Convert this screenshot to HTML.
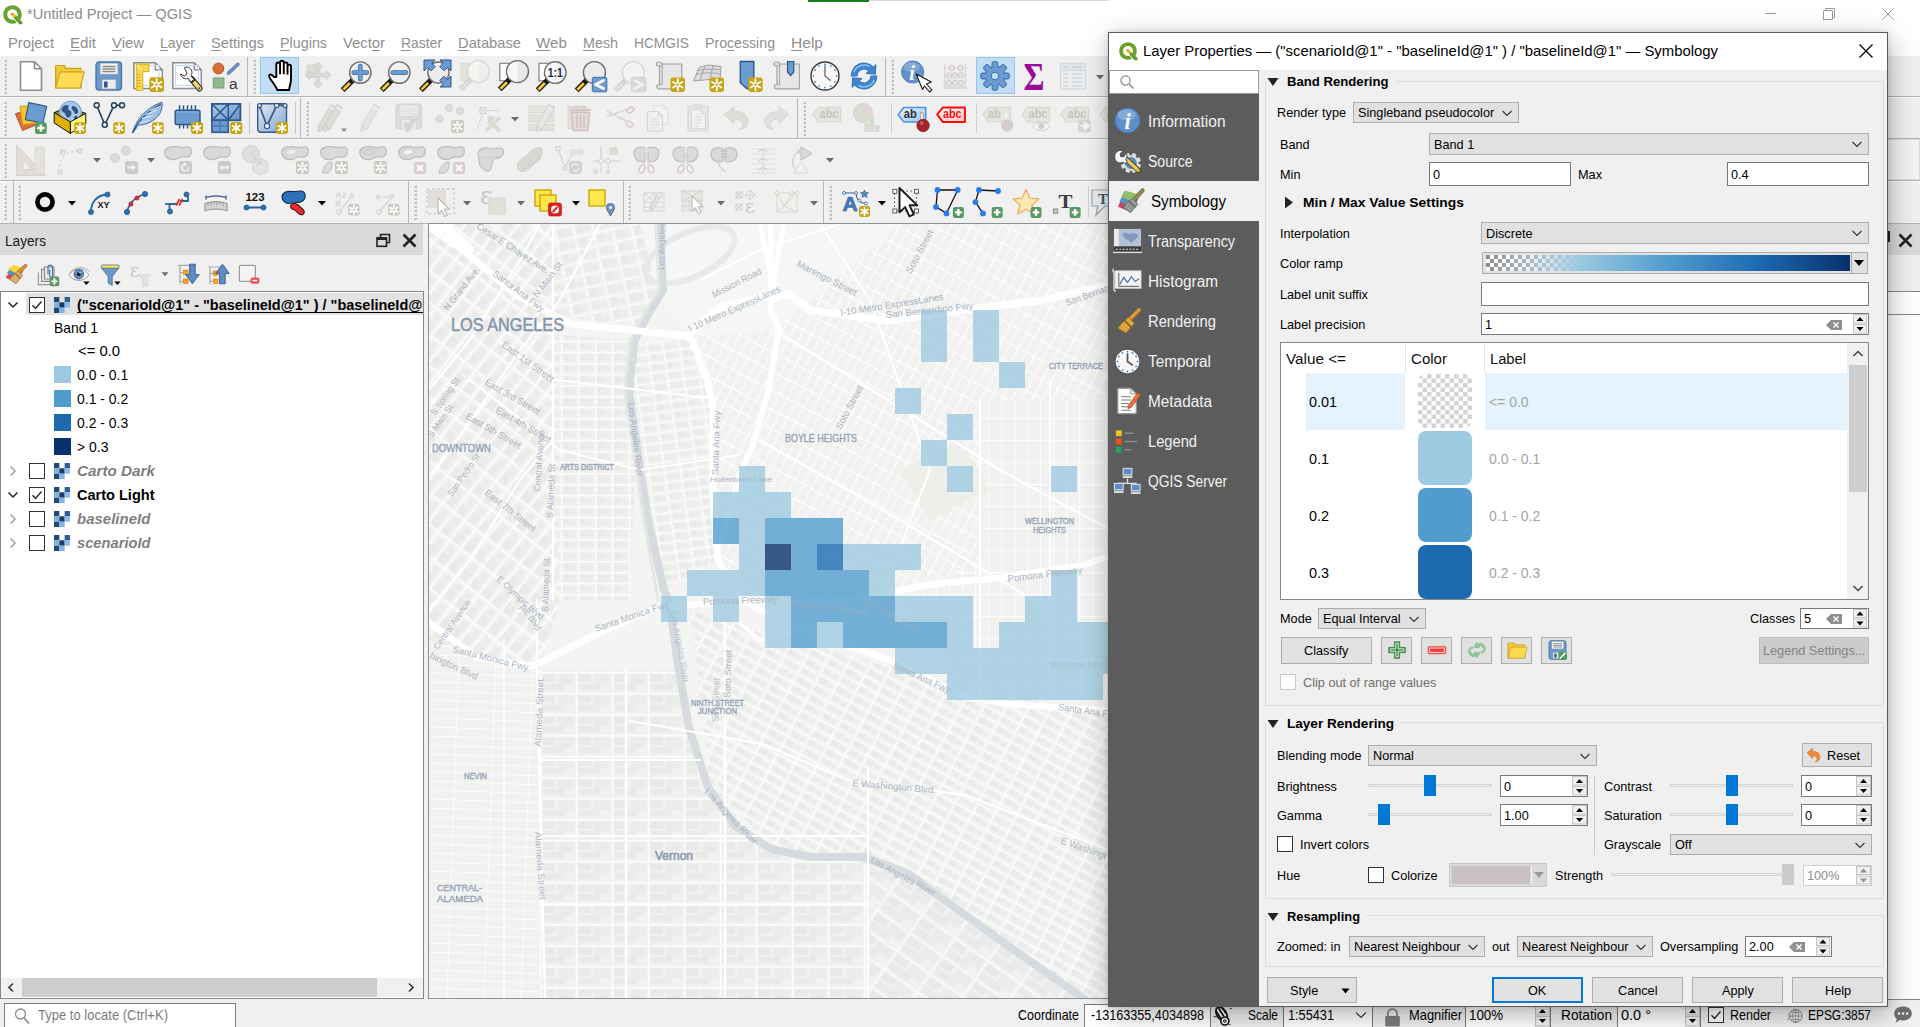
<!DOCTYPE html><html><head><meta charset="utf-8"><title>QGIS</title><style>
html,body{margin:0;padding:0}
body{width:1920px;height:1027px;position:relative;overflow:hidden;background:#f0f0f0;font-family:"Liberation Sans",sans-serif;}
.a{position:absolute;display:block}
.t{position:absolute;white-space:pre;display:block}
u{text-decoration:underline;text-underline-offset:1.5px;text-decoration-thickness:1px;text-decoration-skip-ink:none}
</style></head><body>
<div class="a" style="left:0px;top:0px;width:1920px;height:56px;background:#ffffff;"></div>
<div class="a" style="left:808px;top:0px;width:61px;height:2px;background:#1a7d1a;"></div>
<div class="a" style="left:869px;top:0px;width:240px;height:1px;background:#d9d9d9;"></div>
<svg class="a" style="left:2px;top:4px;" width="21" height="21" viewBox="0 0 24 24"><path d="M12 1.500C6 1.500 1.500 6 1.500 12S6 22.500 12 22.500c1.800 0 3.500-.4 5-1.200L13.800 17.700c-.6.200-1.200.300-1.800.300-3.300 0-6-2.700-6-6s2.700-6 6-6 6 2.700 6 6c0 1.100-.3 2.100-.8 3l3.400 3.400c1.200-1.800 1.900-4 1.900-6.400C22.500 6 18 1.500 12 1.500z" fill="#6aa22c"/><path d="M9.800 9.600l4.200 1.200-2.800 2.800z" fill="#ee7913"/><path d="M11.200 13.600l2.800-2.800 2.300 2.400-2.800 2.800z" fill="#f0c020"/><path d="M13.500 16l2.800-2.800 7 7.300v2.500h-3.300z" fill="#5a962a"/><path d="M14.600 15l1-1 7.200 7.400" stroke="#8cc04a" stroke-width=".8" fill="none"/></svg>
<span class="t" style="left:27.0px;top:4.0px;font-size:15px;line-height:20px;color:#8c8c8c;transform:scaleX(0.9799);transform-origin:0 50%;">*Untitled Project — QGIS</span>
<svg class="a" style="left:1750px;top:0px;" width="170" height="30" viewBox="0 0 170 30"><path d="M15 13.5h11" stroke="#9a9a9a" stroke-width="1" fill="none"/><path d="M75.5 10.5v-2h9v9h-2M73.5 10.5h9v9h-9z" stroke="#9a9a9a" stroke-width="1" fill="none"/><path d="M132.5 8.5l11 11M143.5 8.5l-11 11" stroke="#9a9a9a" stroke-width="1" fill="none"/></svg>
<span class="t" style="left:8.0px;top:33.0px;font-size:15px;line-height:20px;color:#8f8f8f;transform:scaleX(0.9854);transform-origin:0 50%;">Pro<u>j</u>ect</span>
<span class="t" style="left:70.0px;top:33.0px;font-size:15px;line-height:20px;color:#8f8f8f;transform:scaleX(1.0059);transform-origin:0 50%;"><u>E</u>dit</span>
<span class="t" style="left:112.0px;top:33.0px;font-size:15px;line-height:20px;color:#8f8f8f;transform:scaleX(0.9925);transform-origin:0 50%;"><u>V</u>iew</span>
<span class="t" style="left:160.0px;top:33.0px;font-size:15px;line-height:20px;color:#8f8f8f;transform:scaleX(0.9329);transform-origin:0 50%;"><u>L</u>ayer</span>
<span class="t" style="left:211.0px;top:33.0px;font-size:15px;line-height:20px;color:#8f8f8f;transform:scaleX(0.9779);transform-origin:0 50%;"><u>S</u>ettings</span>
<span class="t" style="left:280.0px;top:33.0px;font-size:15px;line-height:20px;color:#8f8f8f;transform:scaleX(0.9554);transform-origin:0 50%;"><u>P</u>lugins</span>
<span class="t" style="left:343.0px;top:33.0px;font-size:15px;line-height:20px;color:#8f8f8f;transform:scaleX(0.9877);transform-origin:0 50%;">Vect<u>o</u>r</span>
<span class="t" style="left:401.0px;top:33.0px;font-size:15px;line-height:20px;color:#8f8f8f;transform:scaleX(0.9281);transform-origin:0 50%;"><u>R</u>aster</span>
<span class="t" style="left:458.0px;top:33.0px;font-size:15px;line-height:20px;color:#8f8f8f;transform:scaleX(0.9812);transform-origin:0 50%;"><u>D</u>atabase</span>
<span class="t" style="left:536.0px;top:33.0px;font-size:15px;line-height:20px;color:#8f8f8f;transform:scaleX(1.0141);transform-origin:0 50%;"><u>W</u>eb</span>
<span class="t" style="left:583.0px;top:33.0px;font-size:15px;line-height:20px;color:#8f8f8f;transform:scaleX(0.9543);transform-origin:0 50%;"><u>M</u>esh</span>
<span class="t" style="left:634.0px;top:33.0px;font-size:15px;line-height:20px;color:#8f8f8f;transform:scaleX(0.9167);transform-origin:0 50%;">HCMGIS</span>
<span class="t" style="left:705.0px;top:33.0px;font-size:15px;line-height:20px;color:#8f8f8f;transform:scaleX(0.9434);transform-origin:0 50%;">Pro<u>c</u>essing</span>
<span class="t" style="left:791.0px;top:33.0px;font-size:15px;line-height:20px;color:#8f8f8f;transform:scaleX(1.0373);transform-origin:0 50%;"><u>H</u>elp</span>
<div class="a" style="left:0px;top:96px;width:1920px;height:1px;background:#b4b4b4;"></div>
<div class="a" style="left:0px;top:97px;width:1920px;height:1px;background:#fafafa;"></div>
<div class="a" style="left:0px;top:138px;width:1920px;height:1px;background:#b4b4b4;"></div>
<div class="a" style="left:0px;top:139px;width:1920px;height:1px;background:#fafafa;"></div>
<div class="a" style="left:0px;top:180px;width:1920px;height:1px;background:#b4b4b4;"></div>
<div class="a" style="left:0px;top:181px;width:1920px;height:1px;background:#fafafa;"></div>
<div class="a" style="left:0px;top:223px;width:1920px;height:1px;background:#b4b4b4;"></div>
<div class="a" style="left:0px;top:224px;width:1920px;height:1px;background:#fafafa;"></div>
<svg class="a" style="left:4px;top:59px;" width="3" height="35" viewBox="0 0 3 35"><path d="M2.6 0.2V2.8H0z" fill="#a3a3a3"/><path d="M2.6 4.2V6.8H0z" fill="#a3a3a3"/><path d="M2.6 8.2V10.8H0z" fill="#a3a3a3"/><path d="M2.6 12.2V14.8H0z" fill="#a3a3a3"/><path d="M2.6 16.2V18.8H0z" fill="#a3a3a3"/><path d="M2.6 20.2V22.8H0z" fill="#a3a3a3"/><path d="M2.6 24.2V26.8H0z" fill="#a3a3a3"/><path d="M2.6 28.2V30.8H0z" fill="#a3a3a3"/><path d="M2.6 32.2V34.8H0z" fill="#a3a3a3"/></svg>
<div class="a" style="left:247px;top:57px;width:1px;height:39px;background:#b9b9b9;"></div>
<svg class="a" style="left:253px;top:59px;" width="3" height="35" viewBox="0 0 3 35"><path d="M2.6 0.2V2.8H0z" fill="#a3a3a3"/><path d="M2.6 4.2V6.8H0z" fill="#a3a3a3"/><path d="M2.6 8.2V10.8H0z" fill="#a3a3a3"/><path d="M2.6 12.2V14.8H0z" fill="#a3a3a3"/><path d="M2.6 16.2V18.8H0z" fill="#a3a3a3"/><path d="M2.6 20.2V22.8H0z" fill="#a3a3a3"/><path d="M2.6 24.2V26.8H0z" fill="#a3a3a3"/><path d="M2.6 28.2V30.8H0z" fill="#a3a3a3"/><path d="M2.6 32.2V34.8H0z" fill="#a3a3a3"/></svg>
<div class="a" style="left:885px;top:57px;width:1px;height:39px;background:#b9b9b9;"></div>
<svg class="a" style="left:891px;top:59px;" width="3" height="35" viewBox="0 0 3 35"><path d="M2.6 0.2V2.8H0z" fill="#a3a3a3"/><path d="M2.6 4.2V6.8H0z" fill="#a3a3a3"/><path d="M2.6 8.2V10.8H0z" fill="#a3a3a3"/><path d="M2.6 12.2V14.8H0z" fill="#a3a3a3"/><path d="M2.6 16.2V18.8H0z" fill="#a3a3a3"/><path d="M2.6 20.2V22.8H0z" fill="#a3a3a3"/><path d="M2.6 24.2V26.8H0z" fill="#a3a3a3"/><path d="M2.6 28.2V30.8H0z" fill="#a3a3a3"/><path d="M2.6 32.2V34.8H0z" fill="#a3a3a3"/></svg>
<div class="a" style="left:260px;top:57px;width:39px;height:37px;background:#c2dcf3;border:1px solid #90c8f6;box-sizing:border-box;"></div>
<div class="a" style="left:976px;top:57px;width:39px;height:37px;background:#c2dcf3;border:1px solid #90c8f6;box-sizing:border-box;"></div>
<svg class="a" style="left:16.0px;top:61.0px;overflow:visible;" width="30" height="30" viewBox="0 0 30 30"><path d="M4.5 0.7h14l7 7v21.6h-21z" fill="#fff" stroke="#8c8c8c" stroke-width="1.6" stroke-linejoin="round"/><path d="M18.5 0.7v7h7" fill="none" stroke="#8c8c8c" stroke-width="1.6" stroke-linejoin="round"/></svg>
<svg class="a" style="left:54.0px;top:61.0px;overflow:visible;" width="30" height="30" viewBox="0 0 30 30"><path d="M1.7 4.5h9.300v2.800h16v19.700H1.700z" fill="#f4c93a" stroke="#cfa41b" stroke-width="1.200" stroke-linejoin="round"/><path d="M1.700 27V6" stroke="#cfa41b" stroke-width="1.2"/><path d="M1.700 27L6 10.800h24.200L26 27z" fill="#fddb52" stroke="#cfa41b" stroke-width="1.200" stroke-linejoin="round"/></svg>
<svg class="a" style="left:93.0px;top:61.0px;overflow:visible;" width="30" height="30" viewBox="0 0 30 30"><rect x="3" y="1" width="25.500" height="28" rx="3" fill="#6c98ca" stroke="#4773a8" stroke-width="1.3"/><rect x="7.500" y="2.500" width="17" height="10.500" fill="#f4f4f4" stroke="#d0d0d0" stroke-width=".6"/><path d="M9.500 5.500h13M9.500 8h13M9.500 10.500h13" stroke="#8a8a8a" stroke-width="1.4"/><rect x="9" y="18.500" width="14" height="9.500" fill="#ededed" stroke="#9aa7b8" stroke-width=".8"/><rect x="11" y="20.500" width="3.600" height="6" fill="#35588a"/></svg>
<svg class="a" style="left:133.0px;top:61.0px;overflow:visible;" width="30" height="30" viewBox="0 0 30 30"><path d="M0.8 1.75h21.5l7 7v18.7h-28.5z" fill="#fff" stroke="#8c8c8c" stroke-width="1.5" stroke-linejoin="round"/><path d="M22.3 1.75v7h7" fill="none" stroke="#8c8c8c" stroke-width="1.5" stroke-linejoin="round"/><rect x="7" y="4.500" width="19" height="20" fill="none" stroke="#c9d8f6" stroke-width="1.200"/><path d="M3.250 3.100H16v7.500H9.800V29.400H3.250z" fill="#f9d94a" stroke="#d9ae1c" stroke-width="1"/><path d="M4 4l5 5" stroke="#fbe98a" stroke-width="1.500"/><path d="M4 13.500h3.500M4 16.500h3.500M4 19.500h3.500M4 22.500h3.500M4 25.500h3.500" stroke="#d9ae1c" stroke-width="1"/><rect x="16.4" y="16.3" width="14.6" height="14.6" rx="2.4" fill="#c8a415"/><path d="M23.7 23.6L23.7 29.1M23.7 23.6L18.9 26.4M23.7 23.6L18.9 20.8M23.7 23.6L23.7 18.1M23.7 23.6L28.5 20.8M23.7 23.6L28.5 26.4" stroke="#fff" stroke-width="1.9" stroke-linecap="round"/><circle cx="23.7" cy="23.6" r="1.2" fill="#c8a415"/></svg>
<svg class="a" style="left:172.0px;top:61.0px;overflow:visible;" width="30" height="30" viewBox="0 0 30 30"><path d="M0.8 1.75h21.5l7 7v18.7h-28.5z" fill="#fff" stroke="#8c8c8c" stroke-width="1.5" stroke-linejoin="round"/><path d="M22.3 1.75v7h7" fill="none" stroke="#8c8c8c" stroke-width="1.5" stroke-linejoin="round"/><rect x="3.500" y="4.500" width="23" height="20" fill="none" stroke="#c9d8f6" stroke-width="1.300"/><path d="M19.500 18l8 9.500" stroke="#2a2a2a" stroke-width="6" stroke-linecap="round"/><path d="M19.500 18l8 9.500" stroke="#f0d878" stroke-width="4" stroke-linecap="round"/><path d="M19 17l3 3.500" stroke="#2a2a2a" stroke-width="5"/><circle cx="27.300" cy="27.300" r="1" fill="#444"/><path d="M12.500 6.500c3.500-1.500 7.500 1 7.500 5 0 1.500-.5 2.500-1 3.500l3 3.500-3 2.500-3-3.500c-3.500 1-7-1-7.500-4.500l4 2 2.500-2z" fill="#f4f4f4" stroke="#3a3a3a" stroke-width="1"/></svg>
<svg class="a" style="left:211.0px;top:61.0px;overflow:visible;" width="30" height="30" viewBox="0 0 30 30"><circle cx="7.400" cy="7.500" r="5.400" fill="#d66f38" stroke="#b8541f" stroke-width="1"/><path d="M17.500 12L27 3.300" stroke="#3f6ea6" stroke-width="3.400" stroke-linecap="round"/><path d="M17.500 12L27 3.300" stroke="#6b9bd0" stroke-width="2" stroke-linecap="round"/><rect x="2.300" y="17" width="10.600" height="10" fill="#8fb98f" stroke="#6fa070" stroke-width="1"/><text x="22.200" y="27.500" font-size="15.500" text-anchor="middle" font-family="Liberation Sans, sans-serif" fill="#3a3a3a">a</text></svg>
<svg class="a" style="left:264.0px;top:61.0px;overflow:visible;" width="30" height="30" viewBox="0 0 30 30"><g transform="translate(0.8,-2.6) scale(1.13)" stroke-width="1.7"><path d="M10.200 16.500V5.400c0-2.400 3.300-2.400 3.300 0v-1.600c0-2.300 3.300-2.300 3.300 0v1.400c0-2.200 3.300-2.200 3.300 0V7c0-2 3.100-2 3.100 0v11.500c0 3.500-1.200 5.500-1.700 9.500h-10.500c-.7-2.500-2.600-5-4.400-7.500-1.500-2-3.600-4.400-2.600-5.600 1.200-1.400 3 .1 4.300 1.600z" fill="#fff" stroke="#000" stroke-width="1.700" stroke-linejoin="round"/><path d="M13.500 5.500v8.500M16.800 5.500v8.500M20.100 7v7.500" stroke="#000" stroke-width="1.700"/></g></svg>
<svg class="a" style="left:303.0px;top:61.0px;overflow:visible;" width="30" height="30" viewBox="0 0 30 30"><rect x="4" y="4" width="12" height="12" fill="#e0ded6" stroke="#cfcdc6" stroke-width=".8"/><path d="M15 1l4.500 5h-2.700v6.200H23V9.500l5 4.500-5 4.500v-2.700h-6.200V22h2.700L15 27l-4.500-5h2.700v-6.200H7v2.700L2 14l5-4.500v2.700h6.200V6h-2.700z" fill="#d6d9dc" stroke="#c6c9cc" stroke-width=".8" opacity=".85"/></svg>
<svg class="a" style="left:342.0px;top:61.0px;overflow:visible;" width="30" height="30" viewBox="0 0 30 30"><path d="M10.9 19.0L0.7 29.2" stroke="#161616" stroke-width="5.4" stroke-linecap="butt"/><path d="M7.9 22.0L1.4 28.5" stroke="#f7cb2d" stroke-width="2.7"/><circle cx="18.3" cy="11.6" r="10.7" fill="#efefef" stroke="#6e6e6e" stroke-width="1.4"/><path d="M10.1 9.6A8.2 8.2 0 0 1 20.3 3.4" stroke="#fff" stroke-width="1.2" fill="none" opacity=".8"/><path d="M18.300 5v13.200M11.700 11.600h13.200" stroke="#3b6aa0" stroke-width="4.600" stroke-linecap="round"/><path d="M18.300 5v13.200M11.700 11.600h13.200" stroke="#6b9bd0" stroke-width="3.400" stroke-linecap="round"/></svg>
<svg class="a" style="left:381.0px;top:61.0px;overflow:visible;" width="30" height="30" viewBox="0 0 30 30"><path d="M10.9 19.0L0.7 29.2" stroke="#161616" stroke-width="5.4" stroke-linecap="butt"/><path d="M7.9 22.0L1.4 28.5" stroke="#f7cb2d" stroke-width="2.7"/><circle cx="18.3" cy="11.6" r="10.7" fill="#efefef" stroke="#6e6e6e" stroke-width="1.4"/><path d="M10.1 9.6A8.2 8.2 0 0 1 20.3 3.4" stroke="#fff" stroke-width="1.2" fill="none" opacity=".8"/><path d="M11.700 11.600h13.200" stroke="#3b6aa0" stroke-width="4.600" stroke-linecap="round"/><path d="M11.700 11.600h13.200" stroke="#6b9bd0" stroke-width="3.400" stroke-linecap="round"/></svg>
<svg class="a" style="left:420.0px;top:61.0px;overflow:visible;" width="30" height="30" viewBox="0 0 30 30"><path d="M11.1 18.9L0.9 29.1" stroke="#161616" stroke-width="5.4" stroke-linecap="butt"/><path d="M8.1 21.9L1.6 28.4" stroke="#f7cb2d" stroke-width="2.7"/><circle cx="18.4" cy="11.6" r="10.6" fill="#ececec" stroke="#6e6e6e" stroke-width="1.4"/><path d="M10.3 9.6A8.1 8.1 0 0 1 20.4 3.5" stroke="#fff" stroke-width="1.2" fill="none" opacity=".8"/><path d="M4 -1H15L11.800 2.200 15.200 5.600 11 9.800 7.600 6.400 4 10z" fill="#6b9bd0" stroke="#2f5688" stroke-width="1" stroke-linejoin="round"/><path d="M31 -1H20L23.200 2.200 19.800 5.600 24 9.800 27.400 6.400 31 10z" fill="#6b9bd0" stroke="#2f5688" stroke-width="1" stroke-linejoin="round"/><path d="M31 26H20L23.200 22.800 19.800 19.400 24 15.200 27.400 18.600 31 15z" fill="#6b9bd0" stroke="#2f5688" stroke-width="1" stroke-linejoin="round"/></svg>
<svg class="a" style="left:459.0px;top:61.0px;overflow:visible;" width="30" height="30" viewBox="0 0 30 30"><rect x="2" y="2.500" width="17" height="17" fill="#e4e2da" stroke="#dad8d0" stroke-width=".8"/><path d="M11.9 18.2L1.7 28.4" stroke="#d4d4d2" stroke-width="5.4" stroke-linecap="butt"/><path d="M8.9 21.2L2.4 27.7" stroke="#e4e2dc" stroke-width="2.7"/><circle cx="19.5" cy="10.6" r="11" fill="#eeeeec" stroke="#d9d9d9" stroke-width="1.4"/><path d="M19.5 0.3999999999999997A10.2 10.2 0 0 0 19.5 20.8z" fill="#f8f8f8" opacity="0.6"/><path d="M11.0 8.6A8.5 8.5 0 0 1 21.5 2.1" stroke="#fff" stroke-width="1.2" fill="none" opacity=".8"/></svg>
<svg class="a" style="left:498.0px;top:61.0px;overflow:visible;" width="30" height="30" viewBox="0 0 30 30"><rect x="1.800" y="2.300" width="17.500" height="17.500" fill="#fbfbfb" stroke="#8c8c8c" stroke-width="1.300"/><path d="M11.9 18.2L1.7 28.4" stroke="#161616" stroke-width="5.4" stroke-linecap="butt"/><path d="M8.9 21.2L2.4 27.7" stroke="#f7cb2d" stroke-width="2.7"/><circle cx="19.5" cy="10.6" r="11" fill="#e9e9e9" stroke="#6e6e6e" stroke-width="1.4"/><path d="M19.5 0.3999999999999997A10.2 10.2 0 0 0 19.5 20.8z" fill="#f8f8f8" opacity="0.9"/><path d="M11.0 8.6A8.5 8.5 0 0 1 21.5 2.1" stroke="#fff" stroke-width="1.2" fill="none" opacity=".8"/></svg>
<svg class="a" style="left:537.0px;top:61.0px;overflow:visible;" width="30" height="30" viewBox="0 0 30 30"><rect x="2" y="2.300" width="17" height="17.500" fill="#fbfbfb" stroke="#8c8c8c" stroke-width="1.300"/><path d="M10.9 19.0L0.7 29.2" stroke="#161616" stroke-width="5.4" stroke-linecap="butt"/><path d="M7.9 22.0L1.4 28.5" stroke="#f7cb2d" stroke-width="2.7"/><circle cx="18.3" cy="11.6" r="10.8" fill="#f0f0f0" stroke="#6e6e6e" stroke-width="1.4"/><path d="M18.3 1.599999999999999A10.0 10.0 0 0 0 18.3 21.599999999999998z" fill="#f8f8f8" opacity="0.9"/><path d="M10.0 9.6A8.3 8.3 0 0 1 20.3 3.3" stroke="#fff" stroke-width="1.2" fill="none" opacity=".8"/><text x="18.200" y="16.200" font-size="13.500" font-weight="bold" text-anchor="middle" font-family="Liberation Sans, sans-serif" fill="#1f2a30" textLength="15" lengthAdjust="spacingAndGlyphs">1:1</text></svg>
<svg class="a" style="left:577.0px;top:61.0px;overflow:visible;" width="30" height="30" viewBox="0 0 30 30"><path d="M9.8 19.2L-0.4 29.4" stroke="#161616" stroke-width="5.4" stroke-linecap="butt"/><path d="M6.8 22.2L0.3 28.7" stroke="#f7cb2d" stroke-width="2.7"/><circle cx="17.4" cy="11.6" r="11" fill="#ebebeb" stroke="#6e6e6e" stroke-width="1.4"/><path d="M8.9 9.6A8.5 8.5 0 0 1 19.4 3.1" stroke="#fff" stroke-width="1.2" fill="none" opacity=".8"/><rect x="15.300" y="16.300" width="14.500" height="14.500" rx="1.500" fill="#6b9bd0" stroke="#3f6ea6" stroke-width="1"/><path d="M26.500 19.500l-8 4 8 4" stroke="#fff" stroke-width="2.800" fill="none" stroke-linecap="round" stroke-linejoin="round"/></svg>
<svg class="a" style="left:616.0px;top:61.0px;overflow:visible;" width="30" height="30" viewBox="0 0 30 30"><path d="M9.8 19.2L-0.4 29.4" stroke="#d4d4d2" stroke-width="5.4" stroke-linecap="butt"/><path d="M6.8 22.2L0.3 28.7" stroke="#e4e2dc" stroke-width="2.7"/><circle cx="17.4" cy="11.6" r="11" fill="#f2f2f2" stroke="#d9d9d9" stroke-width="1.4"/><path d="M8.9 9.6A8.5 8.5 0 0 1 19.4 3.1" stroke="#fff" stroke-width="1.2" fill="none" opacity=".8"/><rect x="15.300" y="16.300" width="14.500" height="14.500" rx="1.500" fill="#d6d9dc" stroke="#d0d3d6" stroke-width="1"/><path d="M18.500 19.500l8 4-8 4" stroke="#f1f1f1" stroke-width="2.800" fill="none" stroke-linecap="round" stroke-linejoin="round"/></svg>
<svg class="a" style="left:654.0px;top:61.0px;overflow:visible;" width="30" height="30" viewBox="0 0 30 30"><g transform="translate(0.0,0)"><path d="M4.500 1c-3 0-3 4 0 4h1v18.500c-3.500 0-3.500 4.300 0 4.300h22.300V3H8.200C8.200 1.500 6.500 1 4.500 1z" fill="#e3e3e3" stroke="#a3a3a3" stroke-width="1.200" stroke-linejoin="round"/><path d="M8.200 3v20.500H5.500M5.500 5h2.700" stroke="#a3a3a3" stroke-width="1" fill="none"/><path d="M9 4h18v23H9z" fill="#e9e9e9" opacity=".6"/></g><rect x="16.5" y="16.5" width="14.5" height="14.5" rx="2.4" fill="#c8a415"/><path d="M23.8 23.8L23.8 29.3M23.8 23.8L19.0 26.5M23.8 23.8L19.0 21.0M23.8 23.8L23.8 18.2M23.8 23.8L28.5 21.0M23.8 23.8L28.5 26.5" stroke="#fff" stroke-width="1.9" stroke-linecap="round"/><circle cx="23.75" cy="23.75" r="1.2" fill="#c8a415"/></svg>
<svg class="a" style="left:693.0px;top:61.0px;overflow:visible;" width="30" height="30" viewBox="0 0 30 30"><path d="M0.500 20L6 6.500l9-2.500 13 1.500-1 14-11-1z" fill="#dcdcdc" stroke="#a0a0a0" stroke-width="1"/><path d="M3 13.500c7-2 17-2.500 24-.5M12 5l-5 14M20 4.500l-3 14.500M4.500 9.500c7-1.500 16-2 23-.5" stroke="#a0a0a0" stroke-width=".9" fill="none"/><rect x="16.5" y="16.5" width="14.5" height="14.5" rx="2.4" fill="#c8a415"/><path d="M23.8 23.8L23.8 29.3M23.8 23.8L19.0 26.5M23.8 23.8L19.0 21.0M23.8 23.8L23.8 18.2M23.8 23.8L28.5 21.0M23.8 23.8L28.5 26.5" stroke="#fff" stroke-width="1.9" stroke-linecap="round"/><circle cx="23.75" cy="23.75" r="1.2" fill="#c8a415"/></svg>
<svg class="a" style="left:733.0px;top:61.0px;overflow:visible;" width="30" height="30" viewBox="0 0 30 30"><path d="M7.300 0.500h13.500v23.500l-6.800 3.800-6.700-6z" fill="#6b9bd0" stroke="#2f5688" stroke-width="1.400" stroke-linejoin="round"/><rect x="15.2" y="16.5" width="14.5" height="14.5" rx="2.4" fill="#c8a415"/><path d="M22.4 23.8L22.4 29.3M22.4 23.8L17.7 26.5M22.4 23.8L17.7 21.0M22.4 23.8L22.4 18.2M22.4 23.8L27.2 21.0M22.4 23.8L27.2 26.5" stroke="#fff" stroke-width="1.9" stroke-linecap="round"/><circle cx="22.45" cy="23.75" r="1.2" fill="#c8a415"/></svg>
<svg class="a" style="left:771.0px;top:61.0px;overflow:visible;" width="30" height="30" viewBox="0 0 30 30"><g transform="translate(0.5,0)"><path d="M4.500 1c-3 0-3 4 0 4h1v18.500c-3.500 0-3.500 4.300 0 4.300h22.300V3H8.200C8.200 1.500 6.500 1 4.500 1z" fill="#e3e3e3" stroke="#a3a3a3" stroke-width="1.200" stroke-linejoin="round"/><path d="M8.200 3v20.500H5.500M5.500 5h2.700" stroke="#a3a3a3" stroke-width="1" fill="none"/><path d="M9 4h18v23H9z" fill="#e9e9e9" opacity=".6"/></g><path d="M16.500 0.500h6.300v10.500l-3.200 3.500-3.100-3.500z" fill="#6b9bd0" stroke="#2f5688" stroke-width="1.200"/></svg>
<svg class="a" style="left:810.0px;top:61.0px;overflow:visible;" width="30" height="30" viewBox="0 0 30 30"><circle cx="15" cy="15" r="14" fill="#f7f7f7" stroke="#3a3a3a" stroke-width="1.400"/><circle cx="26.6" cy="15.0" r=".85" fill="#3c78c0"/><circle cx="25.0" cy="20.8" r=".85" fill="#3c78c0"/><circle cx="20.8" cy="25.0" r=".85" fill="#3c78c0"/><circle cx="15.0" cy="26.6" r=".85" fill="#3c78c0"/><circle cx="9.2" cy="25.0" r=".85" fill="#3c78c0"/><circle cx="5.0" cy="20.8" r=".85" fill="#3c78c0"/><circle cx="3.4" cy="15.0" r=".85" fill="#3c78c0"/><circle cx="5.0" cy="9.2" r=".85" fill="#3c78c0"/><circle cx="9.2" cy="5.0" r=".85" fill="#3c78c0"/><circle cx="15.0" cy="3.4" r=".85" fill="#3c78c0"/><circle cx="20.8" cy="5.0" r=".85" fill="#3c78c0"/><circle cx="25.0" cy="9.2" r=".85" fill="#3c78c0"/><path d="M15 4.600V15l5.600 4.600" stroke="#7a7a7a" stroke-width="1.500" fill="none"/></svg>
<svg class="a" style="left:849.0px;top:61.0px;overflow:visible;" width="30" height="30" viewBox="0 0 30 30"><g transform="rotate(0 15 15)"><path d="M5.2 15.3A9.8 9.8 0 0 1 22.3 8.4" stroke="#2d6db5" stroke-width="7" fill="none"/><path d="M26.4 13.1L26.9 3.7L17.0 12.5z" fill="#3f86cf" stroke="#2d6db5" stroke-width="1" stroke-linejoin="round"/><path d="M5.2 15.3A9.8 9.8 0 0 1 22.3 8.4" stroke="#3f86cf" stroke-width="5.600" fill="none"/><path d="M4.7 11.2A11.0 11.0 0 0 1 20.5 5.5" stroke="#8fc0ee" stroke-width="1.500" fill="none"/></g><g transform="rotate(180 15 15)"><path d="M5.2 15.3A9.8 9.8 0 0 1 22.3 8.4" stroke="#2d6db5" stroke-width="7" fill="none"/><path d="M26.4 13.1L26.9 3.7L17.0 12.5z" fill="#3f86cf" stroke="#2d6db5" stroke-width="1" stroke-linejoin="round"/><path d="M5.2 15.3A9.8 9.8 0 0 1 22.3 8.4" stroke="#3f86cf" stroke-width="5.600" fill="none"/><path d="M4.7 11.2A11.0 11.0 0 0 1 20.5 5.5" stroke="#8fc0ee" stroke-width="1.500" fill="none"/></g></svg>
<svg class="a" style="left:899.0px;top:61.0px;overflow:visible;" width="30" height="30" viewBox="0 0 30 30"><circle cx="13.600" cy="11" r="11" fill="#6592c8" stroke="#4a7ab5" stroke-width="1"/><ellipse cx="12.500" cy="6" rx="8" ry="5" fill="#9fc0e6" opacity=".5"/><text x="13" y="18.500" font-size="20" font-style="italic" font-weight="bold" text-anchor="middle" font-family="Liberation Serif, serif" fill="#fff">i</text><path d="M17.200 13l15.100 8-4.800 2 5.500 6-2.500 2-5-6-2 3.500z" fill="#fff" stroke="#1a1a1a" stroke-width="1.100" stroke-linejoin="round"/></svg>
<svg class="a" style="left:940.0px;top:61.0px;overflow:visible;" width="30" height="30" viewBox="0 0 30 30"><path d="M4.500 3v23M25.500 3v23M4.500 7h21M4.500 14.500h21M4.500 22h21" stroke="#d6d6d6" stroke-width="1.200" fill="none"/><rect x="3" y="25.500" width="24" height="2.500" fill="#dadada"/><circle cx="12" cy="7" r="2.600" fill="none" stroke="#dccaca" stroke-width="1.100"/><circle cx="20.5" cy="7" r="2.600" fill="none" stroke="#dccaca" stroke-width="1.100"/><circle cx="9" cy="14.5" r="2.600" fill="none" stroke="#d0d0d0" stroke-width="1.100"/><circle cx="15" cy="14.5" r="2.600" fill="none" stroke="#d0d0d0" stroke-width="1.100"/><circle cx="21" cy="14.5" r="2.600" fill="none" stroke="#d0d0d0" stroke-width="1.100"/><circle cx="9" cy="22" r="2.600" fill="none" stroke="#d0d0d0" stroke-width="1.100"/><circle cx="15" cy="22" r="2.600" fill="none" stroke="#d0d0d0" stroke-width="1.100"/><circle cx="21" cy="22" r="2.600" fill="none" stroke="#d0d0d0" stroke-width="1.100"/></svg>
<svg class="a" style="left:980.0px;top:61.0px;overflow:visible;" width="30" height="30" viewBox="0 0 30 30"><rect x="12.100" y="0.800" width="5.800" height="9" rx="1.600" fill="#6b9bd0" stroke="#3f74b5" stroke-width="1.100" transform="rotate(0 15 15)"/><rect x="12.100" y="0.800" width="5.800" height="9" rx="1.600" fill="#6b9bd0" stroke="#3f74b5" stroke-width="1.100" transform="rotate(45 15 15)"/><rect x="12.100" y="0.800" width="5.800" height="9" rx="1.600" fill="#6b9bd0" stroke="#3f74b5" stroke-width="1.100" transform="rotate(90 15 15)"/><rect x="12.100" y="0.800" width="5.800" height="9" rx="1.600" fill="#6b9bd0" stroke="#3f74b5" stroke-width="1.100" transform="rotate(135 15 15)"/><rect x="12.100" y="0.800" width="5.800" height="9" rx="1.600" fill="#6b9bd0" stroke="#3f74b5" stroke-width="1.100" transform="rotate(180 15 15)"/><rect x="12.100" y="0.800" width="5.800" height="9" rx="1.600" fill="#6b9bd0" stroke="#3f74b5" stroke-width="1.100" transform="rotate(225 15 15)"/><rect x="12.100" y="0.800" width="5.800" height="9" rx="1.600" fill="#6b9bd0" stroke="#3f74b5" stroke-width="1.100" transform="rotate(270 15 15)"/><rect x="12.100" y="0.800" width="5.800" height="9" rx="1.600" fill="#6b9bd0" stroke="#3f74b5" stroke-width="1.100" transform="rotate(315 15 15)"/><circle cx="15" cy="15" r="9.600" fill="#6b9bd0" stroke="#3f74b5" stroke-width="1.100"/><rect x="12.900" y="2" width="4.200" height="9" rx="1" fill="#6b9bd0" transform="rotate(0 15 15)"/><rect x="12.900" y="2" width="4.200" height="9" rx="1" fill="#6b9bd0" transform="rotate(45 15 15)"/><rect x="12.900" y="2" width="4.200" height="9" rx="1" fill="#6b9bd0" transform="rotate(90 15 15)"/><rect x="12.900" y="2" width="4.200" height="9" rx="1" fill="#6b9bd0" transform="rotate(135 15 15)"/><rect x="12.900" y="2" width="4.200" height="9" rx="1" fill="#6b9bd0" transform="rotate(180 15 15)"/><rect x="12.900" y="2" width="4.200" height="9" rx="1" fill="#6b9bd0" transform="rotate(225 15 15)"/><rect x="12.900" y="2" width="4.200" height="9" rx="1" fill="#6b9bd0" transform="rotate(270 15 15)"/><rect x="12.900" y="2" width="4.200" height="9" rx="1" fill="#6b9bd0" transform="rotate(315 15 15)"/><circle cx="15" cy="15" r="3.700" fill="#c2dcf3" stroke="#3f74b5" stroke-width="1.100"/></svg>
<svg class="a" style="left:1019.0px;top:61.0px;overflow:visible;" width="30" height="30" viewBox="0 0 30 30"><text x="15" y="28.500" font-size="40" text-anchor="middle" font-family="Liberation Serif, serif" fill="#9a0a9a" font-weight="bold" textLength="21" lengthAdjust="spacingAndGlyphs">Σ</text></svg>
<svg class="a" style="left:1058.0px;top:61.0px;overflow:visible;" width="30" height="30" viewBox="0 0 30 30"><rect x="2.500" y="2.500" width="25" height="25.500" fill="#ecedee" stroke="#d3d9df" stroke-width="1.200"/><rect x="3" y="3" width="24" height="6" fill="#e2e5e9"/><path d="M2.500 9.500h25" stroke="#d3d9df" stroke-width="1.200"/><path d="M5.500 6h5M13.500 6h10.500" stroke="#cfd6dd" stroke-width="2"/><path d="M5.500 13h5M13.500 13h10.500M5.500 17h5M13.500 17h10.500M5.500 21h5M13.500 21h10.500M5.500 25h5M13.500 25h10.500" stroke="#d3d9df" stroke-width="1.300"/></svg>
<svg class="a" style="left:1085.0px;top:62.0px;overflow:visible;" width="30" height="30" viewBox="0 0 30 30"><path d="M11 13h8l-4 4.500z" fill="#6a6a6a"/></svg>
<svg class="a" style="left:4px;top:101px;" width="3" height="35" viewBox="0 0 3 35"><path d="M2.6 0.2V2.8H0z" fill="#a3a3a3"/><path d="M2.6 4.2V6.8H0z" fill="#a3a3a3"/><path d="M2.6 8.2V10.8H0z" fill="#a3a3a3"/><path d="M2.6 12.2V14.8H0z" fill="#a3a3a3"/><path d="M2.6 16.2V18.8H0z" fill="#a3a3a3"/><path d="M2.6 20.2V22.8H0z" fill="#a3a3a3"/><path d="M2.6 24.2V26.8H0z" fill="#a3a3a3"/><path d="M2.6 28.2V30.8H0z" fill="#a3a3a3"/><path d="M2.6 32.2V34.8H0z" fill="#a3a3a3"/></svg>
<div class="a" style="left:249px;top:102px;width:1px;height:32px;background:#c6c6c6;"></div>
<div class="a" style="left:295px;top:102px;width:1px;height:32px;background:#c6c6c6;"></div>
<div class="a" style="left:300px;top:98px;width:1px;height:40px;background:#b9b9b9;"></div>
<svg class="a" style="left:306px;top:101px;" width="3" height="35" viewBox="0 0 3 35"><path d="M2.6 0.2V2.8H0z" fill="#a3a3a3"/><path d="M2.6 4.2V6.8H0z" fill="#a3a3a3"/><path d="M2.6 8.2V10.8H0z" fill="#a3a3a3"/><path d="M2.6 12.2V14.8H0z" fill="#a3a3a3"/><path d="M2.6 16.2V18.8H0z" fill="#a3a3a3"/><path d="M2.6 20.2V22.8H0z" fill="#a3a3a3"/><path d="M2.6 24.2V26.8H0z" fill="#a3a3a3"/><path d="M2.6 28.2V30.8H0z" fill="#a3a3a3"/><path d="M2.6 32.2V34.8H0z" fill="#a3a3a3"/></svg>
<div class="a" style="left:797px;top:98px;width:1px;height:40px;background:#b9b9b9;"></div>
<svg class="a" style="left:803px;top:101px;" width="3" height="35" viewBox="0 0 3 35"><path d="M2.6 0.2V2.8H0z" fill="#a3a3a3"/><path d="M2.6 4.2V6.8H0z" fill="#a3a3a3"/><path d="M2.6 8.2V10.8H0z" fill="#a3a3a3"/><path d="M2.6 12.2V14.8H0z" fill="#a3a3a3"/><path d="M2.6 16.2V18.8H0z" fill="#a3a3a3"/><path d="M2.6 20.2V22.8H0z" fill="#a3a3a3"/><path d="M2.6 24.2V26.8H0z" fill="#a3a3a3"/><path d="M2.6 28.2V30.8H0z" fill="#a3a3a3"/><path d="M2.6 32.2V34.8H0z" fill="#a3a3a3"/></svg>
<div class="a" style="left:891px;top:103px;width:1px;height:31px;background:#cfcfcf;"></div>
<div class="a" style="left:976px;top:103px;width:1px;height:31px;background:#cfcfcf;"></div>
<svg class="a" style="left:16.0px;top:103.0px;overflow:visible;" width="30" height="30" viewBox="0 0 30 30"><path d="M-0.600 10.800L13 6l7 16-13.500 5.500z" fill="#dd6b3c" stroke="#b9502a" stroke-width=".9" stroke-linejoin="round"/><path d="M4 3.300l14.200-.8 1.600 17.500-13.300 1.700z" fill="#f3c62b" stroke="#c9a21c" stroke-width=".9" stroke-linejoin="round"/><path d="M12.750 -0.400L30.700 3.300 26.900 20 9.400 16.700z" fill="#6b9bd0" stroke="#2f5688" stroke-width="1.100" stroke-linejoin="round"/><rect x="19" y="19.2" width="11.7" height="11.7" rx="2.2" fill="#5a9a62"/><path d="M24.85 21.4V28.7M21.2 25.049999999999997H28.5" stroke="#fff" stroke-width="2.4"/></svg>
<svg class="a" style="left:54.0px;top:103.0px;overflow:visible;" width="30" height="30" viewBox="0 0 30 30"><defs><clipPath id="gpc"><path d="M-2 -3h36v14l-17.600 8L-2 10z"/></clipPath></defs><path d="M0.200 9.600L14 4l17.800 6.400-15.400 8.400z" fill="#b08a08" stroke="#111" stroke-width="1"/><g clip-path="url(#gpc)"><circle cx="16.400" cy="9.200" r="11" fill="#a9c8ea" stroke="#6b9bd0" stroke-width="1"/><path d="M8 5c1.500-2.500 4.500-3.500 6-2.500s-.5 2.500.5 4 3 1 3 3.500-2 5-4 4.500-1.500-3.500-3-4.500S6.500 7.500 8 5zM18.500 3c2.500 0 5 2 5.500 4.500s-1 4-2.500 3.500-1-2.500-2.500-3.500-2-3.500-.5-4.500zM21 13c1.500-.5 3 .5 2.500 2s-2 2-3 1 .0-2.500.5-3z" fill="#2f5688"/></g><path d="M0.200 9.600v10.400l16.200 10.400V18.800z" fill="#dcb000" stroke="#111" stroke-width="1" stroke-linejoin="round"/><path d="M16.400 18.800L31.800 10.400v10.400L16.400 30.400z" fill="#fdf97a" stroke="#111" stroke-width="1" stroke-linejoin="round"/><rect x="20.2" y="19.2" width="11.7" height="11.7" rx="2.4" fill="#c8a415"/><path d="M26.0 25.0L26.0 29.3M26.0 25.0L22.4 27.2M26.0 25.0L22.4 22.9M26.0 25.0L26.0 20.8M26.0 25.0L29.7 22.9M26.0 25.0L29.7 27.2" stroke="#fff" stroke-width="1.700" stroke-linecap="round"/></svg>
<svg class="a" style="left:94.0px;top:103.0px;overflow:visible;" width="30" height="30" viewBox="0 0 30 30"><path d="M2.700 2.300l8.100 19.500L20 2.300h8" stroke="#24405e" stroke-width="1.600" fill="none"/><circle cx="2.700" cy="2.300" r="2.500" fill="#f4f4f4" stroke="#24405e" stroke-width="1.500"/><circle cx="20" cy="2.300" r="2.500" fill="#f4f4f4" stroke="#24405e" stroke-width="1.500"/><circle cx="28" cy="2.300" r="2.500" fill="#f4f4f4" stroke="#24405e" stroke-width="1.500"/><circle cx="10.800" cy="21.800" r="2.500" fill="#f4f4f4" stroke="#24405e" stroke-width="1.500"/><rect x="19.3" y="19.2" width="11.7" height="11.7" rx="2.4" fill="#c8a415"/><path d="M25.1 25.0L25.1 29.3M25.1 25.0L21.5 27.2M25.1 25.0L21.5 22.9M25.1 25.0L25.1 20.8M25.1 25.0L28.8 22.9M25.1 25.0L28.8 27.2" stroke="#fff" stroke-width="1.700" stroke-linecap="round"/></svg>
<svg class="a" style="left:133.0px;top:103.0px;overflow:visible;" width="30" height="30" viewBox="0 0 30 30"><path d="M-0.500 30C2.500 19 10 6 29 -0.800c1 8-3 16-13 20.500-4 2-8 2.500-10.500 2.500z" fill="#9fc0e6" stroke="#3d6aa2" stroke-width="1"/><path d="M-0.500 30C4 20 13 9 28 1" stroke="#2f5688" stroke-width="1.300" fill="none"/><path d="M6 20l11-2.500M9 15.500l11-3M12.500 11.500l11-4M17 7.500l9-3.500M4 24l9-2" stroke="#e4eefa" stroke-width="1"/><rect x="19" y="19.2" width="11.7" height="11.7" rx="2.4" fill="#c8a415"/><path d="M24.9 25.0L24.9 29.3M24.9 25.0L21.2 27.2M24.9 25.0L21.2 22.9M24.9 25.0L24.9 20.8M24.9 25.0L28.5 22.9M24.9 25.0L28.5 27.2" stroke="#fff" stroke-width="1.700" stroke-linecap="round"/></svg>
<svg class="a" style="left:173.0px;top:103.0px;overflow:visible;" width="30" height="30" viewBox="0 0 30 30"><path d="M6.6 2.300v5M6.6 21.500v4" stroke="#2f5688" stroke-width="1.500"/><path d="M10.5 2.300v5M10.5 21.500v4" stroke="#2f5688" stroke-width="1.500"/><path d="M14.5 2.300v5M14.5 21.500v4" stroke="#2f5688" stroke-width="1.500"/><path d="M18.5 2.300v5M18.5 21.500v4" stroke="#2f5688" stroke-width="1.500"/><path d="M22.4 2.300v5M22.4 21.500v4" stroke="#2f5688" stroke-width="1.500"/><rect x="2.200" y="7.300" width="24.800" height="14.200" rx="1.800" fill="#6b9bd0" stroke="#2f5688" stroke-width="1.400"/><path d="M3.500 9h22" stroke="#8fb5df" stroke-width="1"/><rect x="18" y="19" width="12" height="12" rx="2.4" fill="#c8a415"/><path d="M24.0 25.0L24.0 29.3M24.0 25.0L20.3 27.2M24.0 25.0L20.3 22.8M24.0 25.0L24.0 20.7M24.0 25.0L27.7 22.8M24.0 25.0L27.7 27.2" stroke="#fff" stroke-width="1.700" stroke-linecap="round"/></svg>
<svg class="a" style="left:211.0px;top:103.0px;overflow:visible;" width="30" height="30" viewBox="0 0 30 30"><defs><linearGradient id="nmg" x1="0" y1="0" x2="1" y2="1"><stop offset="0" stop-color="#b4cfee"/><stop offset="1" stop-color="#5f8fc6"/></linearGradient></defs><rect x="0.900" y="0.900" width="28.500" height="16.400" fill="url(#nmg)" stroke="#2f5688" stroke-width="1.800"/><path d="M1 1l16.300 16.300M17.300 1L1 17.300M17.300 1v16.300M29.400 1L17.300 17.300" stroke="#2f5688" stroke-width="1.500"/><rect x="0.900" y="17.300" width="16.400" height="12" fill="#6b9bd0" stroke="#2f5688" stroke-width="1.600"/><path d="M9 17.300v12M1 23h16.300" stroke="#4b78b0" stroke-width="1.400"/><rect x="19.2" y="19" width="12" height="12" rx="2.4" fill="#c8a415"/><path d="M25.2 25.0L25.2 29.3M25.2 25.0L21.5 27.2M25.2 25.0L21.5 22.8M25.2 25.0L25.2 20.7M25.2 25.0L28.9 22.8M25.2 25.0L28.9 27.2" stroke="#fff" stroke-width="1.700" stroke-linecap="round"/></svg>
<svg class="a" style="left:257.0px;top:103.0px;overflow:visible;" width="30" height="30" viewBox="0 0 30 30"><defs><linearGradient id="nvg" x1="0" y1="0" x2="1" y2="1"><stop offset="0" stop-color="#e3ebf5"/><stop offset="1" stop-color="#7fa4d0"/></linearGradient></defs><rect x="0.700" y="0.700" width="28.800" height="28.600" rx="3" fill="url(#nvg)" stroke="#35588a" stroke-width="1.400"/><path d="M2.200 2.300l7.800 20.600L19.700 2.300h8.700" stroke="#35588a" stroke-width="1.700" fill="none"/><circle cx="2.600" cy="2.600" r="2" fill="#f6f6f6" stroke="#35588a" stroke-width="1.200"/><circle cx="19.700" cy="2.500" r="2.200" fill="#f6f6f6" stroke="#35588a" stroke-width="1.200"/><circle cx="28" cy="2.600" r="2" fill="#f6f6f6" stroke="#35588a" stroke-width="1.200"/><circle cx="10" cy="22.900" r="2.600" fill="#f6f6f6" stroke="#35588a" stroke-width="1.200"/><rect x="19" y="19" width="12" height="12" rx="2.4" fill="#c8a415"/><path d="M25.0 25.0L25.0 29.3M25.0 25.0L21.3 27.2M25.0 25.0L21.3 22.8M25.0 25.0L25.0 20.7M25.0 25.0L28.7 22.8M25.0 25.0L28.7 27.2" stroke="#fff" stroke-width="1.700" stroke-linecap="round"/></svg>
<svg class="a" style="left:316.0px;top:103.0px;overflow:visible;" width="30" height="30" viewBox="0 0 30 30"><g transform="translate(-3,0)"><path d="M18 1.500l5.500 3L11 26 5 29l.5-6.500z" fill="#dedcd6" stroke="#d0cec8" stroke-width="1"/><path d="M5.500 22.500L11 26" stroke="#d0cec8" stroke-width="1"/><path d="M16.500 4l5.500 3" stroke="#f2f2f2" stroke-width="1.500"/></g><g transform="translate(3,0)"><path d="M18 1.500l5.500 3L11 26 5 29l.5-6.500z" fill="#dedcd6" stroke="#d0cec8" stroke-width="1"/><path d="M5.500 22.500L11 26" stroke="#d0cec8" stroke-width="1"/><path d="M16.500 4l5.500 3" stroke="#f2f2f2" stroke-width="1.500"/></g></svg>
<svg class="a" style="left:355.0px;top:103.0px;overflow:visible;" width="30" height="30" viewBox="0 0 30 30"><g transform="translate(1,0)"><path d="M18 1.500l5.500 3L11 26 5 29l.5-6.500z" fill="#e4e4e0" stroke="#d6d6d2" stroke-width="1"/><path d="M5.500 22.500L11 26" stroke="#d6d6d2" stroke-width="1"/><path d="M16.500 4l5.500 3" stroke="#f2f2f2" stroke-width="1.500"/></g></svg>
<svg class="a" style="left:393.0px;top:103.0px;overflow:visible;" width="30" height="30" viewBox="0 0 30 30"><rect x="3" y="1" width="25.500" height="25" rx="3" fill="#dadbdc" stroke="#d0d1d2" stroke-width="1"/><rect x="7.500" y="2.500" width="17" height="10" fill="#ececec"/><path d="M9.500 5.500h13M9.500 8h13M9.500 10.500h13" stroke="#dcdcdc" stroke-width="1.200"/><rect x="9" y="17" width="14" height="9" fill="#e9e9e9"/><rect x="11" y="19" width="3.600" height="5.500" fill="#d3d4d6"/><g transform="translate(10,11) scale(.62)"><g transform="translate(0,0)"><path d="M18 1.500l5.500 3L11 26 5 29l.5-6.500z" fill="#ddd6d2" stroke="#d2ccc8" stroke-width="1"/><path d="M5.500 22.500L11 26" stroke="#d2ccc8" stroke-width="1"/><path d="M16.500 4l5.500 3" stroke="#f2f2f2" stroke-width="1.500"/></g></g></svg>
<svg class="a" style="left:434.0px;top:103.0px;overflow:visible;" width="30" height="30" viewBox="0 0 30 30"><circle cx="5.500" cy="16" r="3.500" fill="#dededc" stroke="#d2d2d0"/><circle cx="15" cy="5" r="3.500" fill="#dededc" stroke="#d2d2d0"/><circle cx="26" cy="8" r="3.500" fill="#dededc" stroke="#d2d2d0"/><rect x="17" y="17" width="13" height="13" rx="2.4" fill="#cbc9c0"/><path d="M23.5 23.5L23.5 28.4M23.5 23.5L19.2 26.0M23.5 23.5L19.2 21.0M23.5 23.5L23.5 18.6M23.5 23.5L27.8 21.0M23.5 23.5L27.8 26.0" stroke="#fff" stroke-width="1.9" stroke-linecap="round"/><circle cx="23.5" cy="23.5" r="1.2" fill="#cbc9c0"/></svg>
<svg class="a" style="left:475.0px;top:103.0px;overflow:visible;" width="30" height="30" viewBox="0 0 30 30"><rect x="5" y="4.500" width="6" height="6" fill="none" stroke="#d6cccc" stroke-width="1"/><path d="M5 4.500l6 6M11 4.500l-6 6" stroke="#d6cccc" stroke-width=".8"/><path d="M11 7.500h13M7.500 10.500L2 27" stroke="#d4d4d4" stroke-width="1"/><path d="M13 18l12 10M25 14L11 28" stroke="#dcdad2" stroke-width="3.600"/><path d="M12 15c2-3 6-3 8 0l-2.500 3.500-4 .5z" fill="#dad8d2"/></svg>
<svg class="a" style="left:527.0px;top:103.0px;overflow:visible;" width="30" height="30" viewBox="0 0 30 30"><rect x="2" y="3" width="25" height="6.500" fill="#e3e2dc" stroke="#d9d8d2"/><rect x="2" y="12" width="25" height="6.500" fill="#e3e2dc" stroke="#d9d8d2"/><rect x="2" y="21" width="25" height="6.500" fill="#e3e2dc" stroke="#d9d8d2"/><g transform="translate(4,0)"><g transform="translate(0,0)"><path d="M18 1.500l5.500 3L11 26 5 29l.5-6.500z" fill="#e6e6e4" stroke="#cfcfcd" stroke-width="1"/><path d="M5.500 22.500L11 26" stroke="#cfcfcd" stroke-width="1"/><path d="M16.500 4l5.500 3" stroke="#f2f2f2" stroke-width="1.500"/></g></g></svg>
<svg class="a" style="left:565.0px;top:103.0px;overflow:visible;" width="30" height="30" viewBox="0 0 30 30"><rect x="3" y="3.500" width="18" height="22" fill="#e2dfda" stroke="#d8d4ce"/><path d="M5 7h21" stroke="#d6c6c6" stroke-width="2.200"/><rect x="11" y="3.500" width="8" height="3" fill="none" stroke="#d6c6c6" stroke-width="1.300"/><path d="M6.500 9.500h18l-1.800 18H8.300z" fill="#e4dcdc" stroke="#d2c0c0" stroke-width="1.600"/><path d="M12 12v13M15.500 12v13M19 12v13" stroke="#d2c0c0" stroke-width="1.500"/></svg>
<svg class="a" style="left:605.0px;top:103.0px;overflow:visible;" width="30" height="30" viewBox="0 0 30 30"><path d="M2 8l19 10M2 13.500L23 6" stroke="#d6d6d6" stroke-width="1.600"/><ellipse cx="25.500" cy="7" rx="3.500" ry="2.500" fill="none" stroke="#d9c9c9" stroke-width="1.500" transform="rotate(-25 25.500 7)"/><ellipse cx="24.500" cy="21" rx="3.500" ry="2.500" fill="none" stroke="#d9c9c9" stroke-width="1.500" transform="rotate(35 24.500 21)"/></svg>
<svg class="a" style="left:643.0px;top:103.0px;overflow:visible;" width="30" height="30" viewBox="0 0 30 30"><path d="M11 2.5h10l4 4v15h-14z" fill="#f3f3f3" stroke="#dedede" stroke-width="1" stroke-linejoin="round"/><path d="M21 2.5v4h4" fill="none" stroke="#dedede" stroke-width="1" stroke-linejoin="round"/><path d="M4.5 8.5h10.5l4.5 4.5v15.0h-15z" fill="#f1f1f1" stroke="#d6d6d6" stroke-width="1.2" stroke-linejoin="round"/><path d="M15.0 8.5v4.5h4.5" fill="none" stroke="#d6d6d6" stroke-width="1.2" stroke-linejoin="round"/><path d="M7.500 16h9M7.500 19h9M7.500 22h9M7.500 25h6" stroke="#dadada" stroke-width="1.100"/></svg>
<svg class="a" style="left:683.0px;top:103.0px;overflow:visible;" width="30" height="30" viewBox="0 0 30 30"><rect x="5" y="3" width="20" height="25" rx="1" fill="#e6e6e6" stroke="#d8d8d8" stroke-width="1.200"/><rect x="10" y="1" width="10" height="5" rx="1" fill="#dedede"/><path d="M8.5 7h10l4 4v14.5h-14z" fill="#f2f2f2" stroke="#d6d6d6" stroke-width="1" stroke-linejoin="round"/><path d="M18.5 7v4h4" fill="none" stroke="#d6d6d6" stroke-width="1" stroke-linejoin="round"/><path d="M11 14h8M11 17h8M11 20h8M11 23h5" stroke="#dadada" stroke-width="1.100"/></svg>
<svg class="a" style="left:722.0px;top:103.0px;overflow:visible;" width="30" height="30" viewBox="0 0 30 30"><path d="M2.500 11.500L12 3.500v5c9 0 14 4 14 10s-5 8-9 8c3-1.500 4-3.500 3.500-6-.5-2.500-3-4.500-8.500-4.500v5z" fill="#e0dcd8" stroke="#d8d4d0" stroke-width="1"/></svg>
<svg class="a" style="left:761.0px;top:103.0px;overflow:visible;" width="30" height="30" viewBox="0 0 30 30"><path d="M27.500 11.500L18 3.500v5c-9 0-14 4-14 10s5 8 9 8c-3-1.500-4-3.500-3.500-6 .5-2.500 3-4.500 8.500-4.500v5z" fill="#dfe1e0" stroke="#d5d8d7" stroke-width="1"/></svg>
<svg class="a" style="left:813.0px;top:103.0px;overflow:visible;" width="30" height="30" viewBox="0 0 30 30"><path d="M0 11.65l5.500-7.15h22.0v14.3h-22.0z" fill="#e6e5df" stroke="#dad9d1" stroke-width="1.3" stroke-linejoin="round"/><text x="16.0" y="15.200000000000001" font-size="12.5" font-weight="bold" text-anchor="middle" font-family="Liberation Sans, sans-serif" fill="#c4c4c0" textLength="19" lengthAdjust="spacingAndGlyphs">abc</text></svg>
<svg class="a" style="left:852.0px;top:103.0px;overflow:visible;" width="30" height="30" viewBox="0 0 30 30"><circle cx="11" cy="10" r="9.500" fill="#d9ddd6" stroke="#d2d2d0"/><path d="M11 10V0.500A9.500 9.500 0 0 1 19.500 14.500z" fill="#e2d6d4"/><path d="M11 10l8.500 4.500A9.500 9.500 0 0 1 3 15.500z" fill="#dcdcd2"/><rect x="12.500" y="20" width="5" height="9" fill="#dcdcd0"/><rect x="17.500" y="12.500" width="4.500" height="16.500" fill="#d6dcd6"/><rect x="22.500" y="22" width="5" height="7" fill="#e0d4d8"/></svg>
<svg class="a" style="left:899.0px;top:103.0px;overflow:visible;" width="30" height="30" viewBox="0 0 30 30"><defs><linearGradient id="lpg" x1="0" y1="0" x2="1" y2="1"><stop offset="0" stop-color="#e6f0fc"/><stop offset="1" stop-color="#9fc4f0"/></linearGradient></defs><path d="M-0.8 11.7l5.500-7.2h22.0v14.4h-22.0z" fill="url(#lpg)" stroke="#4a90e8" stroke-width="1.5" stroke-linejoin="round"/><text x="11.2" y="15.299999999999999" font-size="13" font-weight="bold" text-anchor="middle" font-family="Liberation Sans, sans-serif" fill="#2a3036" textLength="13" lengthAdjust="spacingAndGlyphs">ab</text><path d="M22.600 11l1 6" stroke="#8a8a8a" stroke-width="3.400" stroke-linecap="round"/><path d="M22.600 11l1 6" stroke="#f2f2f2" stroke-width="2.200" stroke-linecap="round"/><circle cx="24.100" cy="22.500" r="6.200" fill="#a3262a" stroke="#8a1f22" stroke-width=".8"/><circle cx="22.600" cy="20.300" r="2" fill="#c85a5e"/></svg>
<svg class="a" style="left:936.0px;top:103.0px;overflow:visible;" width="30" height="30" viewBox="0 0 30 30"><defs><linearGradient id="lrg" x1="0" y1="0" x2="1" y2="1"><stop offset="0" stop-color="#ffffff"/><stop offset="1" stop-color="#ffc4c4"/></linearGradient></defs><path d="M1.2 11.7l5.500-7.2h22.2v14.4h-22.2z" fill="url(#lrg)" stroke="#ff0a0a" stroke-width="2" stroke-linejoin="round"/><text x="16.2" y="15.299999999999999" font-size="13" font-weight="bold" text-anchor="middle" font-family="Liberation Sans, sans-serif" fill="#f01010" textLength="18.5" lengthAdjust="spacingAndGlyphs">abc</text></svg>
<svg class="a" style="left:983.0px;top:103.0px;overflow:visible;" width="30" height="30" viewBox="0 0 30 30"><path d="M0 11.65l5.500-7.15h22.0v14.3h-22.0z" fill="#e6e5df" stroke="#dad9d1" stroke-width="1.3" stroke-linejoin="round"/><text x="11.2" y="15.200000000000001" font-size="12.5" font-weight="bold" text-anchor="middle" font-family="Liberation Sans, sans-serif" fill="#c4c4c0" textLength="13" lengthAdjust="spacingAndGlyphs">ab</text><path d="M22.600 11l1 6" stroke="#efefef" stroke-width="3" stroke-linecap="round"/><circle cx="24.100" cy="22.500" r="6.200" fill="#d6cece"/></svg>
<svg class="a" style="left:1022.0px;top:103.0px;overflow:visible;" width="30" height="30" viewBox="0 0 30 30"><path d="M0 11.65l5.500-7.15h22.0v14.3h-22.0z" fill="#e6e5df" stroke="#dad9d1" stroke-width="1.3" stroke-linejoin="round"/><text x="16.0" y="15.200000000000001" font-size="12.5" font-weight="bold" text-anchor="middle" font-family="Liberation Sans, sans-serif" fill="#c4c4c0" textLength="19" lengthAdjust="spacingAndGlyphs">abc</text><path d="M10.500 23.500c4.500-6 13-6 17.500 0-4.500 5.500-13 5.500-17.500 0z" fill="#f4f4f4" stroke="#cfcfcf" stroke-width="1"/><circle cx="19.300" cy="23" r="3" fill="#cfcfcf"/></svg>
<svg class="a" style="left:1061.0px;top:103.0px;overflow:visible;" width="30" height="30" viewBox="0 0 30 30"><path d="M0 11.65l5.500-7.15h22.0v14.3h-22.0z" fill="#e6e5df" stroke="#dad9d1" stroke-width="1.3" stroke-linejoin="round"/><text x="16.0" y="15.200000000000001" font-size="12.5" font-weight="bold" text-anchor="middle" font-family="Liberation Sans, sans-serif" fill="#c4c4c0" textLength="19" lengthAdjust="spacingAndGlyphs">abc</text><rect x="17" y="16.500" width="13" height="13" rx="2" fill="#d3d6d9"/><path d="M19 23h4.500v-3.500l5 3.500-5 3.500v-3.500" fill="#f4f4f4" stroke="#f4f4f4" stroke-width="1.400"/></svg>
<svg class="a" style="left:1100.0px;top:103.0px;overflow:visible;" width="30" height="30" viewBox="0 0 30 30"><path d="M0 11.65l5.500-7.15h22.0v14.3h-22.0z" fill="#e6e5df" stroke="#dad9d1" stroke-width="1.3" stroke-linejoin="round"/><text x="16.0" y="15.200000000000001" font-size="12.5" font-weight="bold" text-anchor="middle" font-family="Liberation Sans, sans-serif" fill="#c4c4c0" textLength="19" lengthAdjust="spacingAndGlyphs">abc</text></svg>
<svg class="a" style="left:329.0px;top:115.0px;overflow:visible;" width="30" height="30" viewBox="0 0 30 30"><path d="M12 13.500h6l-3 3.500z" fill="#8a8a8a"/></svg>
<svg class="a" style="left:500.0px;top:104.0px;overflow:visible;" width="30" height="30" viewBox="0 0 30 30"><path d="M11 13h8l-4 4.500z" fill="#6a6a6a"/></svg>
<svg class="a" style="left:4px;top:143px;" width="3" height="35" viewBox="0 0 3 35"><path d="M2.6 0.2V2.8H0z" fill="#a3a3a3"/><path d="M2.6 4.2V6.8H0z" fill="#a3a3a3"/><path d="M2.6 8.2V10.8H0z" fill="#a3a3a3"/><path d="M2.6 12.2V14.8H0z" fill="#a3a3a3"/><path d="M2.6 16.2V18.8H0z" fill="#a3a3a3"/><path d="M2.6 20.2V22.8H0z" fill="#a3a3a3"/><path d="M2.6 24.2V26.8H0z" fill="#a3a3a3"/><path d="M2.6 28.2V30.8H0z" fill="#a3a3a3"/><path d="M2.6 32.2V34.8H0z" fill="#a3a3a3"/></svg>
<svg class="a" style="left:16.0px;top:145.0px;overflow:visible;" width="30" height="30" viewBox="0 0 30 30"><path d="M0.500 0l29 30.500H0.500z" fill="#e2ddd9" stroke="#d8d2ce" stroke-width="1"/><path d="M7 15l9 9.500H7z" fill="#f0f0f0" stroke="#d8d2ce"/><rect x="19" y="2" width="9.500" height="26" fill="#e6e2dd" stroke="#dad6d0" stroke-width=".8" opacity=".9"/><path d="M24 4h4M25 7h3M24 10h4M25 13h3M24 16h4M25 19h3M24 22h4" stroke="#d4d0ca" stroke-width=".7"/></svg>
<svg class="a" style="left:55.0px;top:145.0px;overflow:visible;" width="30" height="30" viewBox="0 0 30 30"><path d="M5 27c-2-12 4-21 20-21" stroke="#d4d4d4" stroke-width="1.300" fill="none" stroke-dasharray="2.500 2.500"/><rect x="3" y="25" width="4" height="4" fill="#e6e6e6" stroke="#d0d0d0"/><rect x="5.500" y="5" width="4" height="4" fill="#e6e6e6" stroke="#d0d0d0"/><rect x="23" y="4" width="4" height="4" fill="#e6e6e6" stroke="#d0d0d0"/></svg>
<svg class="a" style="left:109.0px;top:145.0px;overflow:visible;" width="30" height="30" viewBox="0 0 30 30"><circle cx="6" cy="13" r="4.500" fill="#dcdcda" stroke="#d2d2d0"/><circle cx="17" cy="5.500" r="4.500" fill="#dcdcda" stroke="#d2d2d0"/><rect x="16" y="16" width="13" height="13" rx="2.200" fill="#c9cccf"/><path transform="translate(16,15.5)" d="M2.500 6h4.500V3.500l4 3.500-4 3.500V8H2.500z" fill="#f2f2f2"/></svg>
<svg class="a" style="left:163.0px;top:145.0px;overflow:visible;" width="30" height="30" viewBox="0 0 30 30"><path transform="translate(-1.5,-0.5) scale(1.08)" d="M3 7c0-4 5-5.5 10-5 4 .5 6 1.5 10 .5 4-1 5 2 4.5 5-.5 3-3 4.5-7 4-3-.4-4 1-7 2-5 1.5-10.500-1-10.500-6.500z" fill="#dadbd9" stroke="#bcbdbb" stroke-width="1.2"/><rect x="16" y="16" width="13" height="13" rx="2.200" fill="#c9cccf"/><path d="M25.500 22.500a3.300 3.300 0 1 1-3.300-3.300" stroke="#f2f2f2" stroke-width="1.600" fill="none"/><path d="M21 17l3 2.200-3 2.200z" fill="#f2f2f2"/></svg>
<svg class="a" style="left:202.0px;top:145.0px;overflow:visible;" width="30" height="30" viewBox="0 0 30 30"><path transform="translate(-1.5,-0.5) scale(1.08)" d="M3 7c0-4 5-5.5 10-5 4 .5 6 1.5 10 .5 4-1 5 2 4.5 5-.5 3-3 4.5-7 4-3-.4-4 1-7 2-5 1.5-10.500-1-10.500-6.500z" fill="#dadbd9" stroke="#bcbdbb" stroke-width="1.2"/><rect x="16" y="16" width="13" height="13" rx="2.200" fill="#c9cccf"/><path d="M17.500 22.500l3-3v2h4v-2l3 3-3 3v-2h-4v2z" fill="#f2f2f2"/></svg>
<svg class="a" style="left:241.0px;top:145.0px;overflow:visible;" width="30" height="30" viewBox="0 0 30 30"><circle cx="10" cy="9" r="8.500" fill="#dedfdd" stroke="#d0d1cf"/><path d="M19.500 13l7.500 4.300v8.600l-7.500 4.300-7.500-4.300v-8.600z" fill="#e2e3e4" stroke="#d2d3d4"/><path d="M9 8l11 11M20 19v-5M20 19h-5" stroke="#cfcfcf" stroke-width="1.200" fill="none"/></svg>
<svg class="a" style="left:280.0px;top:145.0px;overflow:visible;" width="30" height="30" viewBox="0 0 30 30"><path transform="translate(-1.5,-0.5) scale(1.08)" d="M3 7c0-4 5-5.5 10-5 4 .5 6 1.5 10 .5 4-1 5 2 4.5 5-.5 3-3 4.5-7 4-3-.4-4 1-7 2-5 1.5-10.500-1-10.500-6.500z" fill="#dadbd9" stroke="#bcbdbb" stroke-width="1.2"/><ellipse cx="11" cy="7" rx="5.500" ry="3" fill="#ececec" stroke="#cdcecc" transform="rotate(-10 11 7)"/><rect x="16" y="16" width="13" height="13" rx="2.4" fill="#cbc9c0"/><path d="M22.5 22.5L22.5 27.4M22.5 22.5L18.2 25.0M22.5 22.5L18.2 20.0M22.5 22.5L22.5 17.6M22.5 22.5L26.8 20.0M22.5 22.5L26.8 25.0" stroke="#fff" stroke-width="1.9" stroke-linecap="round"/><circle cx="22.5" cy="22.5" r="1.2" fill="#cbc9c0"/></svg>
<svg class="a" style="left:319.0px;top:145.0px;overflow:visible;" width="30" height="30" viewBox="0 0 30 30"><path transform="translate(-1.5,-0.5) scale(1.08)" d="M3 7c0-4 5-5.5 10-5 4 .5 6 1.5 10 .5 4-1 5 2 4.5 5-.5 3-3 4.5-7 4-3-.4-4 1-7 2-5 1.5-10.500-1-10.500-6.500z" fill="#dadbd9" stroke="#bcbdbb" stroke-width="1.2"/><path d="M3 28c1-6 5-11 10-11 1 4-1 9-4 11z" fill="#dadbd9" stroke="#bcbdbb"/><rect x="16" y="16" width="13" height="13" rx="2.4" fill="#cbc9c0"/><path d="M22.5 22.5L22.5 27.4M22.5 22.5L18.2 25.0M22.5 22.5L18.2 20.0M22.5 22.5L22.5 17.6M22.5 22.5L26.8 20.0M22.5 22.5L26.8 25.0" stroke="#fff" stroke-width="1.9" stroke-linecap="round"/><circle cx="22.5" cy="22.5" r="1.2" fill="#cbc9c0"/></svg>
<svg class="a" style="left:358.0px;top:145.0px;overflow:visible;" width="30" height="30" viewBox="0 0 30 30"><path transform="translate(-1.5,-0.5) scale(1.08)" d="M3 7c0-4 5-5.5 10-5 4 .5 6 1.5 10 .5 4-1 5 2 4.5 5-.5 3-3 4.5-7 4-3-.4-4 1-7 2-5 1.5-10.500-1-10.500-6.500z" fill="#dadbd9" stroke="#bcbdbb" stroke-width="1.2"/><ellipse cx="11" cy="7" rx="5.500" ry="3" fill="#d6d7d5" stroke="#c5c6c4" transform="rotate(-10 11 7)"/><rect x="16" y="16" width="13" height="13" rx="2.4" fill="#cbc9c0"/><path d="M22.5 22.5L22.5 27.4M22.5 22.5L18.2 25.0M22.5 22.5L18.2 20.0M22.5 22.5L22.5 17.6M22.5 22.5L26.8 20.0M22.5 22.5L26.8 25.0" stroke="#fff" stroke-width="1.9" stroke-linecap="round"/><circle cx="22.5" cy="22.5" r="1.2" fill="#cbc9c0"/></svg>
<svg class="a" style="left:397.0px;top:145.0px;overflow:visible;" width="30" height="30" viewBox="0 0 30 30"><path transform="translate(-1.5,-0.5) scale(1.08)" d="M3 7c0-4 5-5.5 10-5 4 .5 6 1.5 10 .5 4-1 5 2 4.5 5-.5 3-3 4.5-7 4-3-.4-4 1-7 2-5 1.5-10.500-1-10.500-6.500z" fill="#dadbd9" stroke="#bcbdbb" stroke-width="1.2"/><ellipse cx="11" cy="7" rx="5.500" ry="3" fill="#f2f2f2" stroke="#c9cac8" transform="rotate(-10 11 7)"/><rect x="17" y="17" width="12" height="12" rx="2.2" fill="#dccccc"/><path d="M20 20l6 6M26 20l-6 6" stroke="#fff" stroke-width="2.2"/></svg>
<svg class="a" style="left:436.0px;top:145.0px;overflow:visible;" width="30" height="30" viewBox="0 0 30 30"><path transform="translate(-1.5,-0.5) scale(1.08)" d="M3 7c0-4 5-5.5 10-5 4 .5 6 1.5 10 .5 4-1 5 2 4.5 5-.5 3-3 4.5-7 4-3-.4-4 1-7 2-5 1.5-10.500-1-10.500-6.500z" fill="#dadbd9" stroke="#bcbdbb" stroke-width="1.2"/><path d="M3 28c1-6 5-11 10-11 1 4-1 9-4 11z" fill="#dadbd9" stroke="#bcbdbb"/><rect x="17" y="17" width="12" height="12" rx="2.2" fill="#dccccc"/><path d="M20 20l6 6M26 20l-6 6" stroke="#fff" stroke-width="2.2"/></svg>
<svg class="a" style="left:475.0px;top:145.0px;overflow:visible;" width="30" height="30" viewBox="0 0 30 30"><path d="M3 9c0-5 5-6.500 10-6 5 .5 7 1 11 0s5 3 4 6-4 4-7 4.500-4 3-4.500 7-1.500 6-4.500 5.500S4 21 4 16z" fill="#dadbd9" stroke="#bcbdbb" stroke-width="1.200"/><path d="M5 13c3-1 5 1 8 0s6-2 10-1.500" stroke="#c6c6c4" stroke-width="1" fill="none" stroke-dasharray="2 2"/></svg>
<svg class="a" style="left:514.0px;top:145.0px;overflow:visible;" width="30" height="30" viewBox="0 0 30 30"><path d="M4 24c-2-5 2-9 7-12s6-8 12-9 6 5 4 9-6 5-9 9-11 8-14 3z" fill="#dcdcd6" stroke="#cfcfc9" stroke-width="1.200"/><path d="M7.500 22.500c-1-3 2-6 5.500-8s5-7 9-7.500 3 3 2 5.500-5 4-7 7-8 6-9.500 3z" fill="#d8d9d7" stroke="#cfcfc9" stroke-width="1"/></svg>
<svg class="a" style="left:553.0px;top:145.0px;overflow:visible;" width="30" height="30" viewBox="0 0 30 30"><path d="M5 3.500l7 19L20 7h7" stroke="#d6d6d6" stroke-width="1.300" fill="none"/><rect x="3" y="1.500" width="4" height="4" fill="#eee" stroke="#d2d2d2"/><rect x="18" y="5" width="4" height="4" fill="#eee" stroke="#d2d2d2"/><rect x="25" y="5" width="4" height="4" fill="#eee" stroke="#d2d2d2"/><rect x="10" y="21" width="4" height="4" fill="#eee" stroke="#d2d2d2"/><rect x="16" y="16" width="13" height="13" rx="3" fill="#cfd3d6"/><path d="M19 22a3.500 3.500 0 0 1 6-2M26 23a3.500 3.500 0 0 1-6 2" stroke="#f2f2f2" stroke-width="1.500" fill="none"/></svg>
<svg class="a" style="left:592.0px;top:145.0px;overflow:visible;" width="30" height="30" viewBox="0 0 30 30"><path d="M9 1v20M2 16h26" stroke="#d8d8d8" stroke-width="1.500"/><rect x="17" y="2" width="9" height="8" rx="1.500" fill="#dcdad2"/><circle cx="9" cy="16" r="2.300" fill="#f4f4f4" stroke="#cfcfcf"/><circle cx="16" cy="16" r="2.300" fill="#f4f4f4" stroke="#cfcfcf"/><path d="M16 18v8M9 22v5" stroke="#d4d4d4" stroke-width="1.300"/><rect x="1" y="24" width="5" height="5" fill="#e6dcdc"/><rect x="14.500" y="25" width="3" height="4" fill="#d8d8d8"/></svg>
<svg class="a" style="left:631.0px;top:145.0px;overflow:visible;" width="30" height="30" viewBox="0 0 30 30"><path d="M14 3c-4-2-11-1-11 5s4 9 8 9 3-3 3-6zM17 3c4-2 11-1 11 5s-4 9-8 9-3-3-3-6z" fill="#dadbd9" stroke="#bcbdbb" stroke-width="1.100"/><path d="M13 3l5 17M18 3l-5 17" stroke="#d9d9d9" stroke-width="1.600"/><ellipse cx="11" cy="24" rx="2.600" ry="4" fill="none" stroke="#d9c9c9" stroke-width="1.500" transform="rotate(25 11 24)"/><ellipse cx="20" cy="24" rx="2.600" ry="4" fill="none" stroke="#d9c9c9" stroke-width="1.500" transform="rotate(-25 20 24)"/></svg>
<svg class="a" style="left:670.0px;top:145.0px;overflow:visible;" width="30" height="30" viewBox="0 0 30 30"><path d="M14 3c-4-2-11-1-11 5s4 9 8 9 3-3 3-6zM17 3c4-2 11-1 11 5s-4 9-8 9-3-3-3-6z" fill="#dadbd9" stroke="#bcbdbb" stroke-width="1.100"/><path d="M13 3l5 17M18 3l-5 17" stroke="#d9d9d9" stroke-width="1.600"/><ellipse cx="11" cy="24" rx="2.600" ry="4" fill="none" stroke="#d9c9c9" stroke-width="1.500" transform="rotate(25 11 24)"/><ellipse cx="20" cy="24" rx="2.600" ry="4" fill="none" stroke="#d9c9c9" stroke-width="1.500" transform="rotate(-25 20 24)"/></svg>
<svg class="a" style="left:709.0px;top:145.0px;overflow:visible;" width="30" height="30" viewBox="0 0 30 30"><path d="M14 4c-4-3-12-1-12 5s5 8 9 8 3-3 3-6zM16 4c4-3 12-1 12 5s-5 8-9 8-3-3-3-6z" fill="#dadbd9" stroke="#bcbdbb" stroke-width="1.100"/><path d="M12 6h7M12 9h7M12 12h7" stroke="#bfbfbf" stroke-width="1"/><path d="M10 15c-2 5 2 9 7 12" stroke="#cdcdcd" stroke-width="1.300" fill="none"/></svg>
<svg class="a" style="left:748.0px;top:145.0px;overflow:visible;" width="30" height="30" viewBox="0 0 30 30"><path d="M3 4h24M3 9h24M3 14h24M3 19h24M3 24h24M3 28h24" stroke="#dedede" stroke-width="1.200"/><path d="M15 3v25" stroke="#d9d9d9" stroke-width="1"/><path d="M11 7c2-3 6-3 8 0M11 16c2-3 6-3 8 0M11 25c2-3 6-3 8 0" stroke="#c9c9c9" stroke-width="1.100" fill="none"/></svg>
<svg class="a" style="left:787.0px;top:145.0px;overflow:visible;" width="30" height="30" viewBox="0 0 30 30"><path d="M14 2l11 6.500-11 6.500z" fill="#dadbd9" stroke="#bcbdbb"/><path d="M7 28l7-11 7 11z" fill="#f2f2f2" stroke="#d6d6d6"/><path d="M8 24c-4-5-3-14 4-18" stroke="#cdcdcd" stroke-width="1.200" fill="none"/><path d="M9 4.500l4.500.5-2 4" stroke="#cdcdcd" stroke-width="1.200" fill="none"/></svg>
<svg class="a" style="left:82.0px;top:145.0px;overflow:visible;" width="30" height="30" viewBox="0 0 30 30"><path d="M11 13h8l-4 4.500z" fill="#6a6a6a"/></svg>
<svg class="a" style="left:136.0px;top:145.0px;overflow:visible;" width="30" height="30" viewBox="0 0 30 30"><path d="M11 13h8l-4 4.500z" fill="#6a6a6a"/></svg>
<svg class="a" style="left:815.0px;top:145.0px;overflow:visible;" width="30" height="30" viewBox="0 0 30 30"><path d="M11 13h8l-4 4.500z" fill="#6a6a6a"/></svg>
<svg class="a" style="left:4px;top:185px;" width="3" height="35" viewBox="0 0 3 35"><path d="M2.6 0.2V2.8H0z" fill="#a3a3a3"/><path d="M2.6 4.2V6.8H0z" fill="#a3a3a3"/><path d="M2.6 8.2V10.8H0z" fill="#a3a3a3"/><path d="M2.6 12.2V14.8H0z" fill="#a3a3a3"/><path d="M2.6 16.2V18.8H0z" fill="#a3a3a3"/><path d="M2.6 20.2V22.8H0z" fill="#a3a3a3"/><path d="M2.6 24.2V26.8H0z" fill="#a3a3a3"/><path d="M2.6 28.2V30.8H0z" fill="#a3a3a3"/><path d="M2.6 32.2V34.8H0z" fill="#a3a3a3"/></svg>
<div class="a" style="left:13px;top:181px;width:1px;height:42px;background:#b9b9b9;"></div>
<svg class="a" style="left:18px;top:185px;" width="3" height="35" viewBox="0 0 3 35"><path d="M2.6 0.2V2.8H0z" fill="#a3a3a3"/><path d="M2.6 4.2V6.8H0z" fill="#a3a3a3"/><path d="M2.6 8.2V10.8H0z" fill="#a3a3a3"/><path d="M2.6 12.2V14.8H0z" fill="#a3a3a3"/><path d="M2.6 16.2V18.8H0z" fill="#a3a3a3"/><path d="M2.6 20.2V22.8H0z" fill="#a3a3a3"/><path d="M2.6 24.2V26.8H0z" fill="#a3a3a3"/><path d="M2.6 28.2V30.8H0z" fill="#a3a3a3"/><path d="M2.6 32.2V34.8H0z" fill="#a3a3a3"/></svg>
<div class="a" style="left:408px;top:181px;width:1px;height:42px;background:#b9b9b9;"></div>
<svg class="a" style="left:414px;top:185px;" width="3" height="35" viewBox="0 0 3 35"><path d="M2.6 0.2V2.8H0z" fill="#a3a3a3"/><path d="M2.6 4.2V6.8H0z" fill="#a3a3a3"/><path d="M2.6 8.2V10.8H0z" fill="#a3a3a3"/><path d="M2.6 12.2V14.8H0z" fill="#a3a3a3"/><path d="M2.6 16.2V18.8H0z" fill="#a3a3a3"/><path d="M2.6 20.2V22.8H0z" fill="#a3a3a3"/><path d="M2.6 24.2V26.8H0z" fill="#a3a3a3"/><path d="M2.6 28.2V30.8H0z" fill="#a3a3a3"/><path d="M2.6 32.2V34.8H0z" fill="#a3a3a3"/></svg>
<div class="a" style="left:623px;top:181px;width:1px;height:42px;background:#b9b9b9;"></div>
<svg class="a" style="left:628px;top:185px;" width="3" height="35" viewBox="0 0 3 35"><path d="M2.6 0.2V2.8H0z" fill="#a3a3a3"/><path d="M2.6 4.2V6.8H0z" fill="#a3a3a3"/><path d="M2.6 8.2V10.8H0z" fill="#a3a3a3"/><path d="M2.6 12.2V14.8H0z" fill="#a3a3a3"/><path d="M2.6 16.2V18.8H0z" fill="#a3a3a3"/><path d="M2.6 20.2V22.8H0z" fill="#a3a3a3"/><path d="M2.6 24.2V26.8H0z" fill="#a3a3a3"/><path d="M2.6 28.2V30.8H0z" fill="#a3a3a3"/><path d="M2.6 32.2V34.8H0z" fill="#a3a3a3"/></svg>
<div class="a" style="left:823px;top:181px;width:1px;height:42px;background:#b9b9b9;"></div>
<svg class="a" style="left:829px;top:185px;" width="3" height="35" viewBox="0 0 3 35"><path d="M2.6 0.2V2.8H0z" fill="#a3a3a3"/><path d="M2.6 4.2V6.8H0z" fill="#a3a3a3"/><path d="M2.6 8.2V10.8H0z" fill="#a3a3a3"/><path d="M2.6 12.2V14.8H0z" fill="#a3a3a3"/><path d="M2.6 16.2V18.8H0z" fill="#a3a3a3"/><path d="M2.6 20.2V22.8H0z" fill="#a3a3a3"/><path d="M2.6 24.2V26.8H0z" fill="#a3a3a3"/><path d="M2.6 28.2V30.8H0z" fill="#a3a3a3"/><path d="M2.6 32.2V34.8H0z" fill="#a3a3a3"/></svg>
<div class="a" style="left:1088px;top:186px;width:1px;height:32px;background:#cfcfcf;"></div>
<svg class="a" style="left:30.0px;top:187.0px;overflow:visible;" width="30" height="30" viewBox="0 0 30 30"><circle cx="15" cy="15" r="7.600" fill="none" stroke="#000" stroke-width="4.600"/></svg>
<svg class="a" style="left:85.0px;top:187.0px;overflow:visible;" width="30" height="30" viewBox="0 0 30 30"><path d="M6 25c0-10 6-17 16-17.500" stroke="#2b64a4" stroke-width="1.800" fill="none"/><circle cx="6" cy="25" r="2.5" fill="#2b72b8" stroke="#1d4f86" stroke-width="0.8"/><circle cx="22.5" cy="7.5" r="2.5" fill="#2b72b8" stroke="#1d4f86" stroke-width="0.8"/><text x="18.500" y="20.600" font-size="9" font-weight="bold" text-anchor="middle" font-family="Liberation Sans, sans-serif" fill="#111">XY</text></svg>
<svg class="a" style="left:122.0px;top:187.0px;overflow:visible;" width="30" height="30" viewBox="0 0 30 30"><path d="M5 25c2-9 8-15 18-18" stroke="#2b64a4" stroke-width="1.800" fill="none"/><circle cx="5" cy="25" r="2.6" fill="#2b72b8" stroke="#1d4f86" stroke-width="0.8"/><circle cx="23" cy="7" r="2.6" fill="#2b72b8" stroke="#1d4f86" stroke-width="0.8"/><circle cx="9" cy="17" r="2" fill="#ee2a2a" stroke="#b81515" stroke-width="0.8"/><circle cx="15" cy="11" r="2" fill="#ee2a2a" stroke="#b81515" stroke-width="0.8"/></svg>
<svg class="a" style="left:162.0px;top:187.0px;overflow:visible;" width="30" height="30" viewBox="0 0 30 30"><path d="M7.500 23v-6h8M18 14h8V9.500" stroke="#2b64a4" stroke-width="1.800" fill="none"/><path d="M14 18.500l3.500-6.500M17 18.500l3.500-6.500" stroke="#e62222" stroke-width="1.600"/><path d="M3 17h5" stroke="#2b64a4" stroke-width="1.800"/><circle cx="8" cy="24.5" r="2.5" fill="#2b72b8" stroke="#1d4f86" stroke-width="0.8"/><circle cx="24.5" cy="7.5" r="2.5" fill="#2b72b8" stroke="#1d4f86" stroke-width="0.8"/></svg>
<svg class="a" style="left:201.0px;top:187.0px;overflow:visible;" width="30" height="30" viewBox="0 0 30 30"><path d="M5 10.500c6-2 14-2 20 0M5 8.500v4M25 8.500v4" stroke="#2f5688" stroke-width="1.200" fill="none"/><path d="M4 16.500c7-2.500 15-2.500 22 0v7.500c-7-2.500-15-2.500-22 0z" fill="#d4d4d4" stroke="#8e8e8e" stroke-width="1"/><path d="M7 16v2.500M10 15.200v4M13 14.800v2.500M16 14.800v4M19 15v2.500M22 15.800v4" stroke="#8e8e8e" stroke-width=".8"/></svg>
<svg class="a" style="left:240.0px;top:187.0px;overflow:visible;" width="30" height="30" viewBox="0 0 30 30"><text x="15" y="14" font-size="11.500" font-weight="bold" text-anchor="middle" font-family="Liberation Sans, sans-serif" fill="#111" textLength="19" lengthAdjust="spacingAndGlyphs">123</text><path d="M7 20.500h16" stroke="#2b64a4" stroke-width="2"/><circle cx="6.5" cy="20.5" r="2.5" fill="#2b72b8" stroke="#1d4f86" stroke-width="0.8"/><circle cx="23.5" cy="20.5" r="2.5" fill="#2b72b8" stroke="#1d4f86" stroke-width="0.8"/></svg>
<svg class="a" style="left:279.0px;top:187.0px;overflow:visible;" width="30" height="30" viewBox="0 0 30 30"><path d="M3 10c0-5 5-6 10-5.500 4 .5 6-.5 9-.5s5 3 4 6.500-4 5-8 5-5 1-8 1S3 14 3 10z" fill="#2b72b8" stroke="#0f2f52" stroke-width="1.100"/><path d="M12 18c1.500-2 5-2 7 0s5 3.500 6 6-1.500 4.500-4 3.500-3-3.500-5.500-4.500-5-2.500-3.500-5z" fill="#ee2a2a" stroke="#3a0a0a" stroke-width="1.100"/></svg>
<svg class="a" style="left:333.0px;top:187.0px;overflow:visible;" width="30" height="30" viewBox="0 0 30 30"><text x="2" y="11" font-size="9.500" font-weight="bold" font-family="Liberation Sans, sans-serif" fill="#d6d6d6">Az</text><text x="2" y="19" font-size="9.500" font-weight="bold" font-family="Liberation Sans, sans-serif" fill="#d6d6d6">d</text><path d="M6 25L19 9" stroke="#d4d4d4" stroke-width="1.200"/><circle cx="19" cy="8.500" r="2.600" fill="#dcdcda"/><circle cx="6" cy="25" r="2.600" fill="#e8e8e6" stroke="#d4d4d4"/><rect x="15" y="17" width="11.5" height="11.5" rx="2.4" fill="#cbc9c0"/><path d="M20.8 22.8L20.8 27.1M20.8 22.8L17.0 24.9M20.8 22.8L17.0 20.6M20.8 22.8L20.8 18.4M20.8 22.8L24.5 20.6M20.8 22.8L24.5 24.9" stroke="#fff" stroke-width="1.9" stroke-linecap="round"/><circle cx="20.75" cy="22.75" r="1.2" fill="#cbc9c0"/></svg>
<svg class="a" style="left:373.0px;top:187.0px;overflow:visible;" width="30" height="30" viewBox="0 0 30 30"><path d="M5 10h14L6 25" stroke="#d4d4d4" stroke-width="1.200" fill="none"/><circle cx="5" cy="10" r="2.600" fill="#dcdcda"/><circle cx="19" cy="9" r="2.600" fill="#dcdcda"/><circle cx="6" cy="25" r="2.600" fill="#e8e8e6" stroke="#d4d4d4"/><rect x="15" y="17" width="11.5" height="11.5" rx="2.4" fill="#cbc9c0"/><path d="M20.8 22.8L20.8 27.1M20.8 22.8L17.0 24.9M20.8 22.8L17.0 20.6M20.8 22.8L20.8 18.4M20.8 22.8L24.5 20.6M20.8 22.8L24.5 24.9" stroke="#fff" stroke-width="1.9" stroke-linecap="round"/><circle cx="20.75" cy="22.75" r="1.2" fill="#cbc9c0"/></svg>
<svg class="a" style="left:425.0px;top:187.0px;overflow:visible;" width="30" height="30" viewBox="0 0 30 30"><rect x="2" y="2" width="27" height="25" fill="none" stroke="#c9c9c9" stroke-width="1.300" stroke-dasharray="2.500 2.500"/><rect x="4" y="4" width="16" height="16" fill="#e2e0d8" stroke="#d6d4cc"/><path transform="translate(13,11) scale(1.05)" d="M0 0v15l3.500-3.200 2.600 5.700 2.700-1.200-2.600-5.600h4.800z" fill="#fff" stroke="#bdbdbd" stroke-width="1.200" stroke-linejoin="round"/></svg>
<svg class="a" style="left:479.0px;top:187.0px;overflow:visible;" width="30" height="30" viewBox="0 0 30 30"><text x="1" y="17" font-size="24" font-family="DejaVu Serif, Liberation Serif, serif" fill="#c6c6c6">ε</text><rect x="10" y="11" width="16" height="16" fill="#e2e0d8" stroke="#d6d4cc"/></svg>
<svg class="a" style="left:533.0px;top:187.0px;overflow:visible;" width="30" height="30" viewBox="0 0 30 30"><rect x="2" y="3" width="16" height="16" fill="#fde74c" stroke="#c9a900" stroke-width="1.400"/><rect x="7" y="8" width="16" height="16" fill="#fde74c" stroke="#c9a900" stroke-width="1.400"/><rect x="15.500" y="16" width="13" height="13" rx="2" fill="#e02020" stroke="#b01010" stroke-width=".6"/><circle cx="22" cy="22.500" r="4" fill="#fff"/><path d="M19.500 25l5-5" stroke="#e02020" stroke-width="1.800"/></svg>
<svg class="a" style="left:587.0px;top:187.0px;overflow:visible;" width="30" height="30" viewBox="0 0 30 30"><rect x="2" y="3" width="16" height="16" fill="#fde74c" stroke="#c9a900" stroke-width="1.400"/><path d="M23.500 29c-2-4-4-6-4-8.500a4 4 0 0 1 8 0c0 2.500-2 4.500-4 8.500z" fill="#6d93b5" stroke="#456d92" stroke-width="1"/><circle cx="23.500" cy="20.500" r="1.600" fill="#f0f0f0"/></svg>
<svg class="a" style="left:640.0px;top:187.0px;overflow:visible;" width="30" height="30" viewBox="0 0 30 30"><rect x="4" y="6" width="20" height="18" fill="#f1f1f1" stroke="#d4d4d4"/><path d="M4 6l11 9M15 6L4 15M4 15h20M4 20h20M11 15v9M15 6v9" stroke="#d4d4d4" stroke-width="1"/><g transform="translate(6,4) scale(.7)"><g transform="translate(0,0)"><path d="M18 1.500l5.500 3L11 26 5 29l.5-6.500z" fill="#e6e0dc" stroke="#cfc9c5" stroke-width="1"/><path d="M5.500 22.500L11 26" stroke="#cfc9c5" stroke-width="1"/><path d="M16.500 4l5.500 3" stroke="#f2f2f2" stroke-width="1.500"/></g></g></svg>
<svg class="a" style="left:679.0px;top:187.0px;overflow:visible;" width="30" height="30" viewBox="0 0 30 30"><rect x="3" y="4" width="20" height="20" fill="#ebe9e3" stroke="#d4d4d4"/><path d="M3 4l20 10M23 4L3 14M3 14h20M3 19h20M10 14v10M16 14v10" stroke="#d4d4d4" stroke-width="1"/><path transform="translate(13,9) scale(1.0)" d="M0 0v15l3.500-3.200 2.600 5.700 2.700-1.200-2.600-5.600h4.800z" fill="#fff" stroke="#c2c2c2" stroke-width="1.200" stroke-linejoin="round"/></svg>
<svg class="a" style="left:733.0px;top:187.0px;overflow:visible;" width="30" height="30" viewBox="0 0 30 30"><rect x="3" y="5" width="6" height="6" fill="none" stroke="#cfcfcf"/><path d="M3 5l6 6M9 5l-6 6" stroke="#cfcfcf"/><rect x="3" y="17" width="6" height="6" fill="none" stroke="#cfcfcf"/><path d="M3 17l6 6M9 17l-6 6" stroke="#cfcfcf"/><path d="M17 3l5 5-5 5-5-5z" fill="none" stroke="#cfcfcf"/><path d="M12 8h10M17 3v10" stroke="#cfcfcf" stroke-width=".8"/><text x="12" y="26" font-size="18" font-family="DejaVu Serif, Liberation Serif, serif" fill="#c6c6c6">ε</text></svg>
<svg class="a" style="left:772.0px;top:187.0px;overflow:visible;" width="30" height="30" viewBox="0 0 30 30"><rect x="5" y="6" width="20" height="19" fill="#f0f0ec" stroke="#d6d6d2"/><path d="M5 6l7 13L20 6M5 25l7-6 13 6M12 19l13-13" stroke="#d6d6d2" stroke-width="1" fill="none"/><rect x="3.500" y="4.500" width="3" height="3" fill="#f6f6f0" stroke="#d8d4c4" transform="rotate(45 5 6)"/><rect x="18.500" y="4.500" width="3" height="3" fill="#f6f6f0" stroke="#d8d4c4" transform="rotate(45 20 6)"/><rect x="23.500" y="4.500" width="3" height="3" fill="#f6f6f0" stroke="#d8d4c4" transform="rotate(45 25 6)"/></svg>
<svg class="a" style="left:841.0px;top:187.0px;overflow:visible;" width="30" height="30" viewBox="0 0 30 30"><text x="1.500" y="24" font-size="21" font-weight="bold" font-family="Liberation Sans, sans-serif" fill="#4a7fc0" stroke="#2c5a96" stroke-width=".7">A</text><path d="M3 6h12c.5 6 2 9 9 10.500" stroke="#2f5f9a" stroke-width="1.100" fill="none"/><circle cx="3" cy="6" r="1.5" fill="#fff" stroke="#2f5f9a" stroke-width="0.8"/><circle cx="15" cy="6" r="1.5" fill="#fff" stroke="#2f5f9a" stroke-width="0.8"/><circle cx="18.5" cy="13.5" r="1.5" fill="#fff" stroke="#2f5f9a" stroke-width="0.8"/><circle cx="25" cy="16.5" r="1.5" fill="#fff" stroke="#2f5f9a" stroke-width="0.8"/><path d="M23.500 3l1.200 2.500 2.800.3-2.100 1.900.6 2.700-2.500-1.400-2.500 1.400.6-2.700-2.100-1.900 2.800-.3z" fill="#5b8cc4" stroke="#2f5f9a" stroke-width=".7"/><rect x="18" y="19" width="11" height="11" rx="2.4" fill="#c8a415"/><path d="M23.5 24.5L23.5 28.5M23.5 24.5L20.1 26.5M23.5 24.5L20.1 22.5M23.5 24.5L23.5 20.5M23.5 24.5L26.9 22.5M23.5 24.5L26.9 26.5" stroke="#fff" stroke-width="1.700" stroke-linecap="round"/></svg>
<svg class="a" style="left:892.0px;top:187.0px;overflow:visible;" width="30" height="30" viewBox="0 0 30 30"><rect x="2.500" y="4" width="22" height="20" fill="none" stroke="#555" stroke-width="1.100" stroke-dasharray="1.500 2.500"/><rect x="0.800" y="2.300" width="4" height="4" fill="#f4f4f4" stroke="#555" stroke-width=".9"/><rect x="22.500" y="2.300" width="4" height="4" fill="#f4f4f4" stroke="#555" stroke-width=".9"/><rect x="0.800" y="22" width="4" height="4" fill="#f4f4f4" stroke="#555" stroke-width=".9"/><rect x="22.500" y="22" width="4" height="4" fill="#f4f4f4" stroke="#555" stroke-width=".9"/><path transform="translate(7.5,1) scale(1.62)" d="M0 0v15l3.500-3.200 2.600 5.700 2.700-1.200-2.600-5.600h4.800z" fill="#fff" stroke="#1a1a1a" stroke-width="1.200" stroke-linejoin="round"/></svg>
<svg class="a" style="left:933.0px;top:187.0px;overflow:visible;" width="30" height="30" viewBox="0 0 30 30"><path d="M4.500 3l20.200 0-11.200 23.400-10.500-6.500z" fill="none" stroke="#111" stroke-width="1.300"/><circle cx="4.5" cy="3" r="2.900" fill="#2a7bf0"/><circle cx="24.7" cy="3" r="2.900" fill="#2a7bf0"/><circle cx="3" cy="19.9" r="2.900" fill="#2a7bf0"/><circle cx="13.5" cy="26.4" r="2.900" fill="#2a7bf0"/><rect x="19.9" y="19.9" width="11" height="11" rx="2.2" fill="#5a9a62"/><path d="M25.4 22.099999999999998V28.7M22.099999999999998 25.4H28.7" stroke="#fff" stroke-width="2.4"/></svg>
<svg class="a" style="left:972.0px;top:187.0px;overflow:visible;" width="30" height="30" viewBox="0 0 30 30"><path d="M26 4L7 3 3.400 15.100l7.600 11.300" fill="none" stroke="#111" stroke-width="1.300"/><circle cx="26" cy="4" r="2.900" fill="#2a7bf0"/><circle cx="7" cy="3" r="2.900" fill="#2a7bf0"/><circle cx="3.4" cy="15.1" r="2.900" fill="#2a7bf0"/><circle cx="11" cy="26.4" r="2.900" fill="#2a7bf0"/><rect x="19.7" y="19.9" width="11" height="11" rx="2.2" fill="#5a9a62"/><path d="M25.2 22.099999999999998V28.7M21.9 25.4H28.5" stroke="#fff" stroke-width="2.4"/></svg>
<svg class="a" style="left:1012.0px;top:187.0px;overflow:visible;" width="30" height="30" viewBox="0 0 30 30"><path d="M14 2.500l3.700 8.500 9.300.8-7 6.200 2.100 9-8.100-4.800-8.100 4.800 2.100-9-7-6.200 9.300-.8z" fill="#fdeab0" stroke="#f0a860" stroke-width="1.200" stroke-linejoin="round"/><rect x="18.5" y="19.9" width="11" height="11" rx="2.2" fill="#5a9a62"/><path d="M24.0 22.099999999999998V28.7M20.7 25.4H27.3" stroke="#fff" stroke-width="2.4"/></svg>
<svg class="a" style="left:1052.0px;top:187.0px;overflow:visible;" width="30" height="30" viewBox="0 0 30 30"><text x="13.400" y="21.300" font-size="19" font-weight="bold" text-anchor="middle" font-family="Liberation Serif, serif" fill="#3c3c3c" textLength="14" lengthAdjust="spacingAndGlyphs">T</text><rect x="1.500" y="22" width="4.200" height="4.200" fill="#ccc" stroke="#777" stroke-width=".8"/><rect x="17.6" y="19.9" width="11" height="11" rx="2.2" fill="#5a9a62"/><path d="M23.1 22.099999999999998V28.7M19.8 25.4H26.400000000000002" stroke="#fff" stroke-width="2.4"/></svg>
<svg class="a" style="left:1089.0px;top:187.0px;overflow:visible;" width="30" height="30" viewBox="0 0 30 30"><path d="M3 3h22v16h-9l-9 9 2-9H3z" fill="#e9eef3" stroke="#9aa3ad" stroke-width="1.200"/><text x="14" y="17" font-size="15" font-weight="bold" text-anchor="middle" font-family="Liberation Serif, serif" fill="#555">T</text></svg>
<svg class="a" style="left:57.0px;top:188.0px;overflow:visible;" width="30" height="30" viewBox="0 0 30 30"><path d="M11 13h8l-4 4.500z" fill="#000"/></svg>
<svg class="a" style="left:307.0px;top:188.0px;overflow:visible;" width="30" height="30" viewBox="0 0 30 30"><path d="M11 13h8l-4 4.500z" fill="#000"/></svg>
<svg class="a" style="left:561.0px;top:188.0px;overflow:visible;" width="30" height="30" viewBox="0 0 30 30"><path d="M11 13h8l-4 4.500z" fill="#000"/></svg>
<svg class="a" style="left:867.0px;top:188.0px;overflow:visible;" width="30" height="30" viewBox="0 0 30 30"><path d="M11 13h8l-4 4.500z" fill="#000"/></svg>
<svg class="a" style="left:452.0px;top:188.0px;overflow:visible;" width="30" height="30" viewBox="0 0 30 30"><path d="M11 13h8l-4 4.500z" fill="#6a6a6a"/></svg>
<svg class="a" style="left:506.0px;top:188.0px;overflow:visible;" width="30" height="30" viewBox="0 0 30 30"><path d="M11 13h8l-4 4.500z" fill="#6a6a6a"/></svg>
<svg class="a" style="left:706.0px;top:188.0px;overflow:visible;" width="30" height="30" viewBox="0 0 30 30"><path d="M11 13h8l-4 4.500z" fill="#6a6a6a"/></svg>
<svg class="a" style="left:799.0px;top:188.0px;overflow:visible;" width="30" height="30" viewBox="0 0 30 30"><path d="M11 13h8l-4 4.500z" fill="#6a6a6a"/></svg>
<div class="a" style="left:0px;top:224px;width:423px;height:31px;background:#dadada;"></div>
<span class="t" style="left:5.0px;top:231.0px;font-size:15.5px;line-height:20px;color:#1a1a1a;transform:scaleX(0.8814);transform-origin:0 50%;">Layers</span>
<svg class="a" style="left:375px;top:232px;" width="17" height="17" viewBox="0 0 17 17"><path d="M5.5 5.5v-3h9v8h-3" stroke="#222" stroke-width="1.6" fill="none"/><rect x="2" y="5.8" width="9.5" height="8.5" fill="none" stroke="#222" stroke-width="1.6"/><path d="M2 6.8h9.5" stroke="#222" stroke-width="2.4"/></svg>
<svg class="a" style="left:401px;top:232px;" width="17" height="17" viewBox="0 0 17 17"><path d="M2.5 2.5l12 12M14.5 2.5l-12 12" stroke="#222" stroke-width="2.6" fill="none"/></svg>
<svg class="a" style="left:4.0px;top:262.5px;overflow:visible;" width="24" height="24" viewBox="0 0 30 30"><path d="M2 18l10-13 12 5-9 15z" fill="#e64545"/><path d="M3.500 12l8.500-8 11 4-8 11z" fill="#5b8cc4"/><path d="M5 7.500l7-5 10 3-7 7.500z" fill="#f5d63a"/><path d="M18 12L27 3.500" stroke="#a86a1c" stroke-width="4.400" stroke-linecap="round"/><path d="M18 12L27 3.500" stroke="#d9953a" stroke-width="2.800" stroke-linecap="round"/><path d="M11.500 15.500l6-6 6 6-8.500 10.500-8-6z" fill="#d9b06a" stroke="#9a7436" stroke-width="1"/><path d="M14 13l6 6" stroke="#8a6a3a" stroke-width="1.600"/></svg>
<svg class="a" style="left:36.0px;top:262.5px;overflow:visible;" width="24" height="24" viewBox="0 0 30 30"><path d="M3 12v15h15" fill="none" stroke="#9a9a9a" stroke-width="1.500"/><path d="M7 8v15h15V8z" fill="#f0f0f0" stroke="#8a8a8a" stroke-width="1.500"/><rect x="10.500" y="5" width="12" height="15" fill="#e9e9e9" stroke="#8a8a8a" stroke-width="1.400"/><path d="M15 14V5.500a2.800 2.800 0 0 1 5.600 0V16a1.800 1.800 0 0 1-3.600 0V8" fill="none" stroke="#3f74b5" stroke-width="1.400"/><rect x="17" y="17" width="12" height="12" rx="2.2" fill="#5a9a62"/><path d="M23.0 19.2V26.8M19.2 23.0H26.8" stroke="#fff" stroke-width="2.4"/></svg>
<svg class="a" style="left:68.0px;top:262.5px;overflow:visible;" width="24" height="24" viewBox="0 0 30 30"><path d="M1.500 15C7 5 20 5 26 15c-6 9-19 9-24.500 0z" fill="#fafafa" stroke="#8a8a8a" stroke-width="1.100"/><path d="M2 13C8 4 20 3 27 11" stroke="#9a9a9a" stroke-width="1" fill="none"/><circle cx="13.500" cy="14" r="6" fill="#5b8cc4" stroke="#2f5688" stroke-width="1"/><circle cx="13.500" cy="14" r="2.300" fill="#111"/><circle cx="15" cy="12" r="1" fill="#fff"/><path d="M19 23h8l-4 4.500z" fill="#000"/></svg>
<svg class="a" style="left:99.0px;top:262.5px;overflow:visible;" width="24" height="24" viewBox="0 0 30 30"><path d="M3 6h22L16.500 17v11l-5-3V17z" fill="#6a98cb" stroke="#3f6ea6" stroke-width="1.100" stroke-linejoin="round"/><rect x="3" y="2.500" width="22" height="4" rx="1" fill="#fde74c" stroke="#3f6ea6" stroke-width="1"/><path d="M19 23h8l-4 4.500z" fill="#000"/></svg>
<svg class="a" style="left:129.0px;top:262.5px;overflow:visible;" width="24" height="24" viewBox="0 0 30 30"><text x="1" y="17" font-size="24" font-family="DejaVu Serif, Liberation Serif, serif" fill="#c6c6c6">ε</text><path d="M13 15h14l-4 6v8h-6v-8z" fill="#e3e3e3" stroke="#d6d6d6"/></svg>
<svg class="a" style="left:176.0px;top:262.5px;overflow:visible;" width="24" height="24" viewBox="0 0 30 30"><path d="M3 3h22M5 3v24M5 12h5M5 23h5" stroke="#a8a8a8" stroke-width="1.500" fill="none"/><rect x="9.500" y="9" width="5.500" height="5.500" fill="#f7a21b" stroke="#d07f0a" stroke-width=".8"/><rect x="9.500" y="20" width="5.500" height="5.500" fill="#f7a21b" stroke="#d07f0a" stroke-width=".8"/><path d="M17 1.500h7v13h5L20.500 26 12 14.500h5z" fill="#5b8cc4" stroke="#35588a" stroke-width="1.100" stroke-linejoin="round"/></svg>
<svg class="a" style="left:206.0px;top:262.5px;overflow:visible;" width="24" height="24" viewBox="0 0 30 30"><path d="M3 5h22M5 5v22M5 13h5M5 23h5" stroke="#a8a8a8" stroke-width="1.500" fill="none"/><rect x="9.500" y="10" width="5.500" height="5.500" fill="#f7a21b" stroke="#d07f0a" stroke-width=".8"/><rect x="9.500" y="20" width="5.500" height="5.500" fill="#f7a21b" stroke="#d07f0a" stroke-width=".8"/><path d="M17 26h7V13h5L20.500 1.500 12 13h5z" fill="#5b8cc4" stroke="#35588a" stroke-width="1.100" stroke-linejoin="round"/></svg>
<svg class="a" style="left:237.0px;top:262.5px;overflow:visible;" width="24" height="24" viewBox="0 0 30 30"><rect x="3" y="3" width="20" height="20" rx="1.500" fill="#f4f4f4" stroke="#9a9a9a" stroke-width="1.500"/><rect x="17" y="18" width="11" height="8" rx="2.500" fill="#f2485a"/><path d="M19.500 22h6" stroke="#fff" stroke-width="2"/></svg>
<svg class="a" style="left:151.5px;top:261.0px;overflow:visible;" width="26" height="26" viewBox="0 0 30 30"><path d="M11 13h8l-4 4.500z" fill="#6a6a6a"/></svg>
<div class="a" style="left:0px;top:291px;width:424px;height:708px;background:#ffffff;border:1px solid #828790;box-sizing:border-box;"></div>
<div class="a" style="left:26px;top:293px;width:397px;height:22px;background:#e2e2e2;"></div>
<svg class="a" style="left:7px;top:299px;" width="12" height="12" viewBox="0 0 12 12"><path d="M1.5 3.5l4.5 4.5 4.5-4.5" stroke="#262626" stroke-width="1.5" fill="none"/></svg>
<svg class="a" style="left:29px;top:297px;" width="16" height="16" viewBox="0 0 16 16"><rect x="0.5" y="0.5" width="15" height="15" fill="#fff" stroke="#333"/><path d="M3.5 8.2l3 3.3 6-7" stroke="#222" stroke-width="1.3" fill="none"/></svg>
<svg class="a" style="left:54px;top:297px;" width="16" height="16" viewBox="0 0 16.2 16.2"><rect x="0.0" y="0.0" width="5.4" height="5.4" fill="#1f4a78"/><rect x="10.8" y="0.0" width="5.4" height="5.4" fill="#2a5f94"/><rect x="0.0" y="5.4" width="5.4" height="5.4" fill="#7fb2e0"/><rect x="5.4" y="5.4" width="5.4" height="5.4" fill="#1b3a61"/><rect x="10.8" y="5.4" width="5.4" height="5.4" fill="#8ebce6"/><rect x="0.0" y="10.8" width="5.4" height="5.4" fill="#1f4a78"/><rect x="5.4" y="10.8" width="5.4" height="5.4" fill="#7fb2e0"/></svg>
<div class="a" style="left:77px;top:293px;width:346px;height:22px;overflow:hidden;"><span class="t" style="left:0.0px;top:1.5px;font-size:15px;line-height:20px;color:#000;font-weight:bold;transform:scaleX(0.9650);transform-origin:0 50%;text-decoration:underline;text-underline-offset:2px;text-decoration-skip-ink:none;">("scenarioId@1" - "baselineId@1" ) / "baselineId@1"</span></div>
<span class="t" style="left:54.0px;top:318.0px;font-size:15px;line-height:20px;color:#000;transform:scaleX(0.9256);transform-origin:0 50%;">Band 1</span>
<span class="t" style="left:78.0px;top:341.0px;font-size:15px;line-height:20px;color:#000;transform:scaleX(0.9873);transform-origin:0 50%;">&lt;= 0.0</span>
<div class="a" style="left:54px;top:366px;width:17px;height:17px;background:#9ecae1;"></div>
<span class="t" style="left:77.0px;top:365.0px;font-size:15px;line-height:20px;color:#000;transform:scaleX(0.9300);transform-origin:0 50%;">0.0 - 0.1</span>
<div class="a" style="left:54px;top:390px;width:17px;height:17px;background:#519ccd;"></div>
<span class="t" style="left:77.0px;top:389.0px;font-size:15px;line-height:20px;color:#000;transform:scaleX(0.9300);transform-origin:0 50%;">0.1 - 0.2</span>
<div class="a" style="left:54px;top:414px;width:17px;height:17px;background:#1d6ab1;"></div>
<span class="t" style="left:77.0px;top:413.0px;font-size:15px;line-height:20px;color:#000;transform:scaleX(0.9300);transform-origin:0 50%;">0.2 - 0.3</span>
<div class="a" style="left:54px;top:438px;width:17px;height:17px;background:#08306b;"></div>
<span class="t" style="left:77.0px;top:437.0px;font-size:15px;line-height:20px;color:#000;transform:scaleX(0.9300);transform-origin:0 50%;">&gt; 0.3</span>
<svg class="a" style="left:7px;top:465px;" width="12" height="12" viewBox="0 0 12 12"><path d="M3.5 1.5l4.5 4.5-4.5 4.5" stroke="#a0a0a0" stroke-width="1.5" fill="none"/></svg>
<svg class="a" style="left:29px;top:463px;" width="16" height="16" viewBox="0 0 16 16"><rect x="0.5" y="0.5" width="15" height="15" fill="#fff" stroke="#333"/></svg>
<svg class="a" style="left:54px;top:463px;" width="16" height="16" viewBox="0 0 16.2 16.2"><rect x="0.0" y="0.0" width="5.4" height="5.4" fill="#1f4a78"/><rect x="10.8" y="0.0" width="5.4" height="5.4" fill="#2a5f94"/><rect x="0.0" y="5.4" width="5.4" height="5.4" fill="#7fb2e0"/><rect x="5.4" y="5.4" width="5.4" height="5.4" fill="#1b3a61"/><rect x="10.8" y="5.4" width="5.4" height="5.4" fill="#8ebce6"/><rect x="0.0" y="10.8" width="5.4" height="5.4" fill="#1f4a78"/><rect x="5.4" y="10.8" width="5.4" height="5.4" fill="#7fb2e0"/></svg>
<span class="t" style="left:77.0px;top:461.0px;font-size:15px;line-height:20px;color:#7f7f7f;font-weight:bold;font-style:italic;transform:scaleX(1.0171);transform-origin:0 50%;">Carto Dark</span>
<svg class="a" style="left:7px;top:489px;" width="12" height="12" viewBox="0 0 12 12"><path d="M1.5 3.5l4.5 4.5 4.5-4.5" stroke="#262626" stroke-width="1.5" fill="none"/></svg>
<svg class="a" style="left:29px;top:487px;" width="16" height="16" viewBox="0 0 16 16"><rect x="0.5" y="0.5" width="15" height="15" fill="#fff" stroke="#333"/><path d="M3.5 8.2l3 3.3 6-7" stroke="#222" stroke-width="1.3" fill="none"/></svg>
<svg class="a" style="left:54px;top:487px;" width="16" height="16" viewBox="0 0 16.2 16.2"><rect x="0.0" y="0.0" width="5.4" height="5.4" fill="#1f4a78"/><rect x="10.8" y="0.0" width="5.4" height="5.4" fill="#2a5f94"/><rect x="0.0" y="5.4" width="5.4" height="5.4" fill="#7fb2e0"/><rect x="5.4" y="5.4" width="5.4" height="5.4" fill="#1b3a61"/><rect x="10.8" y="5.4" width="5.4" height="5.4" fill="#8ebce6"/><rect x="0.0" y="10.8" width="5.4" height="5.4" fill="#1f4a78"/><rect x="5.4" y="10.8" width="5.4" height="5.4" fill="#7fb2e0"/></svg>
<span class="t" style="left:77.0px;top:485.0px;font-size:15px;line-height:20px;color:#000;font-weight:bold;transform:scaleX(0.9690);transform-origin:0 50%;">Carto Light</span>
<svg class="a" style="left:7px;top:513px;" width="12" height="12" viewBox="0 0 12 12"><path d="M3.5 1.5l4.5 4.5-4.5 4.5" stroke="#a0a0a0" stroke-width="1.5" fill="none"/></svg>
<svg class="a" style="left:29px;top:511px;" width="16" height="16" viewBox="0 0 16 16"><rect x="0.5" y="0.5" width="15" height="15" fill="#fff" stroke="#333"/></svg>
<svg class="a" style="left:54px;top:511px;" width="16" height="16" viewBox="0 0 16.2 16.2"><rect x="0.0" y="0.0" width="5.4" height="5.4" fill="#1f4a78"/><rect x="10.8" y="0.0" width="5.4" height="5.4" fill="#2a5f94"/><rect x="0.0" y="5.4" width="5.4" height="5.4" fill="#7fb2e0"/><rect x="5.4" y="5.4" width="5.4" height="5.4" fill="#1b3a61"/><rect x="10.8" y="5.4" width="5.4" height="5.4" fill="#8ebce6"/><rect x="0.0" y="10.8" width="5.4" height="5.4" fill="#1f4a78"/><rect x="5.4" y="10.8" width="5.4" height="5.4" fill="#7fb2e0"/></svg>
<span class="t" style="left:77.0px;top:509.0px;font-size:15px;line-height:20px;color:#7f7f7f;font-weight:bold;font-style:italic;">baselineId</span>
<svg class="a" style="left:7px;top:537px;" width="12" height="12" viewBox="0 0 12 12"><path d="M3.5 1.5l4.5 4.5-4.5 4.5" stroke="#a0a0a0" stroke-width="1.5" fill="none"/></svg>
<svg class="a" style="left:29px;top:535px;" width="16" height="16" viewBox="0 0 16 16"><rect x="0.5" y="0.5" width="15" height="15" fill="#fff" stroke="#333"/></svg>
<svg class="a" style="left:54px;top:535px;" width="16" height="16" viewBox="0 0 16.2 16.2"><rect x="0.0" y="0.0" width="5.4" height="5.4" fill="#1f4a78"/><rect x="10.8" y="0.0" width="5.4" height="5.4" fill="#2a5f94"/><rect x="0.0" y="5.4" width="5.4" height="5.4" fill="#7fb2e0"/><rect x="5.4" y="5.4" width="5.4" height="5.4" fill="#1b3a61"/><rect x="10.8" y="5.4" width="5.4" height="5.4" fill="#8ebce6"/><rect x="0.0" y="10.8" width="5.4" height="5.4" fill="#1f4a78"/><rect x="5.4" y="10.8" width="5.4" height="5.4" fill="#7fb2e0"/></svg>
<span class="t" style="left:77.0px;top:533.0px;font-size:15px;line-height:20px;color:#7f7f7f;font-weight:bold;font-style:italic;transform:scaleX(0.9797);transform-origin:0 50%;">scenarioId</span>
<div class="a" style="left:1px;top:978px;width:422px;height:19px;background:#f0f0f0;"></div>
<div class="a" style="left:22px;top:978px;width:355px;height:19px;background:#cdcdcd;"></div>
<svg class="a" style="left:6px;top:982px;" width="10" height="11" viewBox="0 0 10 11"><path d="M7 1.5l-4 4 4 4" stroke="#333" stroke-width="1.6" fill="none"/></svg>
<svg class="a" style="left:406px;top:982px;" width="10" height="11" viewBox="0 0 10 11"><path d="M3 1.5l4 4-4 4" stroke="#333" stroke-width="1.6" fill="none"/></svg>
<div class="a" style="left:428px;top:223px;width:700px;height:776px;background:#f4f4f2;border:1px solid #8b8f96;box-sizing:border-box;"></div>
<svg class="a" style="left:429px;top:224px;" width="700" height="774" viewBox="0 0 700 774"><defs><pattern id="pdt" width="25" height="14" patternUnits="userSpaceOnUse" patternTransform="rotate(-52)"><rect width="25" height="14" fill="#f1f1ef"/><rect x="2.9" y="2.9" width="10.6" height="8.2" fill="#eaeae8"/><rect x="15.4" y="5.4" width="6.7" height="5.7" fill="#ebebe9"/><path d="M0 0H25M0 0V14" stroke="#fcfcfb" stroke-width="3.4"/></pattern><pattern id="part" width="17" height="11" patternUnits="userSpaceOnUse" patternTransform="rotate(0)"><rect width="17" height="11" fill="#f0f0ee"/><rect x="2.5" y="2.5" width="6.6" height="6.0" fill="#eaeae8"/><rect x="10.3" y="4.3" width="4.2" height="4.2" fill="#ebebe9"/><path d="M0 0H17M0 0V11" stroke="#fcfcfb" stroke-width="2.6"/></pattern><pattern id="part2" width="19" height="13" patternUnits="userSpaceOnUse" patternTransform="rotate(-12)"><rect width="19" height="13" fill="#f1f1ef"/><rect x="2.5" y="2.5" width="7.7" height="8.0" fill="#eaeae8"/><rect x="11.6" y="4.9" width="4.9" height="5.6" fill="#ebebe9"/><path d="M0 0H19M0 0V13" stroke="#fcfcfb" stroke-width="2.6"/></pattern><pattern id="part3" width="16" height="10" patternUnits="userSpaceOnUse" patternTransform="rotate(-8)"><rect width="16" height="10" fill="#f1f1ef"/><rect x="2.4" y="2.4" width="6.2" height="5.2" fill="#eaeae8"/><rect x="9.7" y="4.0" width="3.9" height="3.6" fill="#ebebe9"/><path d="M0 0H16M0 0V10" stroke="#fcfcfb" stroke-width="2.4"/></pattern><pattern id="pbh" width="17" height="9" patternUnits="userSpaceOnUse" patternTransform="rotate(-62)"><rect width="17" height="9" fill="#f1f1ef"/><path d="M0 0H17M0 0V9" stroke="#fcfcfb" stroke-width="2.6"/></pattern><pattern id="pea" width="13" height="22" patternUnits="userSpaceOnUse" patternTransform="rotate(0)"><rect width="13" height="22" fill="#f1f1ef"/><path d="M0 0H13M0 0V22" stroke="#fcfcfb" stroke-width="2.4"/></pattern><pattern id="pso" width="36" height="21" patternUnits="userSpaceOnUse" patternTransform="rotate(0)"><rect width="36" height="21" fill="#f1f1ef"/><rect x="2.6" y="2.6" width="12.3" height="7.1" fill="#e9e9e7"/><rect x="18.0" y="2.6" width="15.4" height="9.5" fill="#ebebe9"/><rect x="2.6" y="12.1" width="21.6" height="6.3" fill="#eaeae8"/><path d="M0 0H36M0 0V21" stroke="#fcfcfb" stroke-width="2.8"/></pattern><pattern id="psw" width="37" height="9" patternUnits="userSpaceOnUse" patternTransform="rotate(2)"><rect width="37" height="9" fill="#f1f1ef"/><path d="M0 0H37M0 0V9" stroke="#fcfcfb" stroke-width="2.2"/></pattern><pattern id="pse" width="20" height="10" patternUnits="userSpaceOnUse" patternTransform="rotate(28)"><rect width="20" height="10" fill="#f2f2f0"/><rect x="2.4" y="2.4" width="8.4" height="5.2" fill="#eaeae8"/><rect x="12.3" y="4.0" width="5.3" height="3.6" fill="#ebebe9"/><path d="M0 0H20M0 0V10" stroke="#fcfcfb" stroke-width="2.4"/></pattern><pattern id="pse2" width="40" height="22" patternUnits="userSpaceOnUse" patternTransform="rotate(35)"><rect width="40" height="22" fill="#f1f1ef"/><rect x="2.4" y="2.4" width="14.1" height="7.7" fill="#e9e9e7"/><rect x="20.0" y="2.4" width="17.6" height="10.3" fill="#ebebe9"/><rect x="2.4" y="12.7" width="24.6" height="6.9" fill="#eaeae8"/><path d="M0 0H40M0 0V22" stroke="#fcfcfb" stroke-width="2.4"/></pattern></defs><g transform="translate(-429,-224)" font-family="Liberation Sans, sans-serif"><rect x="429" y="224" width="700" height="774" fill="#f4f4f2"/><polygon points="429,224 560,224 553,330 553,470 560,600 429,620" fill="url(#pdt)"/><polygon points="553,335 640,340 630,600 560,600 553,470" fill="url(#part)"/><polygon points="429,620 560,600 540,670 429,640" fill="url(#pdt)"/><polygon points="660,340 775,330 900,224 1129,224 1129,400 980,400 980,560 900,600 760,600 720,560 715,400" fill="url(#pbh)"/><polygon points="553,224 656,224 660,290 640,326 553,316" fill="url(#part2)"/><polygon points="640,342 690,340 708,382 713,494 718,560 664,590 644,520 634,461 629,392" fill="url(#part3)"/><polygon points="980,400 1129,400 1129,700 980,700 900,600 980,560" fill="url(#pea)"/><polygon points="429,640 540,670 540,998 429,998" fill="url(#psw)"/><polygon points="540,670 680,670 700,790 770,850 870,860 870,998 540,998" fill="url(#pso)"/><polygon points="690,610 900,670 1129,720 1129,998 1090,998 900,870 780,850 710,790" fill="url(#pse)"/><polygon points="870,862 907,873 1004,943 1090,1003 870,1003" fill="url(#pse2)"/><polygon points="640,224 900,224 775,330 700,335 660,300" fill="#f6f6f4"/><ellipse cx="690" cy="255" rx="48" ry="22" fill="none" stroke="#e9e9e7" stroke-width="6" transform="rotate(-25 690 255)"/><polygon points="900,470 960,440 990,490 930,520" fill="#edf0ea"/><polyline points="660,224 663,290 647,316 634,342 629,392 639,461 648,520 664,590 669,600 677,658 689,728 708,787 735,826 771,849 810,857 864,857 907,873 1004,943 1090,1003" fill="none" stroke="#d6dbdf" stroke-width="8" stroke-linejoin="round" stroke-linecap="round" /><polyline points="656,224 659,290 643,316 630,342 625,392 635,461 644,520 658,600" fill="none" stroke="#e4e6e6" stroke-width="3" stroke-linejoin="round" stroke-linecap="round" /><polyline points="500,342 550,379 708,398" fill="none" stroke="#ffffff" stroke-width="2.2" stroke-linejoin="round" stroke-linecap="round" /><polyline points="470,380 560,450 640,470 740,455" fill="none" stroke="#ffffff" stroke-width="2.2" stroke-linejoin="round" stroke-linecap="round" /><polyline points="553,224 553,600" fill="none" stroke="#ffffff" stroke-width="2.2" stroke-linejoin="round" stroke-linecap="round" /><polyline points="537,600 537,670 545,998" fill="none" stroke="#ffffff" stroke-width="2.2" stroke-linejoin="round" stroke-linecap="round" /><polyline points="504,640 504,998" fill="none" stroke="#ffffff" stroke-width="2.2" stroke-linejoin="round" stroke-linecap="round" /><polyline points="626,670 626,998" fill="none" stroke="#ffffff" stroke-width="2.2" stroke-linejoin="round" stroke-linecap="round" /><polyline points="725,600 725,998" fill="none" stroke="#ffffff" stroke-width="2.2" stroke-linejoin="round" stroke-linecap="round" /><polyline points="868,770 868,998" fill="none" stroke="#ffffff" stroke-width="2.2" stroke-linejoin="round" stroke-linecap="round" /><polyline points="630,721 763,744 845,779 965,795 1106,849 1129,858" fill="none" stroke="#ffffff" stroke-width="2.2" stroke-linejoin="round" stroke-linecap="round" /><polyline points="540,836 868,836" fill="none" stroke="#ffffff" stroke-width="2.2" stroke-linejoin="round" stroke-linecap="round" /><polyline points="540,760 700,760" fill="none" stroke="#ffffff" stroke-width="2.2" stroke-linejoin="round" stroke-linecap="round" /><polyline points="540,905 868,905" fill="none" stroke="#ffffff" stroke-width="2.2" stroke-linejoin="round" stroke-linecap="round" /><polyline points="820,224 870,300 930,470 880,600" fill="none" stroke="#ffffff" stroke-width="2.2" stroke-linejoin="round" stroke-linecap="round" /><polyline points="775,330 1000,470 1129,540" fill="none" stroke="#ffffff" stroke-width="2.2" stroke-linejoin="round" stroke-linecap="round" /><polyline points="760,440 900,520 1050,610" fill="none" stroke="#ffffff" stroke-width="2.2" stroke-linejoin="round" stroke-linecap="round" /><polyline points="700,280 760,250 840,224" fill="none" stroke="#ffffff" stroke-width="2.2" stroke-linejoin="round" stroke-linecap="round" /><polyline points="429,610 470,560 520,480 553,440" fill="none" stroke="#ffffff" stroke-width="2.2" stroke-linejoin="round" stroke-linecap="round" /><polyline points="429,480 520,350 560,300 600,224" fill="none" stroke="#ffffff" stroke-width="2.2" stroke-linejoin="round" stroke-linecap="round" /><polyline points="429,390 470,340 520,260 540,224" fill="none" stroke="#ffffff" stroke-width="2.2" stroke-linejoin="round" stroke-linecap="round" /><polyline points="980,400 980,700" fill="none" stroke="#ffffff" stroke-width="2.2" stroke-linejoin="round" stroke-linecap="round" /><polyline points="1050,380 1050,700" fill="none" stroke="#ffffff" stroke-width="2.2" stroke-linejoin="round" stroke-linecap="round" /><polyline points="429,227 463,250 516,295 553,315 571,324 630,330 687,336 692,340 708,382 713,408 713,494 718,560 740,596" fill="none" stroke="#ffffff" stroke-width="7" stroke-linejoin="round" stroke-linecap="round" /><polyline points="429,224 445,226 470,250" fill="none" stroke="#ffffff" stroke-width="9" stroke-linejoin="round" stroke-linecap="round" /><polyline points="687,336 718,308 758,298 789,294 810,310 887,321 965,310 1043,300 1129,280" fill="none" stroke="#ffffff" stroke-width="7.5" stroke-linejoin="round" stroke-linecap="round" /><polyline points="771,224 771,311 779,329 768,392 752,447 739,476 722,540" fill="none" stroke="#ffffff" stroke-width="6" stroke-linejoin="round" stroke-linecap="round" /><polyline points="760,224 776,300" fill="none" stroke="#ffffff" stroke-width="5" stroke-linejoin="round" stroke-linecap="round" /><polyline points="784,224 770,300" fill="none" stroke="#ffffff" stroke-width="5" stroke-linejoin="round" stroke-linecap="round" /><polyline points="429,623 478,658 533,666 595,635 661,606 760,602 850,600 933,584 1000,578 1080,566 1129,550" fill="none" stroke="#ffffff" stroke-width="6.5" stroke-linejoin="round" stroke-linecap="round" /><polyline points="740,596 760,610 830,640 895,662 965,697 1010,704 1129,712" fill="none" stroke="#ffffff" stroke-width="6.5" stroke-linejoin="round" stroke-linecap="round" /><polyline points="700,590 760,640 800,630" fill="none" stroke="#ffffff" stroke-width="4" stroke-linejoin="round" stroke-linecap="round" /><rect x="921" y="310" width="26" height="26" fill="#9ecae1" fill-opacity="0.8"/><rect x="973" y="310" width="26" height="26" fill="#9ecae1" fill-opacity="0.8"/><rect x="921" y="336" width="26" height="26" fill="#9ecae1" fill-opacity="0.8"/><rect x="973" y="336" width="26" height="26" fill="#9ecae1" fill-opacity="0.8"/><rect x="999" y="362" width="26" height="26" fill="#9ecae1" fill-opacity="0.8"/><rect x="895" y="388" width="26" height="26" fill="#9ecae1" fill-opacity="0.8"/><rect x="947" y="414" width="26" height="26" fill="#9ecae1" fill-opacity="0.8"/><rect x="921" y="440" width="26" height="26" fill="#9ecae1" fill-opacity="0.8"/><rect x="739" y="466" width="26" height="26" fill="#9ecae1" fill-opacity="0.8"/><rect x="947" y="466" width="26" height="26" fill="#9ecae1" fill-opacity="0.8"/><rect x="1051" y="466" width="26" height="26" fill="#9ecae1" fill-opacity="0.8"/><rect x="713" y="492" width="26" height="26" fill="#9ecae1" fill-opacity="0.8"/><rect x="739" y="492" width="26" height="26" fill="#9ecae1" fill-opacity="0.8"/><rect x="765" y="492" width="26" height="26" fill="#9ecae1" fill-opacity="0.8"/><rect x="713" y="518" width="26" height="26" fill="#519ccd" fill-opacity="0.8"/><rect x="739" y="518" width="26" height="26" fill="#9ecae1" fill-opacity="0.8"/><rect x="765" y="518" width="26" height="26" fill="#519ccd" fill-opacity="0.8"/><rect x="791" y="518" width="26" height="26" fill="#519ccd" fill-opacity="0.8"/><rect x="817" y="518" width="26" height="26" fill="#519ccd" fill-opacity="0.8"/><rect x="739" y="544" width="26" height="26" fill="#9ecae1" fill-opacity="0.8"/><rect x="765" y="544" width="26" height="26" fill="#08306b" fill-opacity="0.8"/><rect x="791" y="544" width="26" height="26" fill="#519ccd" fill-opacity="0.8"/><rect x="817" y="544" width="26" height="26" fill="#1d6ab1" fill-opacity="0.8"/><rect x="843" y="544" width="26" height="26" fill="#9ecae1" fill-opacity="0.8"/><rect x="869" y="544" width="26" height="26" fill="#9ecae1" fill-opacity="0.8"/><rect x="895" y="544" width="26" height="26" fill="#9ecae1" fill-opacity="0.8"/><rect x="687" y="570" width="26" height="26" fill="#9ecae1" fill-opacity="0.8"/><rect x="713" y="570" width="26" height="26" fill="#9ecae1" fill-opacity="0.8"/><rect x="739" y="570" width="26" height="26" fill="#9ecae1" fill-opacity="0.8"/><rect x="765" y="570" width="26" height="26" fill="#519ccd" fill-opacity="0.8"/><rect x="791" y="570" width="26" height="26" fill="#519ccd" fill-opacity="0.8"/><rect x="817" y="570" width="26" height="26" fill="#519ccd" fill-opacity="0.8"/><rect x="843" y="570" width="26" height="26" fill="#519ccd" fill-opacity="0.8"/><rect x="869" y="570" width="26" height="26" fill="#9ecae1" fill-opacity="0.8"/><rect x="1051" y="570" width="26" height="26" fill="#9ecae1" fill-opacity="0.8"/><rect x="661" y="596" width="26" height="26" fill="#9ecae1" fill-opacity="0.8"/><rect x="713" y="596" width="26" height="26" fill="#9ecae1" fill-opacity="0.8"/><rect x="765" y="596" width="26" height="26" fill="#9ecae1" fill-opacity="0.8"/><rect x="791" y="596" width="26" height="26" fill="#519ccd" fill-opacity="0.8"/><rect x="817" y="596" width="26" height="26" fill="#519ccd" fill-opacity="0.8"/><rect x="843" y="596" width="26" height="26" fill="#519ccd" fill-opacity="0.8"/><rect x="869" y="596" width="26" height="26" fill="#519ccd" fill-opacity="0.8"/><rect x="895" y="596" width="26" height="26" fill="#9ecae1" fill-opacity="0.8"/><rect x="921" y="596" width="26" height="26" fill="#9ecae1" fill-opacity="0.8"/><rect x="947" y="596" width="26" height="26" fill="#9ecae1" fill-opacity="0.8"/><rect x="1025" y="596" width="26" height="26" fill="#9ecae1" fill-opacity="0.8"/><rect x="1051" y="596" width="26" height="26" fill="#9ecae1" fill-opacity="0.8"/><rect x="765" y="622" width="26" height="26" fill="#9ecae1" fill-opacity="0.8"/><rect x="791" y="622" width="26" height="26" fill="#519ccd" fill-opacity="0.8"/><rect x="817" y="622" width="26" height="26" fill="#9ecae1" fill-opacity="0.8"/><rect x="843" y="622" width="26" height="26" fill="#519ccd" fill-opacity="0.8"/><rect x="869" y="622" width="26" height="26" fill="#519ccd" fill-opacity="0.8"/><rect x="895" y="622" width="26" height="26" fill="#519ccd" fill-opacity="0.8"/><rect x="921" y="622" width="26" height="26" fill="#519ccd" fill-opacity="0.8"/><rect x="947" y="622" width="26" height="26" fill="#9ecae1" fill-opacity="0.8"/><rect x="999" y="622" width="26" height="26" fill="#9ecae1" fill-opacity="0.8"/><rect x="1025" y="622" width="26" height="26" fill="#9ecae1" fill-opacity="0.8"/><rect x="1051" y="622" width="26" height="26" fill="#9ecae1" fill-opacity="0.8"/><rect x="1077" y="622" width="26" height="26" fill="#9ecae1" fill-opacity="0.8"/><rect x="1103" y="622" width="26" height="26" fill="#9ecae1" fill-opacity="0.8"/><rect x="895" y="648" width="26" height="26" fill="#9ecae1" fill-opacity="0.8"/><rect x="921" y="648" width="26" height="26" fill="#9ecae1" fill-opacity="0.8"/><rect x="947" y="648" width="26" height="26" fill="#9ecae1" fill-opacity="0.8"/><rect x="973" y="648" width="26" height="26" fill="#9ecae1" fill-opacity="0.8"/><rect x="999" y="648" width="26" height="26" fill="#9ecae1" fill-opacity="0.8"/><rect x="1025" y="648" width="26" height="26" fill="#9ecae1" fill-opacity="0.8"/><rect x="1051" y="648" width="26" height="26" fill="#9ecae1" fill-opacity="0.8"/><rect x="1077" y="648" width="26" height="26" fill="#9ecae1" fill-opacity="0.8"/><rect x="1103" y="648" width="26" height="26" fill="#9ecae1" fill-opacity="0.8"/><rect x="947" y="674" width="26" height="26" fill="#9ecae1" fill-opacity="0.8"/><rect x="973" y="674" width="26" height="26" fill="#9ecae1" fill-opacity="0.8"/><rect x="999" y="674" width="26" height="26" fill="#9ecae1" fill-opacity="0.8"/><rect x="1025" y="674" width="26" height="26" fill="#9ecae1" fill-opacity="0.8"/><rect x="1051" y="674" width="26" height="26" fill="#9ecae1" fill-opacity="0.8"/><rect x="1077" y="674" width="26" height="26" fill="#9ecae1" fill-opacity="0.8"/><text stroke="#8595aa" stroke-width="0.5" x="451" y="330.5" font-size="17.5" fill="#8595aa" text-anchor="start" style="" opacity="1" textLength="113" lengthAdjust="spacingAndGlyphs">LOS ANGELES</text><text x="432" y="452" font-size="10.5" fill="#94a2b4" stroke="#94a2b4" stroke-width="0.35" text-anchor="start" style="" opacity="1" textLength="59" lengthAdjust="spacingAndGlyphs">DOWNTOWN</text><text x="560" y="470" font-size="9.5" fill="#94a2b4" stroke="#94a2b4" stroke-width="0.35" text-anchor="start" style="" opacity="1" textLength="54" lengthAdjust="spacingAndGlyphs">ARTS DISTRICT</text><text x="785" y="442" font-size="10.5" fill="#94a2b4" stroke="#94a2b4" stroke-width="0.35" text-anchor="start" style="" opacity="1" textLength="72" lengthAdjust="spacingAndGlyphs">BOYLE HEIGHTS</text><text x="1049" y="369" font-size="9" fill="#94a2b4" stroke="#94a2b4" stroke-width="0.35" text-anchor="start" style="" opacity="1" textLength="54" lengthAdjust="spacingAndGlyphs">CITY TERRACE</text><text x="1025" y="524" font-size="8.5" fill="#94a2b4" stroke="#94a2b4" stroke-width="0.35" text-anchor="start" style="" opacity="1" textLength="49" lengthAdjust="spacingAndGlyphs">WELLINGTON</text><text x="1033" y="532.5" font-size="8.5" fill="#94a2b4" stroke="#94a2b4" stroke-width="0.35" text-anchor="start" style="" opacity="1" textLength="33" lengthAdjust="spacingAndGlyphs">HEIGHTS</text><text x="691" y="706" font-size="8.5" fill="#94a2b4" stroke="#94a2b4" stroke-width="0.35" text-anchor="start" style="" opacity="1" textLength="53" lengthAdjust="spacingAndGlyphs">NINTH STREET</text><text x="698" y="713.5" font-size="8.5" fill="#94a2b4" stroke="#94a2b4" stroke-width="0.35" text-anchor="start" style="" opacity="1" textLength="39" lengthAdjust="spacingAndGlyphs">JUNCTION</text><text x="655" y="860" font-size="12" fill="#8d9aac" stroke="#8d9aac" stroke-width="0.55" text-anchor="start" style="" opacity="1" textLength="38" lengthAdjust="spacingAndGlyphs">Vernon</text><text x="464" y="779" font-size="8.5" fill="#94a2b4" stroke="#94a2b4" stroke-width="0.35" text-anchor="start" style="" opacity="1" textLength="23" lengthAdjust="spacingAndGlyphs">NEVIN</text><text x="437" y="891" font-size="9.5" fill="#94a2b4" stroke="#94a2b4" stroke-width="0.35" text-anchor="start" style="" opacity="1" textLength="45" lengthAdjust="spacingAndGlyphs">CENTRAL-</text><text x="437" y="902" font-size="9.5" fill="#94a2b4" stroke="#94a2b4" stroke-width="0.35" text-anchor="start" style="" opacity="1" textLength="46" lengthAdjust="spacingAndGlyphs">ALAMEDA</text><text x="476" y="228" font-size="9.5" fill="#aab4c1" text-anchor="start" style="" opacity="1" textLength="84" lengthAdjust="spacingAndGlyphs" transform="rotate(33 476 228)">Cesar E Chavez Ave.</text><text x="492" y="275" font-size="9.5" fill="#aab4c1" text-anchor="start" style="" opacity="1" textLength="62" lengthAdjust="spacingAndGlyphs" transform="rotate(37 492 275)">Santa Ana Fwy</text><text x="448" y="311" font-size="9" fill="#aab4c1" text-anchor="start" style="" opacity="1" textLength="52" lengthAdjust="spacingAndGlyphs" transform="rotate(-52 448 311)">N Grand Ave.</text><text x="537" y="298" font-size="9" fill="#aab4c1" text-anchor="start" style="" opacity="1" textLength="42" lengthAdjust="spacingAndGlyphs" transform="rotate(-52 537 298)">N Main St</text><text x="501" y="346" font-size="9.5" fill="#aab4c1" text-anchor="start" style="" opacity="1" textLength="62" lengthAdjust="spacingAndGlyphs" transform="rotate(36 501 346)">East 1st Street</text><text x="484" y="384" font-size="9.5" fill="#aab4c1" text-anchor="start" style="" opacity="1" textLength="62" lengthAdjust="spacingAndGlyphs" transform="rotate(30 484 384)">East 3rd Street</text><text x="495" y="412" font-size="9.5" fill="#aab4c1" text-anchor="start" style="" opacity="1" textLength="62" lengthAdjust="spacingAndGlyphs" transform="rotate(30 495 412)">East 4th Street</text><text x="465" y="418" font-size="9.5" fill="#aab4c1" text-anchor="start" style="" opacity="1" textLength="62" lengthAdjust="spacingAndGlyphs" transform="rotate(30 465 418)">East 5th Street</text><text x="484" y="494" font-size="9.5" fill="#aab4c1" text-anchor="start" style="" opacity="1" textLength="62" lengthAdjust="spacingAndGlyphs" transform="rotate(38 484 494)">East 7th Street</text><text x="435" y="416" font-size="9" fill="#aab4c1" text-anchor="start" style="" opacity="1" textLength="46" lengthAdjust="spacingAndGlyphs" transform="rotate(-55 435 416)">S Spring St.</text><text x="432" y="438" font-size="9" fill="#aab4c1" text-anchor="start" style="" opacity="1" textLength="40" lengthAdjust="spacingAndGlyphs" transform="rotate(-55 432 438)">S Main St.</text><text x="452" y="497" font-size="9" fill="#aab4c1" text-anchor="start" style="" opacity="1" textLength="52" lengthAdjust="spacingAndGlyphs" transform="rotate(-55 452 497)">San Pedro St.</text><text x="540" y="492" font-size="9" fill="#aab4c1" text-anchor="start" style="" opacity="1" textLength="62" lengthAdjust="spacingAndGlyphs" transform="rotate(-86 540 492)">Central Avenue</text><text x="553" y="518" font-size="9" fill="#aab4c1" text-anchor="start" style="" opacity="1" textLength="54" lengthAdjust="spacingAndGlyphs" transform="rotate(-88 553 518)">S Alameda St</text><text x="548" y="612" font-size="9" fill="#aab4c1" text-anchor="start" style="" opacity="1" textLength="56" lengthAdjust="spacingAndGlyphs" transform="rotate(-88 548 612)">S Alameda St.</text><text x="664" y="270" font-size="9" fill="#aab4c1" text-anchor="start" style="" opacity="1" textLength="46" lengthAdjust="spacingAndGlyphs" transform="rotate(-88 664 270)">Los Angeles</text><text x="628" y="403" font-size="9" fill="#aab4c1" text-anchor="start" style="" opacity="1" textLength="74" lengthAdjust="spacingAndGlyphs" transform="rotate(83 628 403)">Los Angeles River</text><text x="714" y="298" font-size="9.5" fill="#aab4c1" text-anchor="start" style="" opacity="1" textLength="54" lengthAdjust="spacingAndGlyphs" transform="rotate(-27 714 298)">Mission Road</text><text x="690" y="332" font-size="9.5" fill="#aab4c1" text-anchor="start" style="" opacity="1" textLength="100" lengthAdjust="spacingAndGlyphs" transform="rotate(-24 690 332)">I-10 Metro ExpressLanes</text><text x="841" y="316" font-size="9.5" fill="#aab4c1" text-anchor="start" style="" opacity="1" textLength="104" lengthAdjust="spacingAndGlyphs" transform="rotate(-9 841 316)">I-10 Metro ExpressLanes</text><text x="886" y="318" font-size="9.5" fill="#aab4c1" text-anchor="start" style="" opacity="1" textLength="88" lengthAdjust="spacingAndGlyphs" transform="rotate(-6 886 318)">San Bernardino Fwy</text><text x="796" y="266" font-size="9.5" fill="#aab4c1" text-anchor="start" style="" opacity="1" textLength="66" lengthAdjust="spacingAndGlyphs" transform="rotate(27 796 266)">Marengo Street</text><text x="911" y="274" font-size="9.5" fill="#aab4c1" text-anchor="start" style="" opacity="1" textLength="48" lengthAdjust="spacingAndGlyphs" transform="rotate(-62 911 274)">Soto Street</text><text x="841" y="430" font-size="9.5" fill="#aab4c1" text-anchor="start" style="" opacity="1" textLength="48" lengthAdjust="spacingAndGlyphs" transform="rotate(-62 841 430)">Soto Street</text><text x="718" y="475" font-size="9" fill="#aab4c1" text-anchor="start" style="" opacity="1" textLength="64" lengthAdjust="spacingAndGlyphs" transform="rotate(-88 718 475)">Santa Ana Fwy</text><text x="1067" y="306" font-size="9.5" fill="#aab4c1" text-anchor="start" style="" opacity="1" textLength="60" lengthAdjust="spacingAndGlyphs" transform="rotate(-20 1067 306)">San Bernardino</text><text x="710" y="482" font-size="8" fill="#aab4c1" text-anchor="start" style="font-style:italic;" opacity="1" textLength="62" lengthAdjust="spacingAndGlyphs">Hollenbeck Lake</text><text x="703" y="605" font-size="9.5" fill="#aab4c1" text-anchor="start" style="" opacity="1" textLength="75" lengthAdjust="spacingAndGlyphs" transform="rotate(-2 703 605)">Pomona Freeway</text><text x="792" y="606" font-size="9.5" fill="#aab4c1" text-anchor="start" style="" opacity="0.6" textLength="75" lengthAdjust="spacingAndGlyphs" transform="rotate(7 792 606)">Pomona Freeway</text><text x="1008" y="582" font-size="9.5" fill="#aab4c1" text-anchor="start" style="" opacity="1" textLength="75" lengthAdjust="spacingAndGlyphs" transform="rotate(-7 1008 582)">Pomona Freeway</text><text x="596" y="632" font-size="9.5" fill="#aab4c1" text-anchor="start" style="" opacity="1" textLength="78" lengthAdjust="spacingAndGlyphs" transform="rotate(-19 596 632)">Santa Monica Fwy</text><text x="452" y="652" font-size="9.5" fill="#aab4c1" text-anchor="start" style="" opacity="1" textLength="78" lengthAdjust="spacingAndGlyphs" transform="rotate(14 452 652)">Santa Monica Fwy</text><text x="429" y="658" font-size="9.5" fill="#aab4c1" text-anchor="start" style="" opacity="1" textLength="52" lengthAdjust="spacingAndGlyphs" transform="rotate(25 429 658)">hington Blvd</text><text x="892" y="668" font-size="9.5" fill="#aab4c1" text-anchor="start" style="" opacity="1" textLength="62" lengthAdjust="spacingAndGlyphs" transform="rotate(24 892 668)">Santa Ana Fwy</text><text x="1058" y="710" font-size="9.5" fill="#aab4c1" text-anchor="start" style="" opacity="1" textLength="50" lengthAdjust="spacingAndGlyphs" transform="rotate(8 1058 710)">Santa Ana F</text><text x="1050" y="668" font-size="9.5" fill="#aab4c1" text-anchor="start" style="" opacity="0.5" textLength="58" lengthAdjust="spacingAndGlyphs">Whittier Blvd</text><text x="866" y="604" font-size="9.5" fill="#aab4c1" text-anchor="start" style="" opacity="0.5" textLength="58" lengthAdjust="spacingAndGlyphs" transform="rotate(30 866 604)">Whittier Blvd</text><text x="852" y="786" font-size="9.5" fill="#aab4c1" text-anchor="start" style="" opacity="1" textLength="84" lengthAdjust="spacingAndGlyphs" transform="rotate(5 852 786)">E Washington Blvd.</text><text x="1060" y="843" font-size="9.5" fill="#aab4c1" text-anchor="start" style="" opacity="1" textLength="48" lengthAdjust="spacingAndGlyphs" transform="rotate(20 1060 843)">E Washingt</text><text x="704" y="792" font-size="9" fill="#aab4c1" text-anchor="start" style="" opacity="1" textLength="72" lengthAdjust="spacingAndGlyphs" transform="rotate(47 704 792)">Los Angeles River</text><text x="870" y="862" font-size="9" fill="#aab4c1" text-anchor="start" style="" opacity="1" textLength="72" lengthAdjust="spacingAndGlyphs" transform="rotate(28 870 862)">Los Angeles River</text><text x="671" y="612" font-size="9" fill="#aab4c1" text-anchor="start" style="" opacity="0.7" textLength="72" lengthAdjust="spacingAndGlyphs" transform="rotate(80 671 612)">Los Angeles River</text><text x="541" y="747" font-size="9" fill="#aab4c1" text-anchor="start" style="" opacity="1" textLength="68" lengthAdjust="spacingAndGlyphs" transform="rotate(-88 541 747)">Alameda Street</text><text x="535" y="832" font-size="9" fill="#aab4c1" text-anchor="start" style="" opacity="1" textLength="68" lengthAdjust="spacingAndGlyphs" transform="rotate(86 535 832)">Alameda Street</text><text x="730" y="698" font-size="9" fill="#aab4c1" text-anchor="start" style="" opacity="1" textLength="48" lengthAdjust="spacingAndGlyphs" transform="rotate(-88 730 698)">Soto Street</text><text x="718" y="722" font-size="9" fill="#aab4c1" text-anchor="start" style="" opacity="0.8" textLength="44" lengthAdjust="spacingAndGlyphs" transform="rotate(-88 718 722)">Soto Street</text><text x="438" y="650" font-size="9" fill="#aab4c1" text-anchor="start" style="" opacity="1" textLength="58" lengthAdjust="spacingAndGlyphs" transform="rotate(-55 438 650)">Central Avenue</text><text x="520" y="607" font-size="9" fill="#aab4c1" text-anchor="start" style="" opacity="1" textLength="30" lengthAdjust="spacingAndGlyphs" transform="rotate(55 520 607)">pic Blvd</text><text x="496" y="580" font-size="9" fill="#aab4c1" text-anchor="start" style="" opacity="1" textLength="60" lengthAdjust="spacingAndGlyphs" transform="rotate(42 496 580)">E Olympic Blvd</text></g></svg>
<div class="a" style="left:1880px;top:224px;width:40px;height:31px;background:#dadada;"></div>
<svg class="a" style="left:1897px;top:232px;" width="17" height="17" viewBox="0 0 17 17"><path d="M2.5 2.5l12 12M14.5 2.5l-12 12" stroke="#222" stroke-width="2.6" fill="none"/></svg>
<div class="a" style="left:1888px;top:231px;width:2px;height:11px;background:#222;"></div>
<div class="a" style="left:1880px;top:291px;width:42px;height:24px;background:#fff;border:1px solid #828790;box-sizing:border-box;"></div>
<div class="a" style="left:1880px;top:314px;width:42px;height:686px;background:#fff;border:1px solid #828790;box-sizing:border-box;"></div>
<div class="a" style="left:1886px;top:139px;width:34px;height:41px;background:#f3f3f3;border:1px solid #dadada;box-sizing:border-box;"></div>
<div class="a" style="left:4px;top:1003px;width:232px;height:26px;background:#fff;border:1px solid #7a7a7a;box-sizing:border-box;"></div>
<svg class="a" style="left:13px;top:1007px;" width="18" height="18" viewBox="0 0 18 18"><circle cx="7.5" cy="7" r="5" fill="none" stroke="#8a8a8a" stroke-width="1.3"/><path d="M11 11l5 5.5" stroke="#8a8a8a" stroke-width="1.8"/></svg>
<span class="t" style="left:38.0px;top:1006.0px;font-size:14.5px;line-height:19px;color:#7d7d7d;transform:scaleX(0.8987);transform-origin:0 50%;">Type to locate (Ctrl+K)</span>
<span class="t" style="left:1018.0px;top:1005.5px;font-size:14.5px;line-height:19px;color:#000;transform:scaleX(0.8600);transform-origin:0 50%;">Coordinate</span>
<div class="a" style="left:1084px;top:1004px;width:127px;height:24px;background:#fff;border:1px solid #7a7a7a;box-sizing:border-box;"></div>
<span class="t" style="left:1091.0px;top:1005.5px;font-size:14.5px;line-height:19px;color:#000;transform:scaleX(0.8705);transform-origin:0 50%;">-13163355,4034898</span>
<svg class="a" style="left:1212.0px;top:1005.5px;overflow:visible;" width="22" height="22" viewBox="0 0 30 30"><ellipse cx="13" cy="11" rx="6.500" ry="10.500" fill="#fff" stroke="#111" stroke-width="2.200" transform="rotate(-32 13 11)"/><path d="M5 6l7 11M9 3l7 11M14 2l5 8" stroke="#111" stroke-width="2.400"/><path d="M2 14c2 1 4 1 5 0M24 3c1 1 2 1 3 0" stroke="#333" stroke-width="1"/><circle cx="17.500" cy="20.500" r="5.500" fill="#fff" stroke="#111" stroke-width="2.200"/><circle cx="17.500" cy="20.500" r="1.800" fill="#fff" stroke="#111" stroke-width="1.400"/><path d="M22 24l3 2" stroke="#6a3030" stroke-width="1.500"/></svg>
<span class="t" style="left:1248.0px;top:1005.5px;font-size:14.5px;line-height:19px;color:#000;transform:scaleX(0.8271);transform-origin:0 50%;">Scale</span>
<div class="a" style="left:1283px;top:1004px;width:90px;height:24px;background:#fff;border:1px solid #7a7a7a;box-sizing:border-box;"></div>
<span class="t" style="left:1288.0px;top:1005.5px;font-size:14.5px;line-height:19px;color:#000;transform:scaleX(0.8777);transform-origin:0 50%;">1:55431</span>
<svg class="a" style="left:1354px;top:1010px;" width="14" height="10" viewBox="0 0 14 10"><path d="M2 2.5l5 5 5-5" stroke="#444" stroke-width="1.2" fill="none"/></svg>
<svg class="a" style="left:1381.5px;top:1007.0px;overflow:visible;" width="21" height="21" viewBox="0 0 30 30"><path d="M8.500 14V9.500a6.500 6.500 0 0 1 13 0V14" fill="none" stroke="#8a8a8a" stroke-width="2.600"/><rect x="4.500" y="13" width="21" height="15" rx="2" fill="#7f7f7f"/></svg>
<span class="t" style="left:1409.0px;top:1005.5px;font-size:14.5px;line-height:19px;color:#000;transform:scaleX(0.8888);transform-origin:0 50%;">Magnifier</span>
<div class="a" style="left:1465px;top:1004px;width:86px;height:24px;background:#fff;border:1px solid #7a7a7a;box-sizing:border-box;"></div>
<span class="t" style="left:1469.0px;top:1005.5px;font-size:14.5px;line-height:19px;color:#000;transform:scaleX(0.9168);transform-origin:0 50%;">100%</span>
<svg class="a" style="left:1535px;top:1005px;" width="15" height="22" viewBox="0 0 15 22"><rect x="0.5" y="0.5" width="14" height="9.5" fill="#f0f0f0" stroke="#c4c4c4"/><rect x="0.5" y="11.5" width="14" height="9.5" fill="#f0f0f0" stroke="#c4c4c4"/><path d="M4.0 8.0l3.5-4 3.5 4z" fill="#000"/><path d="M4.0 14.0l3.5 4 3.5-4z" fill="#000"/></svg>
<span class="t" style="left:1561.0px;top:1005.5px;font-size:14.5px;line-height:19px;color:#000;transform:scaleX(0.9444);transform-origin:0 50%;">Rotation</span>
<div class="a" style="left:1617px;top:1004px;width:84px;height:24px;background:#fff;border:1px solid #7a7a7a;box-sizing:border-box;"></div>
<span class="t" style="left:1621.0px;top:1005.5px;font-size:14.5px;line-height:19px;color:#000;">0.0 °</span>
<svg class="a" style="left:1685px;top:1005px;" width="15" height="22" viewBox="0 0 15 22"><rect x="0.5" y="0.5" width="14" height="9.5" fill="#f0f0f0" stroke="#c4c4c4"/><rect x="0.5" y="11.5" width="14" height="9.5" fill="#f0f0f0" stroke="#c4c4c4"/><path d="M4.0 8.0l3.5-4 3.5 4z" fill="#000"/><path d="M4.0 14.0l3.5 4 3.5-4z" fill="#000"/></svg>
<svg class="a" style="left:1708px;top:1007px;" width="16" height="16" viewBox="0 0 16 16"><rect x="0.5" y="0.5" width="15" height="15" fill="#fff" stroke="#333"/><path d="M3.5 8.2l3 3.3 6-7" stroke="#222" stroke-width="1.3" fill="none"/></svg>
<span class="t" style="left:1730.0px;top:1005.5px;font-size:14.5px;line-height:19px;color:#000;transform:scaleX(0.8622);transform-origin:0 50%;">Render</span>
<svg class="a" style="left:1786.0px;top:1007.0px;overflow:visible;" width="18" height="18" viewBox="0 0 30 30"><circle cx="16" cy="15" r="11" fill="none" stroke="#7a7a7a" stroke-width="1.300"/><ellipse cx="16" cy="15" rx="5" ry="11" fill="none" stroke="#7a7a7a" stroke-width="1.100"/><path d="M5 15h22M7 9h18M7 21h18M16 4v22" stroke="#7a7a7a" stroke-width="1.100"/><path d="M2 22l8-8" stroke="#7a7a7a" stroke-width="1.300"/></svg>
<span class="t" style="left:1808.0px;top:1005.5px;font-size:14.5px;line-height:19px;color:#000;transform:scaleX(0.8227);transform-origin:0 50%;">EPSG:3857</span>
<svg class="a" style="left:1892.0px;top:1004.0px;overflow:visible;" width="22" height="22" viewBox="0 0 30 30"><path d="M3 13c0-6 5.500-9.500 12-9.500s12 3.500 12 9.500-5.500 9.500-12 9.500c-1.500 0-3-.2-4.300-.6L5 25.500l1.500-5C4.300 18.800 3 16 3 13z" fill="#6e6e6e"/><circle cx="9.500" cy="13" r="1.700" fill="#f0f0f0"/><circle cx="15" cy="13" r="1.700" fill="#f0f0f0"/><circle cx="20.500" cy="13" r="1.700" fill="#f0f0f0"/></svg>
<div class="a" style="left:1108px;top:32px;width:780px;height:975px;background:#f0f0f0;border:1px solid #5a5a5a;box-sizing:border-box;box-shadow:2px 8px 26px rgba(0,0,0,0.30),0 0 5px rgba(0,0,0,0.14);"></div><div class="a" style="left:1109px;top:33px;width:778px;height:37px;background:#fff;"></div><svg class="a" style="left:1118px;top:41px;" width="20" height="20" viewBox="0 0 24 24"><path d="M12 1.500C6 1.500 1.500 6 1.500 12S6 22.500 12 22.500c1.800 0 3.500-.4 5-1.200L13.800 17.700c-.6.200-1.200.300-1.800.300-3.300 0-6-2.700-6-6s2.700-6 6-6 6 2.700 6 6c0 1.100-.3 2.100-.8 3l3.400 3.400c1.200-1.800 1.900-4 1.900-6.400C22.500 6 18 1.500 12 1.500z" fill="#6aa22c"/><path d="M9.800 9.600l4.200 1.200-2.800 2.800z" fill="#ee7913"/><path d="M11.200 13.600l2.800-2.800 2.300 2.400-2.800 2.800z" fill="#f0c020"/><path d="M13.500 16l2.800-2.800 7 7.300v2.500h-3.300z" fill="#5a962a"/><path d="M14.600 15l1-1 7.200 7.400" stroke="#8cc04a" stroke-width=".8" fill="none"/></svg><span class="t" style="left:1143.0px;top:41.0px;font-size:15px;line-height:20px;color:#000;transform:scaleX(0.9922);transform-origin:0 50%;">Layer Properties — ("scenarioId@1" - "baselineId@1" ) / "baselineId@1" — Symbology</span><svg class="a" style="left:1858px;top:43px;" width="16" height="16" viewBox="0 0 16 16"><path d="M1.5 1.5l13 13M14.5 1.5l-13 13" stroke="#000" stroke-width="1.3" fill="none"/></svg><div class="a" style="left:1109px;top:70px;width:150px;height:936px;background:#5c5c5c;"></div><div class="a" style="left:1109px;top:70px;width:150px;height:24px;background:#fff;border:1px solid #9a9a9a;box-sizing:border-box;"></div><svg class="a" style="left:1119px;top:74px;" width="16" height="16" viewBox="0 0 16 16"><circle cx="6.5" cy="6.5" r="4.6" fill="none" stroke="#8a8a8a" stroke-width="1.2"/><path d="M10 10l4.5 4.5" stroke="#8a8a8a" stroke-width="1.6"/></svg><div class="a" style="left:1109px;top:181px;width:150px;height:40px;background:#f0f0f0;"></div><svg class="a" style="left:1113.0px;top:106.0px;overflow:visible;" width="29" height="29" viewBox="0 0 30 30"><circle cx="15" cy="15" r="13" fill="#5f8fc6" stroke="#3f6ea6" stroke-width="1"/><ellipse cx="14" cy="9" rx="9.500" ry="6" fill="#9fc0e6" opacity=".55"/><text x="15" y="23.500" font-size="23" font-style="italic" font-weight="bold" text-anchor="middle" font-family="Liberation Serif, serif" fill="#fff">i</text></svg><span class="t" style="left:1148.0px;top:111.0px;font-size:16px;line-height:21px;color:#f2f2f2;transform:scaleX(0.9684);transform-origin:0 50%;">Information</span><svg class="a" style="left:1113.0px;top:147.0px;overflow:visible;" width="29" height="29" viewBox="0 0 30 30"><rect x="16.300" y="6" width="4.400" height="6" rx=".8" fill="#dedede" transform="rotate(22 18.500 16.500)"/><rect x="16.300" y="6" width="4.400" height="6" rx=".8" fill="#dedede" transform="rotate(67 18.500 16.500)"/><rect x="16.300" y="6" width="4.400" height="6" rx=".8" fill="#dedede" transform="rotate(112 18.500 16.500)"/><rect x="16.300" y="6" width="4.400" height="6" rx=".8" fill="#dedede" transform="rotate(157 18.500 16.500)"/><rect x="16.300" y="6" width="4.400" height="6" rx=".8" fill="#dedede" transform="rotate(202 18.500 16.500)"/><rect x="16.300" y="6" width="4.400" height="6" rx=".8" fill="#dedede" transform="rotate(247 18.500 16.500)"/><rect x="16.300" y="6" width="4.400" height="6" rx=".8" fill="#dedede" transform="rotate(292 18.500 16.500)"/><rect x="16.300" y="6" width="4.400" height="6" rx=".8" fill="#dedede" transform="rotate(337 18.500 16.500)"/><circle cx="18.500" cy="16.500" r="8" fill="#dedede"/><circle cx="18.500" cy="16.500" r="5.600" fill="#5b8cc4" stroke="#3f6ea6" stroke-width=".8"/><path d="M13 12l13 12" stroke="#3a3a2a" stroke-width="5.400" stroke-linecap="round"/><path d="M14.500 13.500L26 24" stroke="#eacb4e" stroke-width="3.600" stroke-linecap="round"/><path d="M24.500 24.500l2.500-2.500" stroke="#8a7a2a" stroke-width="1"/><path d="M2 7.500c1.500-4 6-5 9-3l-3.500 2.500.5 3 3 .5 2.500-3.500c1.500 2.500 1 5.500-1 7l1.500 1.500-2.500 2.500-2-2c-3.500 1-7-.5-8-4.500z" fill="#f6f6f6" stroke="#4a4a4a" stroke-width=".9" transform="rotate(-8 8 9)"/></svg><span class="t" style="left:1148.0px;top:151.0px;font-size:16px;line-height:21px;color:#f2f2f2;transform:scaleX(0.8778);transform-origin:0 50%;">Source</span><svg class="a" style="left:1116.0px;top:187.0px;overflow:visible;" width="29" height="29" viewBox="0 0 30 30"><path d="M2 20.500l6-13 15 5-7 13.500z" fill="#c0486a"/><path d="M3.500 15.500l5-10.500 15 4.500-6 11z" fill="#5b8cc4"/><path d="M5.500 10.500l3.500-7 14 4-4.500 8z" fill="#8cc069"/><path d="M19 13L27.500 3.500" stroke="#6f6b45" stroke-width="4.200" stroke-linecap="round"/><path d="M19 13L27.500 3.500" stroke="#8f8a5c" stroke-width="2.800" stroke-linecap="round"/><path d="M11 16.500l6.500-5 5 6.500-7.500 8.500-7-5z" fill="#9aa39b" stroke="#5f6a62" stroke-width="1"/><path d="M13 14.500l7 6" stroke="#66705f" stroke-width="1.800"/><path d="M10.500 19l6.500 5M12.500 17l6 5.500M14 24l4-6M11.500 22l4-5.500" stroke="#7d877f" stroke-width=".6"/></svg><span class="t" style="left:1151.0px;top:191.0px;font-size:16px;line-height:21px;color:#000;transform:scaleX(0.9476);transform-origin:0 50%;">Symbology</span><svg class="a" style="left:1113.0px;top:227.0px;overflow:visible;" width="29" height="29" viewBox="0 0 30 30"><rect x="1" y="2" width="28" height="20" fill="#8fa3c2"/><rect x="1" y="2" width="28" height="20" fill="#dfe6f0" opacity=".45"/><path d="M1 2h5v20H1z" fill="#eeeeee" opacity=".9"/><path d="M10 7c2-2 5-1 6 0s5-2 8 0 2 4 0 5-3 4-5 4-2-3-4-3-6-4-5-6z" fill="#7f98bb"/><rect x="1" y="20" width="28" height="6" fill="#3b3b3b"/><path d="M3 23h24" stroke="#e8e8e8" stroke-width="1" stroke-dasharray="2 1.500"/><rect x="0" y="25.500" width="30" height="1.500" fill="#dcdcdc"/></svg><span class="t" style="left:1148.0px;top:231.0px;font-size:16px;line-height:21px;color:#f2f2f2;transform:scaleX(0.8949);transform-origin:0 50%;">Transparency</span><svg class="a" style="left:1113.0px;top:267.0px;overflow:visible;" width="29" height="29" viewBox="0 0 30 30"><rect x="2" y="4" width="27" height="18" fill="#f4f4f4" stroke="#d0d0d0"/><path d="M1 2c-1.500 0-1.500 3 0 3v18c0 2 1 2 2 2" fill="none" stroke="#cfcfcf" stroke-width="1.500"/><path d="M6 6v14h21" stroke="#555" stroke-width="1" fill="none"/><path d="M7 18l4-7 4 5 4-6 4 5 4-3" stroke="#3f6ea6" stroke-width="1.200" fill="none"/></svg><span class="t" style="left:1148.0px;top:271.0px;font-size:16px;line-height:21px;color:#f2f2f2;transform:scaleX(0.9602);transform-origin:0 50%;">Histogram</span><svg class="a" style="left:1113.0px;top:307.0px;overflow:visible;" width="29" height="29" viewBox="0 0 30 30"><path d="M17 13L27 3" stroke="#a86a1c" stroke-width="4.600" stroke-linecap="round"/><path d="M17 13L27 3" stroke="#e09a3a" stroke-width="3" stroke-linecap="round"/><path d="M9.500 16.500l6.500-6 6 6.500-8.500 10-8.500-5z" fill="#e0a94a" stroke="#9a6a1c" stroke-width="1"/><path d="M12 14l7 7" stroke="#8a5a1a" stroke-width="1.800"/><path d="M8 20l6 5M10.500 18l6 5.500" stroke="#c48a2a" stroke-width=".8"/></svg><span class="t" style="left:1148.0px;top:311.0px;font-size:16px;line-height:21px;color:#f2f2f2;transform:scaleX(0.9211);transform-origin:0 50%;">Rendering</span><svg class="a" style="left:1113.0px;top:347.0px;overflow:visible;" width="29" height="29" viewBox="0 0 30 30"><circle cx="15" cy="15" r="13" fill="#f7f7f7" stroke="#555" stroke-width="1.500"/><circle cx="25.3" cy="15.0" r=".9" fill="#3c78c0"/><circle cx="23.9" cy="20.1" r=".9" fill="#3c78c0"/><circle cx="20.2" cy="23.9" r=".9" fill="#3c78c0"/><circle cx="15.0" cy="25.3" r=".9" fill="#3c78c0"/><circle cx="9.9" cy="23.9" r=".9" fill="#3c78c0"/><circle cx="6.1" cy="20.1" r=".9" fill="#3c78c0"/><circle cx="4.7" cy="15.0" r=".9" fill="#3c78c0"/><circle cx="6.1" cy="9.9" r=".9" fill="#3c78c0"/><circle cx="9.8" cy="6.1" r=".9" fill="#3c78c0"/><circle cx="15.0" cy="4.7" r=".9" fill="#3c78c0"/><circle cx="20.2" cy="6.1" r=".9" fill="#3c78c0"/><circle cx="23.9" cy="9.8" r=".9" fill="#3c78c0"/><path d="M15 6.500V15l5.500 4" stroke="#555" stroke-width="1.800" fill="none"/></svg><span class="t" style="left:1148.0px;top:351.0px;font-size:16px;line-height:21px;color:#f2f2f2;transform:scaleX(0.9574);transform-origin:0 50%;">Temporal</span><svg class="a" style="left:1113.0px;top:387.0px;overflow:visible;" width="29" height="29" viewBox="0 0 30 30"><path d="M5 1.5h13.5l5.5 5.5v20.5h-19z" fill="#fff" stroke="#9a9a9a" stroke-width="1.2" stroke-linejoin="round"/><path d="M18.5 1.5v5.5h5.5" fill="none" stroke="#9a9a9a" stroke-width="1.2" stroke-linejoin="round"/><path d="M8.500 10h10M8.500 13.500h10M8.500 17h8M8.500 20.500h8M8.500 24h10" stroke="#7a7a7a" stroke-width="1.100"/><path d="M16 19l9.500-13 3 2-9.500 13-3.500 1.500z" fill="#e8703a" stroke="#b84a1c" stroke-width=".8"/></svg><span class="t" style="left:1148.0px;top:391.0px;font-size:16px;line-height:21px;color:#f2f2f2;transform:scaleX(0.9594);transform-origin:0 50%;">Metadata</span><svg class="a" style="left:1113.0px;top:427.0px;overflow:visible;" width="29" height="29" viewBox="0 0 30 30"><rect x="3" y="3.500" width="6" height="6" fill="#f5c21b"/><rect x="3" y="12" width="6" height="6" fill="#f0531c"/><rect x="3" y="20.500" width="6" height="6" fill="#27a25a"/><path d="M12 6.500h9M12 15h13M12 23.500h7" stroke="#8a8a8a" stroke-width="1.700"/></svg><span class="t" style="left:1148.0px;top:431.0px;font-size:16px;line-height:21px;color:#f2f2f2;transform:scaleX(0.9179);transform-origin:0 50%;">Legend</span><svg class="a" style="left:1113.0px;top:467.0px;overflow:visible;" width="29" height="29" viewBox="0 0 30 30"><path d="M15 12v5M6 19v-2h18v2" stroke="#e0e0e0" stroke-width="1.200" fill="none"/><rect x="10.5" y="1.5" width="9" height="6.500" fill="#5b8cc4" stroke="#cfd8e6" stroke-width="1.200"/><rect x="10.0" y="9.0" width="10" height="2.500" fill="#d6d6d6"/><rect x="1.5" y="17" width="9" height="6.500" fill="#5b8cc4" stroke="#cfd8e6" stroke-width="1.200"/><rect x="1.0" y="24.5" width="10" height="2.500" fill="#d6d6d6"/><rect x="19" y="18" width="9" height="6.500" fill="#5b8cc4" stroke="#cfd8e6" stroke-width="1.200"/><rect x="18.5" y="25.5" width="10" height="2.500" fill="#d6d6d6"/></svg><span class="t" style="left:1148.0px;top:471.0px;font-size:16px;line-height:21px;color:#f2f2f2;transform:scaleX(0.8627);transform-origin:0 50%;">QGIS Server</span><div class="a" style="left:1265px;top:81px;width:619px;height:625px;border:1px solid #dcdcdc;box-sizing:border-box;"></div><div class="a" style="left:1266px;top:74px;width:130px;height:16px;background:#f0f0f0;"></div><svg class="a" style="left:1267px;top:77px;" width="12" height="10" viewBox="0 0 12 10"><path d="M0.5 1h11l-5.5 8z" fill="#222"/></svg><span class="t" style="left:1287.0px;top:73.0px;font-size:13.5px;line-height:18px;color:#000;font-weight:bold;transform:scaleX(0.9736);transform-origin:0 50%;">Band Rendering</span><span class="t" style="left:1277.0px;top:103.5px;font-size:13.5px;line-height:18px;color:#000;transform:scaleX(0.9383);transform-origin:0 50%;">Render type</span><div class="a" style="left:1353px;top:102px;width:166px;height:21px;background:#e1e1e1;border:1px solid #adadad;box-sizing:border-box;"></div><span class="t" style="left:1358.0px;top:104.0px;font-size:13.5px;line-height:18px;color:#000;transform:scaleX(0.9400);transform-origin:0 50%;">Singleband pseudocolor</span><svg class="a" style="left:1501px;top:108.5px;" width="12" height="9" viewBox="0 0 12 9"><path d="M1.5 2l4.5 4.5 4.5-4.5" stroke="#333" stroke-width="1.1" fill="none"/></svg><span class="t" style="left:1280.0px;top:135.5px;font-size:13.5px;line-height:18px;color:#000;transform:scaleX(0.9400);transform-origin:0 50%;">Band</span><div class="a" style="left:1429px;top:133px;width:440px;height:22px;background:#e1e1e1;border:1px solid #adadad;box-sizing:border-box;"></div><span class="t" style="left:1434.0px;top:135.5px;font-size:13.5px;line-height:18px;color:#000;transform:scaleX(0.9400);transform-origin:0 50%;">Band 1</span><svg class="a" style="left:1851px;top:140.0px;" width="12" height="9" viewBox="0 0 12 9"><path d="M1.5 2l4.5 4.5 4.5-4.5" stroke="#333" stroke-width="1.1" fill="none"/></svg><span class="t" style="left:1280.0px;top:165.5px;font-size:13.5px;line-height:18px;color:#000;transform:scaleX(0.9400);transform-origin:0 50%;">Min</span><div class="a" style="left:1429px;top:162px;width:142px;height:24px;background:#fff;border:1px solid #7a7a7a;box-sizing:border-box;"></div><span class="t" style="left:1433.0px;top:165.5px;font-size:13.5px;line-height:18px;color:#000;transform:scaleX(0.9400);transform-origin:0 50%;">0</span><span class="t" style="left:1578.0px;top:165.5px;font-size:13.5px;line-height:18px;color:#000;transform:scaleX(0.9400);transform-origin:0 50%;">Max</span><div class="a" style="left:1727px;top:162px;width:142px;height:24px;background:#fff;border:1px solid #7a7a7a;box-sizing:border-box;"></div><span class="t" style="left:1731.0px;top:165.5px;font-size:13.5px;line-height:18px;color:#000;transform:scaleX(0.9400);transform-origin:0 50%;">0.4</span><svg class="a" style="left:1284px;top:196px;" width="10" height="13" viewBox="0 0 10 13"><path d="M1 0.5v12l8-6z" fill="#222"/></svg><span class="t" style="left:1302.5px;top:193.5px;font-size:13.5px;line-height:18px;color:#000;font-weight:bold;transform:scaleX(1.0269);transform-origin:0 50%;">Min / Max Value Settings</span><span class="t" style="left:1280.0px;top:225.0px;font-size:13.5px;line-height:18px;color:#000;transform:scaleX(0.9400);transform-origin:0 50%;">Interpolation</span><div class="a" style="left:1481px;top:222px;width:388px;height:22px;background:#e1e1e1;border:1px solid #adadad;box-sizing:border-box;"></div><span class="t" style="left:1486.0px;top:224.5px;font-size:13.5px;line-height:18px;color:#000;transform:scaleX(0.9400);transform-origin:0 50%;">Discrete</span><svg class="a" style="left:1851px;top:229.0px;" width="12" height="9" viewBox="0 0 12 9"><path d="M1.5 2l4.5 4.5 4.5-4.5" stroke="#333" stroke-width="1.1" fill="none"/></svg><span class="t" style="left:1280.0px;top:255.0px;font-size:13.5px;line-height:18px;color:#000;transform:scaleX(0.9400);transform-origin:0 50%;">Color ramp</span><div class="a" style="left:1482px;top:252px;width:386px;height:22px;background:#e1e1e1;border:1px solid #adadad;box-sizing:border-box;"></div><svg class="a" style="left:1486px;top:255px;" width="364" height="16" viewBox="0 0 364 16"><defs><linearGradient id="rg" x1="0" x2="1" y1="0" y2="0"><stop offset="0" stop-color="#f7fbff" stop-opacity="0"/><stop offset="0.06" stop-color="#eaf3fb" stop-opacity="0.25"/><stop offset="0.25" stop-color="#9ecae1" stop-opacity="1"/><stop offset="0.5" stop-color="#519ccd"/><stop offset="0.75" stop-color="#1d6ab1"/><stop offset="1" stop-color="#08306b"/></linearGradient></defs><rect width="364" height="16" fill="#fff"/><rect x="0" y="0" width="4" height="4" fill="#8a8a8a"/><rect x="0" y="8" width="4" height="4" fill="#8a8a8a"/><rect x="4" y="4" width="4" height="4" fill="#8a8a8a"/><rect x="4" y="12" width="4" height="4" fill="#8a8a8a"/><rect x="8" y="0" width="4" height="4" fill="#8a8a8a"/><rect x="8" y="8" width="4" height="4" fill="#8a8a8a"/><rect x="12" y="4" width="4" height="4" fill="#8a8a8a"/><rect x="12" y="12" width="4" height="4" fill="#8a8a8a"/><rect x="16" y="0" width="4" height="4" fill="#8a8a8a"/><rect x="16" y="8" width="4" height="4" fill="#8a8a8a"/><rect x="20" y="4" width="4" height="4" fill="#8a8a8a"/><rect x="20" y="12" width="4" height="4" fill="#8a8a8a"/><rect x="24" y="0" width="4" height="4" fill="#8a8a8a"/><rect x="24" y="8" width="4" height="4" fill="#8a8a8a"/><rect x="28" y="4" width="4" height="4" fill="#8a8a8a"/><rect x="28" y="12" width="4" height="4" fill="#8a8a8a"/><rect x="32" y="0" width="4" height="4" fill="#8a8a8a"/><rect x="32" y="8" width="4" height="4" fill="#8a8a8a"/><rect x="36" y="4" width="4" height="4" fill="#8a8a8a"/><rect x="36" y="12" width="4" height="4" fill="#8a8a8a"/><rect x="40" y="0" width="4" height="4" fill="#8a8a8a"/><rect x="40" y="8" width="4" height="4" fill="#8a8a8a"/><rect x="44" y="4" width="4" height="4" fill="#8a8a8a"/><rect x="44" y="12" width="4" height="4" fill="#8a8a8a"/><rect x="48" y="0" width="4" height="4" fill="#8a8a8a"/><rect x="48" y="8" width="4" height="4" fill="#8a8a8a"/><rect x="52" y="4" width="4" height="4" fill="#8a8a8a"/><rect x="52" y="12" width="4" height="4" fill="#8a8a8a"/><rect x="56" y="0" width="4" height="4" fill="#8a8a8a"/><rect x="56" y="8" width="4" height="4" fill="#8a8a8a"/><rect x="60" y="4" width="4" height="4" fill="#8a8a8a"/><rect x="60" y="12" width="4" height="4" fill="#8a8a8a"/><rect x="64" y="0" width="4" height="4" fill="#8a8a8a"/><rect x="64" y="8" width="4" height="4" fill="#8a8a8a"/><rect x="68" y="4" width="4" height="4" fill="#8a8a8a"/><rect x="68" y="12" width="4" height="4" fill="#8a8a8a"/><rect x="72" y="0" width="4" height="4" fill="#8a8a8a"/><rect x="72" y="8" width="4" height="4" fill="#8a8a8a"/><rect x="76" y="4" width="4" height="4" fill="#8a8a8a"/><rect x="76" y="12" width="4" height="4" fill="#8a8a8a"/><rect x="80" y="0" width="4" height="4" fill="#8a8a8a"/><rect x="80" y="8" width="4" height="4" fill="#8a8a8a"/><rect x="84" y="4" width="4" height="4" fill="#8a8a8a"/><rect x="84" y="12" width="4" height="4" fill="#8a8a8a"/><rect x="88" y="0" width="4" height="4" fill="#8a8a8a"/><rect x="88" y="8" width="4" height="4" fill="#8a8a8a"/><rect x="92" y="4" width="4" height="4" fill="#8a8a8a"/><rect x="92" y="12" width="4" height="4" fill="#8a8a8a"/><rect width="364" height="16" fill="url(#rg)"/></svg><div class="a" style="left:1851px;top:253px;width:1px;height:20px;background:#adadad;"></div><svg class="a" style="left:1853px;top:259px;" width="12" height="8" viewBox="0 0 12 8"><path d="M1 1h10l-5 6z" fill="#000"/></svg><span class="t" style="left:1280.0px;top:285.5px;font-size:13.5px;line-height:18px;color:#000;transform:scaleX(0.9400);transform-origin:0 50%;">Label unit suffix</span><div class="a" style="left:1481px;top:282px;width:388px;height:24px;background:#fff;border:1px solid #7a7a7a;box-sizing:border-box;"></div><span class="t" style="left:1280.0px;top:316.0px;font-size:13.5px;line-height:18px;color:#000;transform:scaleX(0.9400);transform-origin:0 50%;">Label precision</span><div class="a" style="left:1481px;top:313px;width:388px;height:22px;background:#fff;border:1px solid #7a7a7a;box-sizing:border-box;"></div><span class="t" style="left:1485.0px;top:315.5px;font-size:13.5px;line-height:18px;color:#000;transform:scaleX(0.9400);transform-origin:0 50%;">1</span><svg class="a" style="left:1825px;top:318.5px;" width="18" height="12" viewBox="0 0 18 12"><path d="M1 6l5-5h11v10h-11z" fill="#8f8f8f"/><path d="M8.5 3.5l5 5M13.5 3.5l-5 5" stroke="#fff" stroke-width="1.4"/></svg><svg class="a" style="left:1853px;top:314px;" width="14" height="20" viewBox="0 0 14 20"><rect x="0.5" y="0.5" width="13" height="8.5" fill="#f0f0f0" stroke="#c4c4c4"/><rect x="0.5" y="10.5" width="13" height="8.5" fill="#f0f0f0" stroke="#c4c4c4"/><path d="M3.5 7.0l3.5-4 3.5 4z" fill="#000"/><path d="M3.5 13.0l3.5 4 3.5-4z" fill="#000"/></svg><div class="a" style="left:1280px;top:342px;width:589px;height:258px;background:#fff;border:1px solid #828790;box-sizing:border-box;"></div><div class="a" style="left:1405px;top:344px;width:1px;height:29px;background:#e5e5e5;"></div><div class="a" style="left:1484px;top:344px;width:1px;height:29px;background:#e5e5e5;"></div><span class="t" style="left:1286.0px;top:349.0px;font-size:15.5px;line-height:20px;color:#111;transform:scaleX(0.9852);transform-origin:0 50%;">Value &lt;=</span><span class="t" style="left:1411.0px;top:349.0px;font-size:15.5px;line-height:20px;color:#111;transform:scaleX(0.9720);transform-origin:0 50%;">Color</span><span class="t" style="left:1490.0px;top:349.0px;font-size:15.5px;line-height:20px;color:#111;transform:scaleX(0.9493);transform-origin:0 50%;">Label</span><div class="a" style="left:1306px;top:373px;width:99px;height:57px;background:#e5f3ff;"></div><div class="a" style="left:1485px;top:373px;width:362px;height:57px;background:#e5f3ff;"></div><span class="t" style="left:1309.0px;top:391.5px;font-size:15.5px;line-height:20px;color:#000;transform:scaleX(0.9300);transform-origin:0 50%;">0.01</span><svg class="a" style="left:1418px;top:374px;" width="54" height="54" viewBox="0 0 54 54"><defs><clipPath id="rc"><rect width="54" height="54" rx="8"/></clipPath></defs><g clip-path="url(#rc)"><rect width="54" height="54" fill="#fff"/><rect x="0.0" y="0.0" width="4.5" height="4.5" fill="#d4d4d4"/><rect x="0.0" y="9.0" width="4.5" height="4.5" fill="#d4d4d4"/><rect x="0.0" y="18.0" width="4.5" height="4.5" fill="#d4d4d4"/><rect x="0.0" y="27.0" width="4.5" height="4.5" fill="#d4d4d4"/><rect x="0.0" y="36.0" width="4.5" height="4.5" fill="#d4d4d4"/><rect x="0.0" y="45.0" width="4.5" height="4.5" fill="#d4d4d4"/><rect x="4.5" y="4.5" width="4.5" height="4.5" fill="#d4d4d4"/><rect x="4.5" y="13.5" width="4.5" height="4.5" fill="#d4d4d4"/><rect x="4.5" y="22.5" width="4.5" height="4.5" fill="#d4d4d4"/><rect x="4.5" y="31.5" width="4.5" height="4.5" fill="#d4d4d4"/><rect x="4.5" y="40.5" width="4.5" height="4.5" fill="#d4d4d4"/><rect x="4.5" y="49.5" width="4.5" height="4.5" fill="#d4d4d4"/><rect x="9.0" y="0.0" width="4.5" height="4.5" fill="#d4d4d4"/><rect x="9.0" y="9.0" width="4.5" height="4.5" fill="#d4d4d4"/><rect x="9.0" y="18.0" width="4.5" height="4.5" fill="#d4d4d4"/><rect x="9.0" y="27.0" width="4.5" height="4.5" fill="#d4d4d4"/><rect x="9.0" y="36.0" width="4.5" height="4.5" fill="#d4d4d4"/><rect x="9.0" y="45.0" width="4.5" height="4.5" fill="#d4d4d4"/><rect x="13.5" y="4.5" width="4.5" height="4.5" fill="#d4d4d4"/><rect x="13.5" y="13.5" width="4.5" height="4.5" fill="#d4d4d4"/><rect x="13.5" y="22.5" width="4.5" height="4.5" fill="#d4d4d4"/><rect x="13.5" y="31.5" width="4.5" height="4.5" fill="#d4d4d4"/><rect x="13.5" y="40.5" width="4.5" height="4.5" fill="#d4d4d4"/><rect x="13.5" y="49.5" width="4.5" height="4.5" fill="#d4d4d4"/><rect x="18.0" y="0.0" width="4.5" height="4.5" fill="#d4d4d4"/><rect x="18.0" y="9.0" width="4.5" height="4.5" fill="#d4d4d4"/><rect x="18.0" y="18.0" width="4.5" height="4.5" fill="#d4d4d4"/><rect x="18.0" y="27.0" width="4.5" height="4.5" fill="#d4d4d4"/><rect x="18.0" y="36.0" width="4.5" height="4.5" fill="#d4d4d4"/><rect x="18.0" y="45.0" width="4.5" height="4.5" fill="#d4d4d4"/><rect x="22.5" y="4.5" width="4.5" height="4.5" fill="#d4d4d4"/><rect x="22.5" y="13.5" width="4.5" height="4.5" fill="#d4d4d4"/><rect x="22.5" y="22.5" width="4.5" height="4.5" fill="#d4d4d4"/><rect x="22.5" y="31.5" width="4.5" height="4.5" fill="#d4d4d4"/><rect x="22.5" y="40.5" width="4.5" height="4.5" fill="#d4d4d4"/><rect x="22.5" y="49.5" width="4.5" height="4.5" fill="#d4d4d4"/><rect x="27.0" y="0.0" width="4.5" height="4.5" fill="#d4d4d4"/><rect x="27.0" y="9.0" width="4.5" height="4.5" fill="#d4d4d4"/><rect x="27.0" y="18.0" width="4.5" height="4.5" fill="#d4d4d4"/><rect x="27.0" y="27.0" width="4.5" height="4.5" fill="#d4d4d4"/><rect x="27.0" y="36.0" width="4.5" height="4.5" fill="#d4d4d4"/><rect x="27.0" y="45.0" width="4.5" height="4.5" fill="#d4d4d4"/><rect x="31.5" y="4.5" width="4.5" height="4.5" fill="#d4d4d4"/><rect x="31.5" y="13.5" width="4.5" height="4.5" fill="#d4d4d4"/><rect x="31.5" y="22.5" width="4.5" height="4.5" fill="#d4d4d4"/><rect x="31.5" y="31.5" width="4.5" height="4.5" fill="#d4d4d4"/><rect x="31.5" y="40.5" width="4.5" height="4.5" fill="#d4d4d4"/><rect x="31.5" y="49.5" width="4.5" height="4.5" fill="#d4d4d4"/><rect x="36.0" y="0.0" width="4.5" height="4.5" fill="#d4d4d4"/><rect x="36.0" y="9.0" width="4.5" height="4.5" fill="#d4d4d4"/><rect x="36.0" y="18.0" width="4.5" height="4.5" fill="#d4d4d4"/><rect x="36.0" y="27.0" width="4.5" height="4.5" fill="#d4d4d4"/><rect x="36.0" y="36.0" width="4.5" height="4.5" fill="#d4d4d4"/><rect x="36.0" y="45.0" width="4.5" height="4.5" fill="#d4d4d4"/><rect x="40.5" y="4.5" width="4.5" height="4.5" fill="#d4d4d4"/><rect x="40.5" y="13.5" width="4.5" height="4.5" fill="#d4d4d4"/><rect x="40.5" y="22.5" width="4.5" height="4.5" fill="#d4d4d4"/><rect x="40.5" y="31.5" width="4.5" height="4.5" fill="#d4d4d4"/><rect x="40.5" y="40.5" width="4.5" height="4.5" fill="#d4d4d4"/><rect x="40.5" y="49.5" width="4.5" height="4.5" fill="#d4d4d4"/><rect x="45.0" y="0.0" width="4.5" height="4.5" fill="#d4d4d4"/><rect x="45.0" y="9.0" width="4.5" height="4.5" fill="#d4d4d4"/><rect x="45.0" y="18.0" width="4.5" height="4.5" fill="#d4d4d4"/><rect x="45.0" y="27.0" width="4.5" height="4.5" fill="#d4d4d4"/><rect x="45.0" y="36.0" width="4.5" height="4.5" fill="#d4d4d4"/><rect x="45.0" y="45.0" width="4.5" height="4.5" fill="#d4d4d4"/><rect x="49.5" y="4.5" width="4.5" height="4.5" fill="#d4d4d4"/><rect x="49.5" y="13.5" width="4.5" height="4.5" fill="#d4d4d4"/><rect x="49.5" y="22.5" width="4.5" height="4.5" fill="#d4d4d4"/><rect x="49.5" y="31.5" width="4.5" height="4.5" fill="#d4d4d4"/><rect x="49.5" y="40.5" width="4.5" height="4.5" fill="#d4d4d4"/><rect x="49.5" y="49.5" width="4.5" height="4.5" fill="#d4d4d4"/></g></svg><span class="t" style="left:1489.0px;top:391.5px;font-size:15px;line-height:20px;color:#a3a3a3;transform:scaleX(0.9300);transform-origin:0 50%;">&lt;= 0.0</span><span class="t" style="left:1309.0px;top:448.5px;font-size:15.5px;line-height:20px;color:#000;transform:scaleX(0.9300);transform-origin:0 50%;">0.1</span><div class="a" style="left:1418px;top:431px;width:54px;height:54px;background:#9ecae1;border-radius:8px;"></div><span class="t" style="left:1489.0px;top:448.5px;font-size:15px;line-height:20px;color:#a3a3a3;transform:scaleX(0.9300);transform-origin:0 50%;">0.0 - 0.1</span><span class="t" style="left:1309.0px;top:505.5px;font-size:15.5px;line-height:20px;color:#000;transform:scaleX(0.9300);transform-origin:0 50%;">0.2</span><div class="a" style="left:1418px;top:488px;width:54px;height:54px;background:#519ccd;border-radius:8px;"></div><span class="t" style="left:1489.0px;top:505.5px;font-size:15px;line-height:20px;color:#a3a3a3;transform:scaleX(0.9300);transform-origin:0 50%;">0.1 - 0.2</span><span class="t" style="left:1309.0px;top:562.5px;font-size:15.5px;line-height:20px;color:#000;transform:scaleX(0.9300);transform-origin:0 50%;">0.3</span><div class="a" style="left:1418px;top:545px;width:54px;height:54px;background:#1d6ab1;border-radius:8px;"></div><span class="t" style="left:1489.0px;top:562.5px;font-size:15px;line-height:20px;color:#a3a3a3;transform:scaleX(0.9300);transform-origin:0 50%;">0.2 - 0.3</span><div class="a" style="left:1847px;top:343px;width:21px;height:256px;background:#f0f0f0;"></div><div class="a" style="left:1849px;top:365px;width:18px;height:127px;background:#cdcdcd;"></div><svg class="a" style="left:1852px;top:349px;" width="12" height="9" viewBox="0 0 12 9"><path d="M1.5 7l4.5-4.5 4.5 4.5" stroke="#444" stroke-width="1.5" fill="none"/></svg><svg class="a" style="left:1852px;top:584px;" width="12" height="9" viewBox="0 0 12 9"><path d="M1.5 2l4.5 4.5 4.5-4.5" stroke="#444" stroke-width="1.5" fill="none"/></svg><span class="t" style="left:1280.0px;top:609.5px;font-size:13.5px;line-height:18px;color:#000;transform:scaleX(0.9400);transform-origin:0 50%;">Mode</span><div class="a" style="left:1318px;top:608px;width:108px;height:21px;background:#e1e1e1;border:1px solid #adadad;box-sizing:border-box;"></div><span class="t" style="left:1323.0px;top:610.0px;font-size:13.5px;line-height:18px;color:#000;transform:scaleX(0.9400);transform-origin:0 50%;">Equal Interval</span><svg class="a" style="left:1408px;top:614.5px;" width="12" height="9" viewBox="0 0 12 9"><path d="M1.5 2l4.5 4.5 4.5-4.5" stroke="#333" stroke-width="1.1" fill="none"/></svg><span class="t" style="left:1750.0px;top:609.5px;font-size:13.5px;line-height:18px;color:#000;transform:scaleX(0.9400);transform-origin:0 50%;">Classes</span><div class="a" style="left:1800px;top:608px;width:69px;height:21px;background:#fff;border:1px solid #7a7a7a;box-sizing:border-box;"></div><span class="t" style="left:1804.0px;top:610.0px;font-size:13.5px;line-height:18px;color:#000;transform:scaleX(0.9400);transform-origin:0 50%;">5</span><svg class="a" style="left:1825px;top:612.5px;" width="18" height="12" viewBox="0 0 18 12"><path d="M1 6l5-5h11v10h-11z" fill="#8f8f8f"/><path d="M8.5 3.5l5 5M13.5 3.5l-5 5" stroke="#fff" stroke-width="1.4"/></svg><svg class="a" style="left:1853px;top:609px;" width="14" height="19" viewBox="0 0 14 19"><rect x="0.5" y="0.5" width="13" height="8.0" fill="#f0f0f0" stroke="#c4c4c4"/><rect x="0.5" y="10.0" width="13" height="8.0" fill="#f0f0f0" stroke="#c4c4c4"/><path d="M3.5 6.5l3.5-4 3.5 4z" fill="#000"/><path d="M3.5 12.5l3.5 4 3.5-4z" fill="#000"/></svg><div class="a" style="left:1281px;top:637px;width:91px;height:27px;background:#e1e1e1;border:1px solid #adadad;box-sizing:border-box;"></div><span class="t" style="left:1304.3px;top:642.0px;font-size:13.5px;line-height:18px;color:#000;transform:scaleX(0.9400);transform-origin:0 50%;">Classify</span><div class="a" style="left:1381px;top:637px;width:31px;height:27px;background:#e1e1e1;border:1px solid #adadad;box-sizing:border-box;"></div><svg class="a" style="left:1386.5px;top:640.0px;overflow:visible;" width="20" height="20" viewBox="0 0 30 30"><path d="M11 2.500h8v8.500h8.500v8H19v8.500h-8V19H2.500v-8H11z" fill="#3f8f4a" stroke="#2f7a3a" stroke-width="1" stroke-linejoin="round"/><path d="M13.200 4.800h3.600v8.400h8.400v3.600h-8.400v8.400h-3.600v-8.400H4.800v-3.600h8.400z" fill="none" stroke="#e6f4e6" stroke-width="1.400"/></svg><div class="a" style="left:1421px;top:637px;width:31px;height:27px;background:#e1e1e1;border:1px solid #adadad;box-sizing:border-box;"></div><svg class="a" style="left:1426.5px;top:640.0px;overflow:visible;" width="20" height="20" viewBox="0 0 30 30"><rect x="1.500" y="9.500" width="27" height="11.500" rx="1.500" fill="#ee3a3a" stroke="#f07a7a" stroke-width="1"/><rect x="4" y="12" width="22" height="6.500" fill="none" stroke="#fdeaea" stroke-width="1.400"/></svg><div class="a" style="left:1461px;top:637px;width:31px;height:27px;background:#e1e1e1;border:1px solid #adadad;box-sizing:border-box;"></div><svg class="a" style="left:1466.5px;top:640.0px;overflow:visible;" width="20" height="20" viewBox="0 0 30 30"><path d="M27 11c-1-5-6-7.500-10.500-5l-1.500-3-5 8 9.500.5-1.500-3c2.500-1 5 .5 5.500 3z" fill="#8fc79a" stroke="#7ab886" stroke-width=".8"/><path d="M3 19c1 5 6 7.500 10.500 5l1.500 3 5-8-9.500-.5 1.500 3c-2.500 1-5-.5-5.500-3z" fill="#8fc79a" stroke="#7ab886" stroke-width=".8"/><path d="M9 11c-4 1-6 4-6 8M21 19c4-1 6-4 6-8" stroke="#8fc79a" stroke-width="3.500" fill="none"/></svg><div class="a" style="left:1501px;top:637px;width:31px;height:27px;background:#e1e1e1;border:1px solid #adadad;box-sizing:border-box;"></div><svg class="a" style="left:1506.5px;top:640.0px;overflow:visible;" width="20" height="20" viewBox="0 0 30 30"><path d="M1.7 4.5h9.300v2.800h16v19.700H1.700z" fill="#f4c93a" stroke="#cfa41b" stroke-width="1.200" stroke-linejoin="round"/><path d="M1.700 27V6" stroke="#cfa41b" stroke-width="1.2"/><path d="M1.700 27L6 10.800h24.200L26 27z" fill="#fddb52" stroke="#cfa41b" stroke-width="1.200" stroke-linejoin="round"/></svg><div class="a" style="left:1541px;top:637px;width:31px;height:27px;background:#e1e1e1;border:1px solid #adadad;box-sizing:border-box;"></div><svg class="a" style="left:1546.5px;top:640.0px;overflow:visible;" width="20" height="20" viewBox="0 0 30 30"><rect x="3" y="1" width="25.500" height="28" rx="3" fill="#6c98ca" stroke="#4773a8" stroke-width="1.3"/><rect x="7.500" y="2.500" width="17" height="10.500" fill="#f4f4f4" stroke="#d0d0d0" stroke-width=".6"/><path d="M9.500 5.500h13M9.500 8h13M9.500 10.500h13" stroke="#8a8a8a" stroke-width="1.4"/><rect x="9" y="18.500" width="14" height="9.500" fill="#ededed" stroke="#9aa7b8" stroke-width=".8"/><rect x="11" y="20.500" width="3.600" height="6" fill="#35588a"/><rect x="17" y="17.500" width="13" height="12.500" rx="2.500" fill="#4f9a5a"/><path d="M20 27l7-7" stroke="#fff" stroke-width="2.600" stroke-linecap="round"/></svg><div class="a" style="left:1759px;top:637px;width:110px;height:27px;background:#cccccc;border:1px solid #bfbfbf;box-sizing:border-box;"></div><span class="t" style="left:1762.9px;top:642.0px;font-size:13.5px;line-height:18px;color:#838383;transform:scaleX(0.9400);transform-origin:0 50%;">Legend Settings...</span><svg class="a" style="left:1280px;top:674px;" width="16" height="16" viewBox="0 0 16 16"><rect x="0.5" y="0.5" width="15" height="15" fill="#fff" stroke="#c8c8c8"/></svg><span class="t" style="left:1302.5px;top:673.5px;font-size:13.5px;line-height:18px;color:#6f6f6f;transform:scaleX(0.9400);transform-origin:0 50%;">Clip out of range values</span><div class="a" style="left:1265px;top:722px;width:619px;height:177px;border:1px solid #dcdcdc;box-sizing:border-box;"></div><div class="a" style="left:1266px;top:715px;width:134px;height:16px;background:#f0f0f0;"></div><svg class="a" style="left:1267px;top:718.5px;" width="12" height="10" viewBox="0 0 12 10"><path d="M0.5 1h11l-5.5 8z" fill="#222"/></svg><span class="t" style="left:1287.0px;top:714.5px;font-size:13.5px;line-height:18px;color:#000;font-weight:bold;transform:scaleX(1.0045);transform-origin:0 50%;">Layer Rendering</span><span class="t" style="left:1277.0px;top:746.5px;font-size:13.5px;line-height:18px;color:#000;transform:scaleX(0.9400);transform-origin:0 50%;">Blending mode</span><div class="a" style="left:1368px;top:745px;width:229px;height:21px;background:#e1e1e1;border:1px solid #adadad;box-sizing:border-box;"></div><span class="t" style="left:1373.0px;top:747.0px;font-size:13.5px;line-height:18px;color:#000;transform:scaleX(0.9400);transform-origin:0 50%;">Normal</span><svg class="a" style="left:1579px;top:751.5px;" width="12" height="9" viewBox="0 0 12 9"><path d="M1.5 2l4.5 4.5 4.5-4.5" stroke="#333" stroke-width="1.1" fill="none"/></svg><div class="a" style="left:1802px;top:743px;width:70px;height:24px;background:#e1e1e1;border:1px solid #adadad;box-sizing:border-box;"></div><svg class="a" style="left:1806.0px;top:747.0px;overflow:visible;" width="16" height="16" viewBox="0 0 30 30"><path d="M2 11L12 2.500v5.500c9 0 14 4 14 10.500S21 28 17 28c3-1.500 4-4 3.500-6.500-.5-3-3-5-8.500-5v5.500z" fill="#f08a3a" stroke="#d06a1c" stroke-width="1"/></svg><span class="t" style="left:1827.0px;top:746.5px;font-size:13.5px;line-height:18px;color:#000;transform:scaleX(0.9400);transform-origin:0 50%;">Reset</span><span class="t" style="left:1277.0px;top:777.5px;font-size:13.5px;line-height:18px;color:#000;transform:scaleX(0.9400);transform-origin:0 50%;">Brightness</span><div class="a" style="left:1368px;top:784px;width:124px;height:3px;background:#e7eaea;border:1px solid #d6d6d6;box-sizing:border-box;"></div><div class="a" style="left:1424px;top:775px;width:12px;height:21px;background:#0078d7;"></div><div class="a" style="left:1500px;top:775px;width:88px;height:22px;background:#fff;border:1px solid #7a7a7a;box-sizing:border-box;"></div><span class="t" style="left:1504.0px;top:777.5px;font-size:13.5px;line-height:18px;color:#000;transform:scaleX(0.9400);transform-origin:0 50%;">0</span><svg class="a" style="left:1572px;top:776px;" width="15" height="20" viewBox="0 0 15 20"><rect x="0.5" y="0.5" width="14" height="8.5" fill="#f0f0f0" stroke="#c4c4c4"/><rect x="0.5" y="10.5" width="14" height="8.5" fill="#f0f0f0" stroke="#c4c4c4"/><path d="M4.0 7.0l3.5-4 3.5 4z" fill="#000"/><path d="M4.0 13.0l3.5 4 3.5-4z" fill="#000"/></svg><div class="a" style="left:1594px;top:775px;width:1px;height:80px;background:#c8c8c8;"></div><span class="t" style="left:1604.0px;top:777.5px;font-size:13.5px;line-height:18px;color:#000;transform:scaleX(0.9400);transform-origin:0 50%;">Contrast</span><div class="a" style="left:1670px;top:784px;width:123px;height:3px;background:#e7eaea;border:1px solid #d6d6d6;box-sizing:border-box;"></div><div class="a" style="left:1726px;top:775px;width:12px;height:21px;background:#0078d7;"></div><div class="a" style="left:1801px;top:775px;width:71px;height:22px;background:#fff;border:1px solid #7a7a7a;box-sizing:border-box;"></div><span class="t" style="left:1805.0px;top:777.5px;font-size:13.5px;line-height:18px;color:#000;transform:scaleX(0.9400);transform-origin:0 50%;">0</span><svg class="a" style="left:1856px;top:776px;" width="15" height="20" viewBox="0 0 15 20"><rect x="0.5" y="0.5" width="14" height="8.5" fill="#f0f0f0" stroke="#c4c4c4"/><rect x="0.5" y="10.5" width="14" height="8.5" fill="#f0f0f0" stroke="#c4c4c4"/><path d="M4.0 7.0l3.5-4 3.5 4z" fill="#000"/><path d="M4.0 13.0l3.5 4 3.5-4z" fill="#000"/></svg><span class="t" style="left:1277.0px;top:806.5px;font-size:13.5px;line-height:18px;color:#000;transform:scaleX(0.9400);transform-origin:0 50%;">Gamma</span><div class="a" style="left:1368px;top:813px;width:124px;height:3px;background:#e7eaea;border:1px solid #d6d6d6;box-sizing:border-box;"></div><div class="a" style="left:1378px;top:804px;width:12px;height:21px;background:#0078d7;"></div><div class="a" style="left:1500px;top:804px;width:88px;height:22px;background:#fff;border:1px solid #7a7a7a;box-sizing:border-box;"></div><span class="t" style="left:1504.0px;top:806.5px;font-size:13.5px;line-height:18px;color:#000;transform:scaleX(0.9400);transform-origin:0 50%;">1.00</span><svg class="a" style="left:1572px;top:805px;" width="15" height="20" viewBox="0 0 15 20"><rect x="0.5" y="0.5" width="14" height="8.5" fill="#f0f0f0" stroke="#c4c4c4"/><rect x="0.5" y="10.5" width="14" height="8.5" fill="#f0f0f0" stroke="#c4c4c4"/><path d="M4.0 7.0l3.5-4 3.5 4z" fill="#000"/><path d="M4.0 13.0l3.5 4 3.5-4z" fill="#000"/></svg><span class="t" style="left:1604.0px;top:806.5px;font-size:13.5px;line-height:18px;color:#000;transform:scaleX(0.9400);transform-origin:0 50%;">Saturation</span><div class="a" style="left:1670px;top:813px;width:123px;height:3px;background:#e7eaea;border:1px solid #d6d6d6;box-sizing:border-box;"></div><div class="a" style="left:1726px;top:804px;width:12px;height:21px;background:#0078d7;"></div><div class="a" style="left:1801px;top:804px;width:71px;height:22px;background:#fff;border:1px solid #7a7a7a;box-sizing:border-box;"></div><span class="t" style="left:1805.0px;top:806.5px;font-size:13.5px;line-height:18px;color:#000;transform:scaleX(0.9400);transform-origin:0 50%;">0</span><svg class="a" style="left:1856px;top:805px;" width="15" height="20" viewBox="0 0 15 20"><rect x="0.5" y="0.5" width="14" height="8.5" fill="#f0f0f0" stroke="#c4c4c4"/><rect x="0.5" y="10.5" width="14" height="8.5" fill="#f0f0f0" stroke="#c4c4c4"/><path d="M4.0 7.0l3.5-4 3.5 4z" fill="#000"/><path d="M4.0 13.0l3.5 4 3.5-4z" fill="#000"/></svg><svg class="a" style="left:1277px;top:836px;" width="16" height="16" viewBox="0 0 16 16"><rect x="0.5" y="0.5" width="15" height="15" fill="#fff" stroke="#333"/></svg><span class="t" style="left:1299.5px;top:835.5px;font-size:13.5px;line-height:18px;color:#000;transform:scaleX(0.9400);transform-origin:0 50%;">Invert colors</span><span class="t" style="left:1604.0px;top:835.5px;font-size:13.5px;line-height:18px;color:#000;transform:scaleX(0.9400);transform-origin:0 50%;">Grayscale</span><div class="a" style="left:1670px;top:834px;width:202px;height:21px;background:#e1e1e1;border:1px solid #adadad;box-sizing:border-box;"></div><span class="t" style="left:1675.0px;top:836.0px;font-size:13.5px;line-height:18px;color:#000;transform:scaleX(0.9400);transform-origin:0 50%;">Off</span><svg class="a" style="left:1854px;top:840.5px;" width="12" height="9" viewBox="0 0 12 9"><path d="M1.5 2l4.5 4.5 4.5-4.5" stroke="#333" stroke-width="1.1" fill="none"/></svg><span class="t" style="left:1277.0px;top:866.5px;font-size:13.5px;line-height:18px;color:#000;transform:scaleX(0.9400);transform-origin:0 50%;">Hue</span><svg class="a" style="left:1368px;top:867px;" width="16" height="16" viewBox="0 0 16 16"><rect x="0.5" y="0.5" width="15" height="15" fill="#fff" stroke="#333"/></svg><span class="t" style="left:1390.5px;top:866.5px;font-size:13.5px;line-height:18px;color:#000;transform:scaleX(0.9400);transform-origin:0 50%;">Colorize</span><div class="a" style="left:1449px;top:863px;width:98px;height:24px;background:#d9d9d9;border:1px solid #c8c8c8;box-sizing:border-box;"></div><div class="a" style="left:1452px;top:866px;width:78px;height:18px;background:#c9c1c1;"></div><div class="a" style="left:1531px;top:866px;width:1px;height:18px;background:#f5f5f5;"></div><svg class="a" style="left:1533px;top:871px;" width="12" height="8" viewBox="0 0 12 8"><path d="M1 1h10l-5 6z" fill="#9a9a9a"/></svg><span class="t" style="left:1555.0px;top:866.5px;font-size:13.5px;line-height:18px;color:#000;transform:scaleX(0.9400);transform-origin:0 50%;">Strength</span><div class="a" style="left:1611px;top:873px;width:184px;height:3px;background:#e7eaea;border:1px solid #d6d6d6;box-sizing:border-box;"></div><div class="a" style="left:1782px;top:864px;width:12px;height:21px;background:#cccccc;"></div><div class="a" style="left:1803px;top:865px;width:69px;height:21px;background:#fff;border:1px solid #cfcfcf;box-sizing:border-box;"></div><span class="t" style="left:1807.0px;top:867.0px;font-size:13.5px;line-height:18px;color:#8f8f8f;transform:scaleX(0.9400);transform-origin:0 50%;">100%</span><svg class="a" style="left:1856px;top:866px;" width="15" height="19" viewBox="0 0 15 19"><rect x="0.5" y="0.5" width="14" height="8.0" fill="#f0f0f0" stroke="#c4c4c4"/><rect x="0.5" y="10.0" width="14" height="8.0" fill="#f0f0f0" stroke="#c4c4c4"/><path d="M4.0 6.5l3.5-4 3.5 4z" fill="#8f8f8f"/><path d="M4.0 12.5l3.5 4 3.5-4z" fill="#8f8f8f"/></svg><div class="a" style="left:1265px;top:915px;width:619px;height:52px;border:1px solid #dcdcdc;box-sizing:border-box;"></div><div class="a" style="left:1266px;top:908px;width:100px;height:16px;background:#f0f0f0;"></div><svg class="a" style="left:1267px;top:911.5px;" width="12" height="10" viewBox="0 0 12 10"><path d="M0.5 1h11l-5.5 8z" fill="#222"/></svg><span class="t" style="left:1287.0px;top:907.5px;font-size:13.5px;line-height:18px;color:#000;font-weight:bold;transform:scaleX(0.9541);transform-origin:0 50%;">Resampling</span><span class="t" style="left:1277.0px;top:937.5px;font-size:13.5px;line-height:18px;color:#000;transform:scaleX(0.9400);transform-origin:0 50%;">Zoomed: in</span><div class="a" style="left:1349px;top:936px;width:136px;height:21px;background:#e1e1e1;border:1px solid #adadad;box-sizing:border-box;"></div><span class="t" style="left:1354.0px;top:938.0px;font-size:13.5px;line-height:18px;color:#000;transform:scaleX(0.9400);transform-origin:0 50%;">Nearest Neighbour</span><svg class="a" style="left:1467px;top:942.5px;" width="12" height="9" viewBox="0 0 12 9"><path d="M1.5 2l4.5 4.5 4.5-4.5" stroke="#333" stroke-width="1.1" fill="none"/></svg><span class="t" style="left:1492.0px;top:937.5px;font-size:13.5px;line-height:18px;color:#000;transform:scaleX(0.9400);transform-origin:0 50%;">out</span><div class="a" style="left:1517px;top:936px;width:136px;height:21px;background:#e1e1e1;border:1px solid #adadad;box-sizing:border-box;"></div><span class="t" style="left:1522.0px;top:938.0px;font-size:13.5px;line-height:18px;color:#000;transform:scaleX(0.9400);transform-origin:0 50%;">Nearest Neighbour</span><svg class="a" style="left:1635px;top:942.5px;" width="12" height="9" viewBox="0 0 12 9"><path d="M1.5 2l4.5 4.5 4.5-4.5" stroke="#333" stroke-width="1.1" fill="none"/></svg><span class="t" style="left:1660.0px;top:937.5px;font-size:13.5px;line-height:18px;color:#000;transform:scaleX(0.9400);transform-origin:0 50%;">Oversampling</span><div class="a" style="left:1745px;top:936px;width:87px;height:21px;background:#fff;border:1px solid #7a7a7a;box-sizing:border-box;"></div><span class="t" style="left:1749.0px;top:938.0px;font-size:13.5px;line-height:18px;color:#000;transform:scaleX(0.9400);transform-origin:0 50%;">2.00</span><svg class="a" style="left:1788px;top:940.5px;" width="18" height="12" viewBox="0 0 18 12"><path d="M1 6l5-5h11v10h-11z" fill="#8f8f8f"/><path d="M8.5 3.5l5 5M13.5 3.5l-5 5" stroke="#fff" stroke-width="1.4"/></svg><svg class="a" style="left:1816px;top:937px;" width="14" height="19" viewBox="0 0 14 19"><rect x="0.5" y="0.5" width="13" height="8.0" fill="#f0f0f0" stroke="#c4c4c4"/><rect x="0.5" y="10.0" width="13" height="8.0" fill="#f0f0f0" stroke="#c4c4c4"/><path d="M3.5 6.5l3.5-4 3.5 4z" fill="#000"/><path d="M3.5 12.5l3.5 4 3.5-4z" fill="#000"/></svg><div class="a" style="left:1267px;top:977px;width:90px;height:26px;background:#e1e1e1;border:1px solid #adadad;box-sizing:border-box;"></div><span class="t" style="left:1290.0px;top:981.5px;font-size:13.5px;line-height:18px;color:#000;transform:scaleX(0.9400);transform-origin:0 50%;">Style</span><svg class="a" style="left:1341px;top:988px;" width="9" height="6" viewBox="0 0 9 6"><path d="M0.5 0.5h8l-4 5z" fill="#000"/></svg><div class="a" style="left:1492px;top:977px;width:91px;height:26px;background:#e1e1e1;border:1px solid #0078d7;box-sizing:border-box;box-shadow:inset 0 0 0 1px #0078d7;"></div><span class="t" style="left:1528.3px;top:981.5px;font-size:13.5px;line-height:18px;color:#000;transform:scaleX(0.9400);transform-origin:0 50%;">OK</span><div class="a" style="left:1592px;top:977px;width:91px;height:26px;background:#e1e1e1;border:1px solid #adadad;box-sizing:border-box;"></div><span class="t" style="left:1617.8px;top:981.5px;font-size:13.5px;line-height:18px;color:#000;transform:scaleX(0.9400);transform-origin:0 50%;">Cancel</span><div class="a" style="left:1692px;top:977px;width:91px;height:26px;background:#e1e1e1;border:1px solid #adadad;box-sizing:border-box;"></div><span class="t" style="left:1721.6px;top:981.5px;font-size:13.5px;line-height:18px;color:#000;transform:scaleX(0.9400);transform-origin:0 50%;">Apply</span><div class="a" style="left:1792px;top:977px;width:91px;height:26px;background:#e1e1e1;border:1px solid #adadad;box-sizing:border-box;"></div><span class="t" style="left:1824.5px;top:981.5px;font-size:13.5px;line-height:18px;color:#000;transform:scaleX(0.9400);transform-origin:0 50%;">Help</span>
</body></html>
